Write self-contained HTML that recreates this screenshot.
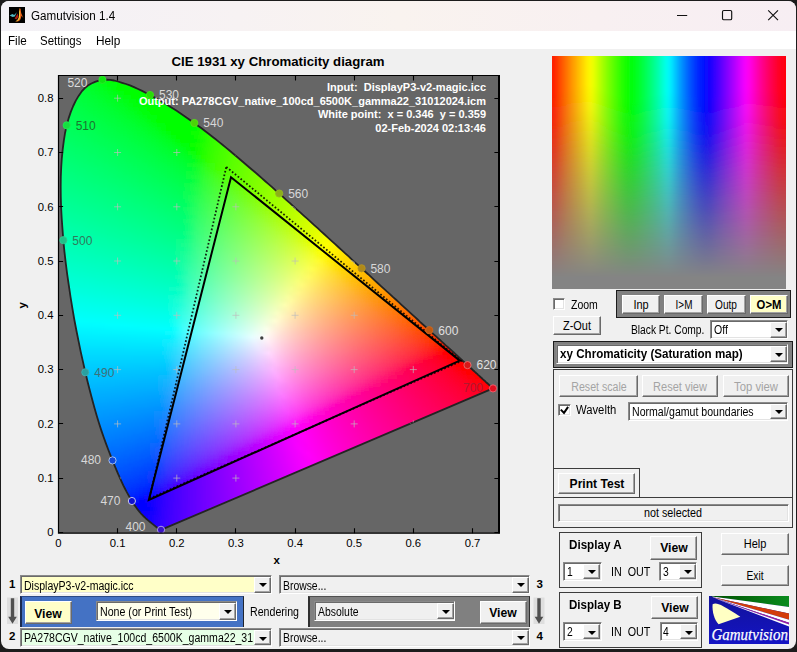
<!DOCTYPE html>
<html><head><meta charset="utf-8"><title>Gamutvision 1.4</title>
<style>
html,body{margin:0;padding:0;}
body{width:797px;height:652px;background:#1c1c1c;position:relative;overflow:hidden;font-family:'Liberation Sans', Arial, sans-serif;}
#win{position:absolute;left:1px;top:1px;width:795px;height:648px;border-radius:8px;background:#f0f0f0;overflow:hidden;}
#win *{box-sizing:border-box;}
#c{position:absolute;left:-1px;top:-1px;width:797px;height:652px;}
#c div{position:absolute;}
.t{position:absolute;white-space:nowrap;}
.btn{border:1px solid;border-color:#fff #6a6a6a #6a6a6a #fff;box-shadow:inset -1px -1px 0 #a3a3a3;}
.dd{border:1px solid;border-color:#8a8a8a #fff #fff #8a8a8a;box-shadow:inset 1px 1px 0 #6a6a6a, inset -1px -1px 0 #e3e3e3;}
.arr{width:0;height:0;border-left:4px solid transparent;border-right:4px solid transparent;border-top:4px solid #000;}
.pan{border:1px solid #3c3c3c;}
svg{position:absolute;left:0;top:0;}
</style></head><body><div id="win"><div id="c">

<div class="" style="left:0.0px;top:0.0px;width:797.0px;height:30.5px;background:linear-gradient(90deg,#f3f1f6 0%,#f7f2f3 30%,#f9f3ef 50%,#f8f0f1 75%,#f7eef3 100%);"></div>
<div class="" style="left:0.0px;top:30.5px;width:797.0px;height:18.5px;background:#fff;"></div>
<span class="t" style="left:31.4px;transform-origin:0 50%;top:7.6px;font-size:12px;line-height:16px;font-weight:normal;color:#000;transform:scaleX(0.970);">Gamutvision 1.4</span>
<span class="t" style="left:8.2px;transform-origin:0 50%;top:33.0px;font-size:12px;line-height:16px;font-weight:normal;color:#000;transform:scaleX(0.970);">File</span>
<span class="t" style="left:40.2px;transform-origin:0 50%;top:33.0px;font-size:12px;line-height:16px;font-weight:normal;color:#000;transform:scaleX(0.955);">Settings</span>
<span class="t" style="left:96.3px;transform-origin:0 50%;top:33.0px;font-size:12px;line-height:16px;font-weight:normal;color:#000;transform:scaleX(0.985);">Help</span>
<svg width="797" height="652" viewBox="0 0 797 652" font-family="'Liberation Sans', Arial, sans-serif">
<defs>
<linearGradient id="g0" gradientUnits="userSpaceOnUse" x1="89.4" x2="126.4" y1="0" y2="0"><stop offset="0" stop-color="#00ff23"/><stop offset="0.333" stop-color="#00ff14"/><stop offset="0.667" stop-color="#00ff00"/><stop offset="1" stop-color="#00ff00"/></linearGradient>
<linearGradient id="g1" gradientUnits="userSpaceOnUse" x1="83.6" x2="136.9" y1="0" y2="0"><stop offset="0" stop-color="#00ff2d"/><stop offset="0.25" stop-color="#00ff21"/><stop offset="0.5" stop-color="#00ff0d"/><stop offset="0.75" stop-color="#00ff00"/><stop offset="1" stop-color="#00ff00"/></linearGradient>
<linearGradient id="g2" gradientUnits="userSpaceOnUse" x1="79.7" x2="145.2" y1="0" y2="0"><stop offset="0" stop-color="#00ff34"/><stop offset="0.2" stop-color="#00ff2a"/><stop offset="0.4" stop-color="#00ff1c"/><stop offset="0.6" stop-color="#00ff00"/><stop offset="0.8" stop-color="#00ff00"/><stop offset="1" stop-color="#00ff00"/></linearGradient>
<linearGradient id="g3" gradientUnits="userSpaceOnUse" x1="76.8" x2="152.9" y1="0" y2="0"><stop offset="0" stop-color="#00ff3a"/><stop offset="0.167" stop-color="#00ff31"/><stop offset="0.333" stop-color="#00ff26"/><stop offset="0.5" stop-color="#00ff17"/><stop offset="0.667" stop-color="#00ff00"/><stop offset="0.833" stop-color="#00ff00"/><stop offset="1" stop-color="#00ff00"/></linearGradient>
<linearGradient id="g4" gradientUnits="userSpaceOnUse" x1="74.4" x2="160.2" y1="0" y2="0"><stop offset="0" stop-color="#00ff3f"/><stop offset="0.143" stop-color="#00ff37"/><stop offset="0.286" stop-color="#00ff2e"/><stop offset="0.429" stop-color="#00ff22"/><stop offset="0.571" stop-color="#00ff11"/><stop offset="0.714" stop-color="#00ff00"/><stop offset="0.857" stop-color="#00ff00"/><stop offset="1" stop-color="#00ff00"/></linearGradient>
<linearGradient id="g5" gradientUnits="userSpaceOnUse" x1="72.4" x2="167.0" y1="0" y2="0"><stop offset="0" stop-color="#00ff44"/><stop offset="0.143" stop-color="#00ff3c"/><stop offset="0.286" stop-color="#00ff32"/><stop offset="0.429" stop-color="#00ff26"/><stop offset="0.571" stop-color="#00ff15"/><stop offset="0.714" stop-color="#00ff00"/><stop offset="0.857" stop-color="#00ff00"/><stop offset="1" stop-color="#00ff00"/></linearGradient>
<linearGradient id="g6" gradientUnits="userSpaceOnUse" x1="70.6" x2="173.4" y1="0" y2="0"><stop offset="0" stop-color="#00ff48"/><stop offset="0.125" stop-color="#00ff41"/><stop offset="0.25" stop-color="#00ff38"/><stop offset="0.375" stop-color="#00ff2e"/><stop offset="0.5" stop-color="#00ff22"/><stop offset="0.625" stop-color="#00ff0e"/><stop offset="0.75" stop-color="#00ff00"/><stop offset="0.875" stop-color="#00ff00"/><stop offset="1" stop-color="#00ff00"/></linearGradient>
<linearGradient id="g7" gradientUnits="userSpaceOnUse" x1="68.9" x2="179.6" y1="0" y2="0"><stop offset="0" stop-color="#00ff4c"/><stop offset="0.125" stop-color="#00ff45"/><stop offset="0.25" stop-color="#00ff3c"/><stop offset="0.375" stop-color="#00ff32"/><stop offset="0.5" stop-color="#00ff25"/><stop offset="0.625" stop-color="#00ff12"/><stop offset="0.75" stop-color="#00ff00"/><stop offset="0.875" stop-color="#00ff00"/><stop offset="1" stop-color="#00ff00"/></linearGradient>
<linearGradient id="g8" gradientUnits="userSpaceOnUse" x1="67.6" x2="185.6" y1="0" y2="0"><stop offset="0" stop-color="#00ff50"/><stop offset="0.111" stop-color="#00ff49"/><stop offset="0.222" stop-color="#00ff41"/><stop offset="0.333" stop-color="#00ff39"/><stop offset="0.444" stop-color="#00ff2e"/><stop offset="0.556" stop-color="#00ff21"/><stop offset="0.667" stop-color="#00ff09"/><stop offset="0.778" stop-color="#00ff00"/><stop offset="0.889" stop-color="#00ff00"/><stop offset="1" stop-color="#00ff00"/></linearGradient>
<linearGradient id="g9" gradientUnits="userSpaceOnUse" x1="66.3" x2="191.3" y1="0" y2="0"><stop offset="0" stop-color="#00ff54"/><stop offset="0.111" stop-color="#00ff4d"/><stop offset="0.222" stop-color="#00ff45"/><stop offset="0.333" stop-color="#00ff3c"/><stop offset="0.444" stop-color="#00ff31"/><stop offset="0.556" stop-color="#00ff24"/><stop offset="0.667" stop-color="#00ff0e"/><stop offset="0.778" stop-color="#00ff00"/><stop offset="0.889" stop-color="#00ff00"/><stop offset="1" stop-color="#00ff00"/></linearGradient>
<linearGradient id="g10" gradientUnits="userSpaceOnUse" x1="65.2" x2="196.9" y1="0" y2="0"><stop offset="0" stop-color="#00ff57"/><stop offset="0.1" stop-color="#00ff51"/><stop offset="0.2" stop-color="#00ff4a"/><stop offset="0.3" stop-color="#00ff42"/><stop offset="0.4" stop-color="#00ff39"/><stop offset="0.5" stop-color="#00ff2e"/><stop offset="0.6" stop-color="#00ff20"/><stop offset="0.7" stop-color="#00ff03"/><stop offset="0.8" stop-color="#00ff00"/><stop offset="0.9" stop-color="#00ff00"/><stop offset="1" stop-color="#00ff00"/></linearGradient>
<linearGradient id="g11" gradientUnits="userSpaceOnUse" x1="64.2" x2="202.4" y1="0" y2="0"><stop offset="0" stop-color="#00ff5b"/><stop offset="0.1" stop-color="#00ff54"/><stop offset="0.2" stop-color="#00ff4d"/><stop offset="0.3" stop-color="#00ff45"/><stop offset="0.4" stop-color="#00ff3c"/><stop offset="0.5" stop-color="#00ff31"/><stop offset="0.6" stop-color="#00ff23"/><stop offset="0.7" stop-color="#00ff0a"/><stop offset="0.8" stop-color="#00ff00"/><stop offset="0.9" stop-color="#00ff00"/><stop offset="1" stop-color="#19ff00"/></linearGradient>
<linearGradient id="g12" gradientUnits="userSpaceOnUse" x1="63.4" x2="207.6" y1="0" y2="0"><stop offset="0" stop-color="#00ff5e"/><stop offset="0.0909" stop-color="#00ff58"/><stop offset="0.182" stop-color="#00ff52"/><stop offset="0.273" stop-color="#00ff4a"/><stop offset="0.364" stop-color="#00ff42"/><stop offset="0.455" stop-color="#00ff39"/><stop offset="0.545" stop-color="#00ff2e"/><stop offset="0.636" stop-color="#00ff1f"/><stop offset="0.727" stop-color="#00ff00"/><stop offset="0.818" stop-color="#00ff00"/><stop offset="0.909" stop-color="#00ff00"/><stop offset="1" stop-color="#28ff00"/></linearGradient>
<linearGradient id="g13" gradientUnits="userSpaceOnUse" x1="62.7" x2="212.8" y1="0" y2="0"><stop offset="0" stop-color="#00ff61"/><stop offset="0.0909" stop-color="#00ff5b"/><stop offset="0.182" stop-color="#00ff55"/><stop offset="0.273" stop-color="#00ff4d"/><stop offset="0.364" stop-color="#00ff45"/><stop offset="0.455" stop-color="#00ff3c"/><stop offset="0.545" stop-color="#00ff30"/><stop offset="0.636" stop-color="#00ff22"/><stop offset="0.727" stop-color="#00ff05"/><stop offset="0.818" stop-color="#00ff00"/><stop offset="0.909" stop-color="#11ff00"/><stop offset="1" stop-color="#33ff00"/></linearGradient>
<linearGradient id="g14" gradientUnits="userSpaceOnUse" x1="62.0" x2="217.9" y1="0" y2="0"><stop offset="0" stop-color="#00ff65"/><stop offset="0.0833" stop-color="#00ff5f"/><stop offset="0.167" stop-color="#00ff59"/><stop offset="0.25" stop-color="#00ff52"/><stop offset="0.333" stop-color="#00ff4b"/><stop offset="0.417" stop-color="#00ff43"/><stop offset="0.5" stop-color="#00ff39"/><stop offset="0.583" stop-color="#00ff2e"/><stop offset="0.667" stop-color="#00ff1e"/><stop offset="0.75" stop-color="#00ff00"/><stop offset="0.833" stop-color="#00ff00"/><stop offset="0.917" stop-color="#24ff00"/><stop offset="1" stop-color="#3dff00"/></linearGradient>
<linearGradient id="g15" gradientUnits="userSpaceOnUse" x1="61.4" x2="222.9" y1="0" y2="0"><stop offset="0" stop-color="#00ff68"/><stop offset="0.0833" stop-color="#00ff62"/><stop offset="0.167" stop-color="#00ff5c"/><stop offset="0.25" stop-color="#00ff55"/><stop offset="0.333" stop-color="#00ff4e"/><stop offset="0.417" stop-color="#00ff45"/><stop offset="0.5" stop-color="#00ff3c"/><stop offset="0.583" stop-color="#00ff30"/><stop offset="0.667" stop-color="#00ff21"/><stop offset="0.75" stop-color="#00ff00"/><stop offset="0.833" stop-color="#03ff00"/><stop offset="0.917" stop-color="#2fff00"/><stop offset="1" stop-color="#46ff00"/></linearGradient>
<linearGradient id="g16" gradientUnits="userSpaceOnUse" x1="60.9" x2="227.8" y1="0" y2="0"><stop offset="0" stop-color="#00ff6b"/><stop offset="0.0833" stop-color="#00ff65"/><stop offset="0.167" stop-color="#00ff5f"/><stop offset="0.25" stop-color="#00ff58"/><stop offset="0.333" stop-color="#00ff51"/><stop offset="0.417" stop-color="#00ff48"/><stop offset="0.5" stop-color="#00ff3f"/><stop offset="0.583" stop-color="#00ff33"/><stop offset="0.667" stop-color="#00ff24"/><stop offset="0.75" stop-color="#00ff08"/><stop offset="0.833" stop-color="#1aff00"/><stop offset="0.917" stop-color="#39ff00"/><stop offset="1" stop-color="#4eff00"/></linearGradient>
<linearGradient id="g17" gradientUnits="userSpaceOnUse" x1="60.5" x2="232.7" y1="0" y2="0"><stop offset="0" stop-color="#00ff6e"/><stop offset="0.0769" stop-color="#00ff69"/><stop offset="0.154" stop-color="#00ff63"/><stop offset="0.231" stop-color="#00ff5d"/><stop offset="0.308" stop-color="#00ff56"/><stop offset="0.385" stop-color="#00ff4e"/><stop offset="0.462" stop-color="#00ff46"/><stop offset="0.538" stop-color="#00ff3c"/><stop offset="0.615" stop-color="#00ff30"/><stop offset="0.692" stop-color="#00ff21"/><stop offset="0.769" stop-color="#00ff00"/><stop offset="0.846" stop-color="#2bff00"/><stop offset="0.923" stop-color="#43ff00"/><stop offset="1" stop-color="#56ff00"/></linearGradient>
<linearGradient id="g18" gradientUnits="userSpaceOnUse" x1="60.1" x2="237.4" y1="0" y2="0"><stop offset="0" stop-color="#00ff71"/><stop offset="0.0769" stop-color="#00ff6c"/><stop offset="0.154" stop-color="#00ff66"/><stop offset="0.231" stop-color="#00ff60"/><stop offset="0.308" stop-color="#00ff59"/><stop offset="0.385" stop-color="#00ff51"/><stop offset="0.462" stop-color="#00ff49"/><stop offset="0.538" stop-color="#00ff3f"/><stop offset="0.615" stop-color="#00ff33"/><stop offset="0.692" stop-color="#00ff23"/><stop offset="0.769" stop-color="#11ff05"/><stop offset="0.846" stop-color="#34ff00"/><stop offset="0.923" stop-color="#4bff00"/><stop offset="1" stop-color="#5dff00"/></linearGradient>
<linearGradient id="g19" gradientUnits="userSpaceOnUse" x1="59.7" x2="242.2" y1="0" y2="0"><stop offset="0" stop-color="#00ff74"/><stop offset="0.0714" stop-color="#00ff6f"/><stop offset="0.143" stop-color="#00ff6a"/><stop offset="0.214" stop-color="#00ff64"/><stop offset="0.286" stop-color="#00ff5e"/><stop offset="0.357" stop-color="#00ff57"/><stop offset="0.429" stop-color="#00ff4f"/><stop offset="0.5" stop-color="#00ff47"/><stop offset="0.571" stop-color="#00ff3d"/><stop offset="0.643" stop-color="#00ff31"/><stop offset="0.714" stop-color="#00ff21"/><stop offset="0.786" stop-color="#27ff00"/><stop offset="0.857" stop-color="#40ff00"/><stop offset="0.929" stop-color="#54ff00"/><stop offset="1" stop-color="#65ff00"/></linearGradient>
<linearGradient id="g20" gradientUnits="userSpaceOnUse" x1="59.5" x2="246.9" y1="0" y2="0"><stop offset="0" stop-color="#00ff77"/><stop offset="0.0714" stop-color="#00ff72"/><stop offset="0.143" stop-color="#00ff6c"/><stop offset="0.214" stop-color="#00ff67"/><stop offset="0.286" stop-color="#00ff60"/><stop offset="0.357" stop-color="#00ff59"/><stop offset="0.429" stop-color="#00ff52"/><stop offset="0.5" stop-color="#00ff49"/><stop offset="0.571" stop-color="#00ff3f"/><stop offset="0.643" stop-color="#00ff33"/><stop offset="0.714" stop-color="#00ff23"/><stop offset="0.786" stop-color="#30ff01"/><stop offset="0.857" stop-color="#48ff00"/><stop offset="0.929" stop-color="#5bff00"/><stop offset="1" stop-color="#6cff00"/></linearGradient>
<linearGradient id="g21" gradientUnits="userSpaceOnUse" x1="59.2" x2="251.5" y1="0" y2="0"><stop offset="0" stop-color="#00ff7a"/><stop offset="0.0714" stop-color="#00ff75"/><stop offset="0.143" stop-color="#00ff6f"/><stop offset="0.214" stop-color="#00ff6a"/><stop offset="0.286" stop-color="#00ff63"/><stop offset="0.357" stop-color="#00ff5c"/><stop offset="0.429" stop-color="#00ff55"/><stop offset="0.5" stop-color="#00ff4c"/><stop offset="0.571" stop-color="#00ff42"/><stop offset="0.643" stop-color="#00ff36"/><stop offset="0.714" stop-color="#18ff26"/><stop offset="0.786" stop-color="#39ff0a"/><stop offset="0.857" stop-color="#4fff00"/><stop offset="0.929" stop-color="#62ff00"/><stop offset="1" stop-color="#73ff00"/></linearGradient>
<linearGradient id="g22" gradientUnits="userSpaceOnUse" x1="59.0" x2="256.2" y1="0" y2="0"><stop offset="0" stop-color="#00ff7d"/><stop offset="0.0667" stop-color="#00ff78"/><stop offset="0.133" stop-color="#00ff73"/><stop offset="0.2" stop-color="#00ff6e"/><stop offset="0.267" stop-color="#00ff68"/><stop offset="0.333" stop-color="#00ff61"/><stop offset="0.4" stop-color="#00ff5a"/><stop offset="0.467" stop-color="#00ff53"/><stop offset="0.533" stop-color="#00ff4a"/><stop offset="0.6" stop-color="#00ff40"/><stop offset="0.667" stop-color="#00ff34"/><stop offset="0.733" stop-color="#2dff24"/><stop offset="0.8" stop-color="#45ff00"/><stop offset="0.867" stop-color="#59ff00"/><stop offset="0.933" stop-color="#6aff00"/><stop offset="1" stop-color="#7aff00"/></linearGradient>
<linearGradient id="g23" gradientUnits="userSpaceOnUse" x1="58.9" x2="260.8" y1="0" y2="0"><stop offset="0" stop-color="#00ff80"/><stop offset="0.0667" stop-color="#00ff7b"/><stop offset="0.133" stop-color="#00ff76"/><stop offset="0.2" stop-color="#00ff70"/><stop offset="0.267" stop-color="#00ff6b"/><stop offset="0.333" stop-color="#00ff64"/><stop offset="0.4" stop-color="#00ff5d"/><stop offset="0.467" stop-color="#00ff55"/><stop offset="0.533" stop-color="#00ff4d"/><stop offset="0.6" stop-color="#00ff42"/><stop offset="0.667" stop-color="#0fff36"/><stop offset="0.733" stop-color="#35ff26"/><stop offset="0.8" stop-color="#4cff09"/><stop offset="0.867" stop-color="#5fff00"/><stop offset="0.933" stop-color="#71ff00"/><stop offset="1" stop-color="#81ff00"/></linearGradient>
<linearGradient id="g24" gradientUnits="userSpaceOnUse" x1="58.8" x2="265.3" y1="0" y2="0"><stop offset="0" stop-color="#00ff83"/><stop offset="0.0667" stop-color="#00ff7e"/><stop offset="0.133" stop-color="#00ff79"/><stop offset="0.2" stop-color="#00ff73"/><stop offset="0.267" stop-color="#00ff6d"/><stop offset="0.333" stop-color="#00ff67"/><stop offset="0.4" stop-color="#00ff60"/><stop offset="0.467" stop-color="#00ff58"/><stop offset="0.533" stop-color="#00ff4f"/><stop offset="0.6" stop-color="#00ff45"/><stop offset="0.667" stop-color="#1dff39"/><stop offset="0.733" stop-color="#3dff29"/><stop offset="0.8" stop-color="#53ff0f"/><stop offset="0.867" stop-color="#66ff00"/><stop offset="0.933" stop-color="#77ff00"/><stop offset="1" stop-color="#87ff00"/></linearGradient>
<linearGradient id="g25" gradientUnits="userSpaceOnUse" x1="58.7" x2="269.9" y1="0" y2="0"><stop offset="0" stop-color="#00ff85"/><stop offset="0.0625" stop-color="#00ff81"/><stop offset="0.125" stop-color="#00ff7c"/><stop offset="0.188" stop-color="#00ff77"/><stop offset="0.25" stop-color="#00ff72"/><stop offset="0.312" stop-color="#00ff6c"/><stop offset="0.375" stop-color="#00ff65"/><stop offset="0.438" stop-color="#00ff5e"/><stop offset="0.5" stop-color="#00ff56"/><stop offset="0.562" stop-color="#00ff4e"/><stop offset="0.625" stop-color="#00ff43"/><stop offset="0.688" stop-color="#32ff37"/><stop offset="0.75" stop-color="#4aff27"/><stop offset="0.812" stop-color="#5dff09"/><stop offset="0.875" stop-color="#6fff00"/><stop offset="0.938" stop-color="#7fff00"/><stop offset="1" stop-color="#8eff00"/></linearGradient>
<linearGradient id="g26" gradientUnits="userSpaceOnUse" x1="58.7" x2="274.4" y1="0" y2="0"><stop offset="0" stop-color="#00ff88"/><stop offset="0.0625" stop-color="#00ff84"/><stop offset="0.125" stop-color="#00ff7f"/><stop offset="0.188" stop-color="#00ff7a"/><stop offset="0.25" stop-color="#00ff75"/><stop offset="0.312" stop-color="#00ff6f"/><stop offset="0.375" stop-color="#00ff68"/><stop offset="0.438" stop-color="#00ff61"/><stop offset="0.5" stop-color="#00ff59"/><stop offset="0.562" stop-color="#00ff50"/><stop offset="0.625" stop-color="#17ff46"/><stop offset="0.688" stop-color="#39ff39"/><stop offset="0.75" stop-color="#50ff29"/><stop offset="0.812" stop-color="#64ff0f"/><stop offset="0.875" stop-color="#75ff00"/><stop offset="0.938" stop-color="#86ff00"/><stop offset="1" stop-color="#95ff00"/></linearGradient>
<linearGradient id="g27" gradientUnits="userSpaceOnUse" x1="58.7" x2="278.9" y1="0" y2="0"><stop offset="0" stop-color="#00ff8b"/><stop offset="0.0625" stop-color="#00ff87"/><stop offset="0.125" stop-color="#00ff82"/><stop offset="0.188" stop-color="#00ff7d"/><stop offset="0.25" stop-color="#00ff78"/><stop offset="0.312" stop-color="#00ff72"/><stop offset="0.375" stop-color="#00ff6b"/><stop offset="0.438" stop-color="#00ff64"/><stop offset="0.5" stop-color="#00ff5c"/><stop offset="0.562" stop-color="#00ff53"/><stop offset="0.625" stop-color="#22ff48"/><stop offset="0.688" stop-color="#40ff3c"/><stop offset="0.75" stop-color="#57ff2c"/><stop offset="0.812" stop-color="#6aff13"/><stop offset="0.875" stop-color="#7cff00"/><stop offset="0.938" stop-color="#8cff00"/><stop offset="1" stop-color="#9cff00"/></linearGradient>
<linearGradient id="g28" gradientUnits="userSpaceOnUse" x1="58.7" x2="283.4" y1="0" y2="0"><stop offset="0" stop-color="#00ff8e"/><stop offset="0.0588" stop-color="#00ff8a"/><stop offset="0.118" stop-color="#00ff86"/><stop offset="0.176" stop-color="#00ff81"/><stop offset="0.235" stop-color="#00ff7c"/><stop offset="0.294" stop-color="#00ff76"/><stop offset="0.353" stop-color="#00ff70"/><stop offset="0.412" stop-color="#00ff6a"/><stop offset="0.471" stop-color="#00ff62"/><stop offset="0.529" stop-color="#00ff5a"/><stop offset="0.588" stop-color="#10ff51"/><stop offset="0.647" stop-color="#36ff47"/><stop offset="0.706" stop-color="#4eff3a"/><stop offset="0.765" stop-color="#62ff2a"/><stop offset="0.824" stop-color="#74ff0f"/><stop offset="0.882" stop-color="#84ff00"/><stop offset="0.941" stop-color="#94ff00"/><stop offset="1" stop-color="#a3ff00"/></linearGradient>
<linearGradient id="g29" gradientUnits="userSpaceOnUse" x1="58.8" x2="287.9" y1="0" y2="0"><stop offset="0" stop-color="#00ff91"/><stop offset="0.0588" stop-color="#00ff8d"/><stop offset="0.118" stop-color="#00ff89"/><stop offset="0.176" stop-color="#00ff84"/><stop offset="0.235" stop-color="#00ff7f"/><stop offset="0.294" stop-color="#00ff79"/><stop offset="0.353" stop-color="#00ff73"/><stop offset="0.412" stop-color="#00ff6d"/><stop offset="0.471" stop-color="#00ff65"/><stop offset="0.529" stop-color="#00ff5d"/><stop offset="0.588" stop-color="#1dff54"/><stop offset="0.647" stop-color="#3eff4a"/><stop offset="0.706" stop-color="#55ff3d"/><stop offset="0.765" stop-color="#68ff2d"/><stop offset="0.824" stop-color="#7aff13"/><stop offset="0.882" stop-color="#8bff00"/><stop offset="0.941" stop-color="#9bff00"/><stop offset="1" stop-color="#aaff00"/></linearGradient>
<linearGradient id="g30" gradientUnits="userSpaceOnUse" x1="58.9" x2="292.3" y1="0" y2="0"><stop offset="0" stop-color="#00ff94"/><stop offset="0.0588" stop-color="#00ff90"/><stop offset="0.118" stop-color="#00ff8b"/><stop offset="0.176" stop-color="#00ff87"/><stop offset="0.235" stop-color="#00ff82"/><stop offset="0.294" stop-color="#00ff7c"/><stop offset="0.353" stop-color="#00ff76"/><stop offset="0.412" stop-color="#00ff6f"/><stop offset="0.471" stop-color="#00ff68"/><stop offset="0.529" stop-color="#00ff60"/><stop offset="0.588" stop-color="#27ff57"/><stop offset="0.647" stop-color="#44ff4c"/><stop offset="0.706" stop-color="#5bff40"/><stop offset="0.765" stop-color="#6eff30"/><stop offset="0.824" stop-color="#80ff17"/><stop offset="0.882" stop-color="#91ff00"/><stop offset="0.941" stop-color="#a2ff00"/><stop offset="1" stop-color="#b2ff00"/></linearGradient>
<linearGradient id="g31" gradientUnits="userSpaceOnUse" x1="59.0" x2="296.8" y1="0" y2="0"><stop offset="0" stop-color="#00ff97"/><stop offset="0.0588" stop-color="#00ff93"/><stop offset="0.118" stop-color="#00ff8e"/><stop offset="0.176" stop-color="#00ff8a"/><stop offset="0.235" stop-color="#00ff84"/><stop offset="0.294" stop-color="#00ff7f"/><stop offset="0.353" stop-color="#00ff79"/><stop offset="0.412" stop-color="#00ff72"/><stop offset="0.471" stop-color="#00ff6b"/><stop offset="0.529" stop-color="#00ff63"/><stop offset="0.588" stop-color="#2fff5a"/><stop offset="0.647" stop-color="#4bff4f"/><stop offset="0.706" stop-color="#61ff42"/><stop offset="0.765" stop-color="#75ff32"/><stop offset="0.824" stop-color="#87ff1a"/><stop offset="0.882" stop-color="#98ff00"/><stop offset="0.941" stop-color="#a9ff00"/><stop offset="1" stop-color="#b9ff00"/></linearGradient>
<linearGradient id="g32" gradientUnits="userSpaceOnUse" x1="59.1" x2="301.2" y1="0" y2="0"><stop offset="0" stop-color="#00ff9a"/><stop offset="0.0556" stop-color="#00ff96"/><stop offset="0.111" stop-color="#00ff92"/><stop offset="0.167" stop-color="#00ff8d"/><stop offset="0.222" stop-color="#00ff89"/><stop offset="0.278" stop-color="#00ff83"/><stop offset="0.333" stop-color="#00ff7e"/><stop offset="0.389" stop-color="#00ff78"/><stop offset="0.444" stop-color="#00ff71"/><stop offset="0.5" stop-color="#00ff6a"/><stop offset="0.556" stop-color="#23ff62"/><stop offset="0.611" stop-color="#42ff58"/><stop offset="0.667" stop-color="#59ff4e"/><stop offset="0.722" stop-color="#6dff41"/><stop offset="0.778" stop-color="#7fff31"/><stop offset="0.833" stop-color="#90ff18"/><stop offset="0.889" stop-color="#a1ff00"/><stop offset="0.944" stop-color="#b1ff00"/><stop offset="1" stop-color="#c1ff00"/></linearGradient>
<linearGradient id="g33" gradientUnits="userSpaceOnUse" x1="59.3" x2="305.6" y1="0" y2="0"><stop offset="0" stop-color="#00ff9d"/><stop offset="0.0556" stop-color="#00ff99"/><stop offset="0.111" stop-color="#00ff95"/><stop offset="0.167" stop-color="#00ff90"/><stop offset="0.222" stop-color="#00ff8c"/><stop offset="0.278" stop-color="#00ff86"/><stop offset="0.333" stop-color="#00ff81"/><stop offset="0.389" stop-color="#00ff7b"/><stop offset="0.444" stop-color="#00ff74"/><stop offset="0.5" stop-color="#00ff6d"/><stop offset="0.556" stop-color="#2cff64"/><stop offset="0.611" stop-color="#49ff5b"/><stop offset="0.667" stop-color="#5fff50"/><stop offset="0.722" stop-color="#73ff44"/><stop offset="0.778" stop-color="#85ff33"/><stop offset="0.833" stop-color="#97ff1b"/><stop offset="0.889" stop-color="#a8ff00"/><stop offset="0.944" stop-color="#b8ff00"/><stop offset="1" stop-color="#c9ff00"/></linearGradient>
<linearGradient id="g34" gradientUnits="userSpaceOnUse" x1="59.6" x2="310.0" y1="0" y2="0"><stop offset="0" stop-color="#00ffa0"/><stop offset="0.0556" stop-color="#00ff9c"/><stop offset="0.111" stop-color="#00ff98"/><stop offset="0.167" stop-color="#00ff93"/><stop offset="0.222" stop-color="#00ff8f"/><stop offset="0.278" stop-color="#00ff89"/><stop offset="0.333" stop-color="#00ff84"/><stop offset="0.389" stop-color="#00ff7e"/><stop offset="0.444" stop-color="#00ff77"/><stop offset="0.5" stop-color="#00ff70"/><stop offset="0.556" stop-color="#34ff67"/><stop offset="0.611" stop-color="#4fff5e"/><stop offset="0.667" stop-color="#65ff53"/><stop offset="0.722" stop-color="#79ff46"/><stop offset="0.778" stop-color="#8cff36"/><stop offset="0.833" stop-color="#9eff1f"/><stop offset="0.889" stop-color="#afff00"/><stop offset="0.944" stop-color="#c0ff00"/><stop offset="1" stop-color="#d1ff00"/></linearGradient>
<linearGradient id="g35" gradientUnits="userSpaceOnUse" x1="59.8" x2="314.5" y1="0" y2="0"><stop offset="0" stop-color="#00ffa3"/><stop offset="0.0526" stop-color="#00ff9f"/><stop offset="0.105" stop-color="#00ff9b"/><stop offset="0.158" stop-color="#00ff97"/><stop offset="0.211" stop-color="#00ff93"/><stop offset="0.263" stop-color="#00ff8e"/><stop offset="0.316" stop-color="#00ff89"/><stop offset="0.368" stop-color="#00ff83"/><stop offset="0.421" stop-color="#00ff7d"/><stop offset="0.474" stop-color="#00ff76"/><stop offset="0.526" stop-color="#29ff6f"/><stop offset="0.579" stop-color="#47ff67"/><stop offset="0.632" stop-color="#5eff5d"/><stop offset="0.684" stop-color="#72ff52"/><stop offset="0.737" stop-color="#85ff45"/><stop offset="0.789" stop-color="#96ff35"/><stop offset="0.842" stop-color="#a7ff1d"/><stop offset="0.895" stop-color="#b8ff00"/><stop offset="0.947" stop-color="#c8ff00"/><stop offset="1" stop-color="#d9ff00"/></linearGradient>
<linearGradient id="g36" gradientUnits="userSpaceOnUse" x1="60.1" x2="318.9" y1="0" y2="0"><stop offset="0" stop-color="#00ffa6"/><stop offset="0.0526" stop-color="#00ffa3"/><stop offset="0.105" stop-color="#00ff9f"/><stop offset="0.158" stop-color="#00ff9a"/><stop offset="0.211" stop-color="#00ff96"/><stop offset="0.263" stop-color="#00ff91"/><stop offset="0.316" stop-color="#00ff8c"/><stop offset="0.368" stop-color="#00ff86"/><stop offset="0.421" stop-color="#00ff80"/><stop offset="0.474" stop-color="#00ff79"/><stop offset="0.526" stop-color="#31ff72"/><stop offset="0.579" stop-color="#4dff69"/><stop offset="0.632" stop-color="#64ff60"/><stop offset="0.684" stop-color="#78ff55"/><stop offset="0.737" stop-color="#8bff48"/><stop offset="0.789" stop-color="#9dff38"/><stop offset="0.842" stop-color="#aeff20"/><stop offset="0.895" stop-color="#bfff00"/><stop offset="0.947" stop-color="#d0ff00"/><stop offset="1" stop-color="#e1ff00"/></linearGradient>
<linearGradient id="g37" gradientUnits="userSpaceOnUse" x1="60.3" x2="323.3" y1="0" y2="0"><stop offset="0" stop-color="#00ffa9"/><stop offset="0.0526" stop-color="#00ffa6"/><stop offset="0.105" stop-color="#00ffa2"/><stop offset="0.158" stop-color="#00ff9e"/><stop offset="0.211" stop-color="#00ff99"/><stop offset="0.263" stop-color="#00ff94"/><stop offset="0.316" stop-color="#00ff8f"/><stop offset="0.368" stop-color="#00ff89"/><stop offset="0.421" stop-color="#00ff83"/><stop offset="0.474" stop-color="#05ff7c"/><stop offset="0.526" stop-color="#39ff75"/><stop offset="0.579" stop-color="#54ff6d"/><stop offset="0.632" stop-color="#6aff63"/><stop offset="0.684" stop-color="#7fff58"/><stop offset="0.737" stop-color="#91ff4b"/><stop offset="0.789" stop-color="#a4ff3b"/><stop offset="0.842" stop-color="#b5ff23"/><stop offset="0.895" stop-color="#c7ff00"/><stop offset="0.947" stop-color="#d8ff00"/><stop offset="1" stop-color="#eaff00"/></linearGradient>
<linearGradient id="g38" gradientUnits="userSpaceOnUse" x1="60.6" x2="327.7" y1="0" y2="0"><stop offset="0" stop-color="#00ffac"/><stop offset="0.05" stop-color="#00ffa9"/><stop offset="0.1" stop-color="#00ffa5"/><stop offset="0.15" stop-color="#00ffa1"/><stop offset="0.2" stop-color="#00ff9d"/><stop offset="0.25" stop-color="#00ff99"/><stop offset="0.3" stop-color="#00ff94"/><stop offset="0.35" stop-color="#00ff8f"/><stop offset="0.4" stop-color="#00ff89"/><stop offset="0.45" stop-color="#00ff83"/><stop offset="0.5" stop-color="#2fff7c"/><stop offset="0.55" stop-color="#4cff74"/><stop offset="0.6" stop-color="#63ff6c"/><stop offset="0.65" stop-color="#78ff62"/><stop offset="0.7" stop-color="#8bff57"/><stop offset="0.75" stop-color="#9dff4a"/><stop offset="0.8" stop-color="#aeff3a"/><stop offset="0.85" stop-color="#bfff22"/><stop offset="0.9" stop-color="#d1ff00"/><stop offset="0.95" stop-color="#e2ff00"/><stop offset="1" stop-color="#f3ff00"/></linearGradient>
<linearGradient id="g39" gradientUnits="userSpaceOnUse" x1="61.0" x2="332.1" y1="0" y2="0"><stop offset="0" stop-color="#00ffb0"/><stop offset="0.05" stop-color="#00ffac"/><stop offset="0.1" stop-color="#00ffa8"/><stop offset="0.15" stop-color="#00ffa5"/><stop offset="0.2" stop-color="#00ffa0"/><stop offset="0.25" stop-color="#00ff9c"/><stop offset="0.3" stop-color="#00ff97"/><stop offset="0.35" stop-color="#00ff92"/><stop offset="0.4" stop-color="#00ff8c"/><stop offset="0.45" stop-color="#00ff86"/><stop offset="0.5" stop-color="#37ff7f"/><stop offset="0.55" stop-color="#53ff78"/><stop offset="0.6" stop-color="#6aff6f"/><stop offset="0.65" stop-color="#7eff66"/><stop offset="0.7" stop-color="#91ff5a"/><stop offset="0.75" stop-color="#a4ff4d"/><stop offset="0.8" stop-color="#b5ff3d"/><stop offset="0.85" stop-color="#c7ff25"/><stop offset="0.9" stop-color="#d9ff00"/><stop offset="0.95" stop-color="#ebff00"/><stop offset="1" stop-color="#fdff00"/></linearGradient>
<linearGradient id="g40" gradientUnits="userSpaceOnUse" x1="61.3" x2="336.5" y1="0" y2="0"><stop offset="0" stop-color="#00ffb3"/><stop offset="0.05" stop-color="#00ffaf"/><stop offset="0.1" stop-color="#00ffac"/><stop offset="0.15" stop-color="#00ffa8"/><stop offset="0.2" stop-color="#00ffa4"/><stop offset="0.25" stop-color="#00ff9f"/><stop offset="0.3" stop-color="#00ff9a"/><stop offset="0.35" stop-color="#00ff95"/><stop offset="0.4" stop-color="#00ff8f"/><stop offset="0.45" stop-color="#13ff89"/><stop offset="0.5" stop-color="#3eff82"/><stop offset="0.55" stop-color="#59ff7b"/><stop offset="0.6" stop-color="#70ff72"/><stop offset="0.65" stop-color="#84ff69"/><stop offset="0.7" stop-color="#98ff5e"/><stop offset="0.75" stop-color="#aaff50"/><stop offset="0.8" stop-color="#bdff40"/><stop offset="0.85" stop-color="#cfff28"/><stop offset="0.9" stop-color="#e1ff00"/><stop offset="0.95" stop-color="#f4ff00"/><stop offset="1" stop-color="#fff800"/></linearGradient>
<linearGradient id="g41" gradientUnits="userSpaceOnUse" x1="61.7" x2="340.8" y1="0" y2="0"><stop offset="0" stop-color="#00ffb6"/><stop offset="0.05" stop-color="#00ffb3"/><stop offset="0.1" stop-color="#00ffaf"/><stop offset="0.15" stop-color="#00ffab"/><stop offset="0.2" stop-color="#00ffa7"/><stop offset="0.25" stop-color="#00ffa3"/><stop offset="0.3" stop-color="#00ff9e"/><stop offset="0.35" stop-color="#00ff99"/><stop offset="0.4" stop-color="#00ff93"/><stop offset="0.45" stop-color="#1fff8d"/><stop offset="0.5" stop-color="#45ff86"/><stop offset="0.55" stop-color="#5fff7e"/><stop offset="0.6" stop-color="#76ff76"/><stop offset="0.65" stop-color="#8bff6c"/><stop offset="0.7" stop-color="#9eff61"/><stop offset="0.75" stop-color="#b2ff53"/><stop offset="0.8" stop-color="#c4ff43"/><stop offset="0.85" stop-color="#d7ff2b"/><stop offset="0.9" stop-color="#eaff00"/><stop offset="0.95" stop-color="#fdff00"/><stop offset="1" stop-color="#ffee00"/></linearGradient>
<linearGradient id="g42" gradientUnits="userSpaceOnUse" x1="62.1" x2="345.2" y1="0" y2="0"><stop offset="0" stop-color="#00ffb9"/><stop offset="0.0476" stop-color="#00ffb6"/><stop offset="0.0952" stop-color="#00ffb3"/><stop offset="0.143" stop-color="#00ffaf"/><stop offset="0.19" stop-color="#00ffab"/><stop offset="0.238" stop-color="#00ffa7"/><stop offset="0.286" stop-color="#00ffa3"/><stop offset="0.333" stop-color="#00ff9e"/><stop offset="0.381" stop-color="#00ff99"/><stop offset="0.429" stop-color="#0fff93"/><stop offset="0.476" stop-color="#3dff8d"/><stop offset="0.524" stop-color="#58ff86"/><stop offset="0.571" stop-color="#6fff7e"/><stop offset="0.619" stop-color="#84ff75"/><stop offset="0.667" stop-color="#98ff6c"/><stop offset="0.714" stop-color="#abff60"/><stop offset="0.762" stop-color="#bdff53"/><stop offset="0.81" stop-color="#d0ff42"/><stop offset="0.857" stop-color="#e2ff2a"/><stop offset="0.905" stop-color="#f5ff00"/><stop offset="0.952" stop-color="#fff600"/><stop offset="1" stop-color="#ffe500"/></linearGradient>
<linearGradient id="g43" gradientUnits="userSpaceOnUse" x1="62.5" x2="349.6" y1="0" y2="0"><stop offset="0" stop-color="#00ffbd"/><stop offset="0.0476" stop-color="#00ffb9"/><stop offset="0.0952" stop-color="#00ffb6"/><stop offset="0.143" stop-color="#00ffb2"/><stop offset="0.19" stop-color="#00ffaf"/><stop offset="0.238" stop-color="#00ffaa"/><stop offset="0.286" stop-color="#00ffa6"/><stop offset="0.333" stop-color="#00ffa1"/><stop offset="0.381" stop-color="#00ff9c"/><stop offset="0.429" stop-color="#1dff96"/><stop offset="0.476" stop-color="#44ff90"/><stop offset="0.524" stop-color="#5fff89"/><stop offset="0.571" stop-color="#76ff82"/><stop offset="0.619" stop-color="#8bff79"/><stop offset="0.667" stop-color="#9fff6f"/><stop offset="0.714" stop-color="#b2ff64"/><stop offset="0.762" stop-color="#c5ff56"/><stop offset="0.81" stop-color="#d8ff45"/><stop offset="0.857" stop-color="#ebff2e"/><stop offset="0.905" stop-color="#feff00"/><stop offset="0.952" stop-color="#ffed00"/><stop offset="1" stop-color="#ffdd00"/></linearGradient>
<linearGradient id="g44" gradientUnits="userSpaceOnUse" x1="62.9" x2="354.0" y1="0" y2="0"><stop offset="0" stop-color="#00ffc0"/><stop offset="0.0476" stop-color="#00ffbd"/><stop offset="0.0952" stop-color="#00ffb9"/><stop offset="0.143" stop-color="#00ffb6"/><stop offset="0.19" stop-color="#00ffb2"/><stop offset="0.238" stop-color="#00ffae"/><stop offset="0.286" stop-color="#00ffaa"/><stop offset="0.333" stop-color="#00ffa5"/><stop offset="0.381" stop-color="#00ffa0"/><stop offset="0.429" stop-color="#27ff9a"/><stop offset="0.476" stop-color="#4bff94"/><stop offset="0.524" stop-color="#65ff8d"/><stop offset="0.571" stop-color="#7cff85"/><stop offset="0.619" stop-color="#91ff7d"/><stop offset="0.667" stop-color="#a6ff73"/><stop offset="0.714" stop-color="#b9ff67"/><stop offset="0.762" stop-color="#cdff5a"/><stop offset="0.81" stop-color="#e1ff49"/><stop offset="0.857" stop-color="#f4ff31"/><stop offset="0.905" stop-color="#fff600"/><stop offset="0.952" stop-color="#ffe400"/><stop offset="1" stop-color="#ffd400"/></linearGradient>
<linearGradient id="g45" gradientUnits="userSpaceOnUse" x1="63.4" x2="358.3" y1="0" y2="0"><stop offset="0" stop-color="#00ffc3"/><stop offset="0.0455" stop-color="#00ffc0"/><stop offset="0.0909" stop-color="#00ffbd"/><stop offset="0.136" stop-color="#00ffba"/><stop offset="0.182" stop-color="#00ffb6"/><stop offset="0.227" stop-color="#00ffb3"/><stop offset="0.273" stop-color="#00ffae"/><stop offset="0.318" stop-color="#00ffaa"/><stop offset="0.364" stop-color="#00ffa5"/><stop offset="0.409" stop-color="#1bffa0"/><stop offset="0.455" stop-color="#43ff9a"/><stop offset="0.5" stop-color="#5fff94"/><stop offset="0.545" stop-color="#76ff8d"/><stop offset="0.591" stop-color="#8bff85"/><stop offset="0.636" stop-color="#a0ff7d"/><stop offset="0.682" stop-color="#b3ff73"/><stop offset="0.727" stop-color="#c6ff67"/><stop offset="0.773" stop-color="#daff5a"/><stop offset="0.818" stop-color="#edff48"/><stop offset="0.864" stop-color="#fffd30"/><stop offset="0.909" stop-color="#ffeb00"/><stop offset="0.955" stop-color="#ffda00"/><stop offset="1" stop-color="#ffcc00"/></linearGradient>
<linearGradient id="g46" gradientUnits="userSpaceOnUse" x1="63.8" x2="362.7" y1="0" y2="0"><stop offset="0" stop-color="#00ffc7"/><stop offset="0.0455" stop-color="#00ffc4"/><stop offset="0.0909" stop-color="#00ffc1"/><stop offset="0.136" stop-color="#00ffbe"/><stop offset="0.182" stop-color="#00ffba"/><stop offset="0.227" stop-color="#00ffb6"/><stop offset="0.273" stop-color="#00ffb2"/><stop offset="0.318" stop-color="#00ffae"/><stop offset="0.364" stop-color="#00ffa9"/><stop offset="0.409" stop-color="#26ffa4"/><stop offset="0.455" stop-color="#4aff9e"/><stop offset="0.5" stop-color="#65ff98"/><stop offset="0.545" stop-color="#7cff91"/><stop offset="0.591" stop-color="#92ff89"/><stop offset="0.636" stop-color="#a6ff81"/><stop offset="0.682" stop-color="#bbff77"/><stop offset="0.727" stop-color="#ceff6b"/><stop offset="0.773" stop-color="#e2ff5d"/><stop offset="0.818" stop-color="#f6ff4c"/><stop offset="0.864" stop-color="#fff432"/><stop offset="0.909" stop-color="#ffe200"/><stop offset="0.955" stop-color="#ffd200"/><stop offset="1" stop-color="#ffc300"/></linearGradient>
<linearGradient id="g47" gradientUnits="userSpaceOnUse" x1="64.4" x2="367.1" y1="0" y2="0"><stop offset="0" stop-color="#00ffca"/><stop offset="0.0455" stop-color="#00ffc7"/><stop offset="0.0909" stop-color="#00ffc4"/><stop offset="0.136" stop-color="#00ffc1"/><stop offset="0.182" stop-color="#00ffbe"/><stop offset="0.227" stop-color="#00ffba"/><stop offset="0.273" stop-color="#00ffb6"/><stop offset="0.318" stop-color="#00ffb2"/><stop offset="0.364" stop-color="#00ffad"/><stop offset="0.409" stop-color="#2fffa8"/><stop offset="0.455" stop-color="#51ffa2"/><stop offset="0.5" stop-color="#6bff9c"/><stop offset="0.545" stop-color="#83ff95"/><stop offset="0.591" stop-color="#99ff8d"/><stop offset="0.636" stop-color="#aeff85"/><stop offset="0.682" stop-color="#c2ff7b"/><stop offset="0.727" stop-color="#d7ff6f"/><stop offset="0.773" stop-color="#ebff61"/><stop offset="0.818" stop-color="#fffe4f"/><stop offset="0.864" stop-color="#ffea33"/><stop offset="0.909" stop-color="#ffd900"/><stop offset="0.955" stop-color="#ffc900"/><stop offset="1" stop-color="#ffbb00"/></linearGradient>
<linearGradient id="g48" gradientUnits="userSpaceOnUse" x1="64.9" x2="371.4" y1="0" y2="0"><stop offset="0" stop-color="#00ffce"/><stop offset="0.0455" stop-color="#00ffcb"/><stop offset="0.0909" stop-color="#00ffc8"/><stop offset="0.136" stop-color="#00ffc5"/><stop offset="0.182" stop-color="#00ffc1"/><stop offset="0.227" stop-color="#00ffbe"/><stop offset="0.273" stop-color="#00ffba"/><stop offset="0.318" stop-color="#00ffb6"/><stop offset="0.364" stop-color="#00ffb1"/><stop offset="0.409" stop-color="#37ffac"/><stop offset="0.455" stop-color="#58ffa6"/><stop offset="0.5" stop-color="#72ffa0"/><stop offset="0.545" stop-color="#89ff99"/><stop offset="0.591" stop-color="#a0ff91"/><stop offset="0.636" stop-color="#b5ff89"/><stop offset="0.682" stop-color="#caff7f"/><stop offset="0.727" stop-color="#dfff73"/><stop offset="0.773" stop-color="#f5ff65"/><stop offset="0.818" stop-color="#fff450"/><stop offset="0.864" stop-color="#ffe134"/><stop offset="0.909" stop-color="#ffd00b"/><stop offset="0.955" stop-color="#ffc100"/><stop offset="1" stop-color="#ffb400"/></linearGradient>
<linearGradient id="g49" gradientUnits="userSpaceOnUse" x1="65.4" x2="375.8" y1="0" y2="0"><stop offset="0" stop-color="#00ffd2"/><stop offset="0.0435" stop-color="#00ffcf"/><stop offset="0.087" stop-color="#00ffcc"/><stop offset="0.13" stop-color="#00ffc9"/><stop offset="0.174" stop-color="#00ffc6"/><stop offset="0.217" stop-color="#00ffc3"/><stop offset="0.261" stop-color="#00ffbf"/><stop offset="0.304" stop-color="#00ffbb"/><stop offset="0.348" stop-color="#00ffb7"/><stop offset="0.391" stop-color="#2fffb2"/><stop offset="0.435" stop-color="#51ffad"/><stop offset="0.478" stop-color="#6cffa7"/><stop offset="0.522" stop-color="#84ffa1"/><stop offset="0.565" stop-color="#9aff9a"/><stop offset="0.609" stop-color="#afff92"/><stop offset="0.652" stop-color="#c4ff89"/><stop offset="0.696" stop-color="#d9ff7f"/><stop offset="0.739" stop-color="#eeff74"/><stop offset="0.783" stop-color="#fffb64"/><stop offset="0.826" stop-color="#ffe74c"/><stop offset="0.87" stop-color="#ffd632"/><stop offset="0.913" stop-color="#ffc708"/><stop offset="0.957" stop-color="#ffb900"/><stop offset="1" stop-color="#ffac00"/></linearGradient>
<linearGradient id="g50" gradientUnits="userSpaceOnUse" x1="66.0" x2="380.2" y1="0" y2="0"><stop offset="0" stop-color="#00ffd5"/><stop offset="0.0435" stop-color="#00ffd3"/><stop offset="0.087" stop-color="#00ffd0"/><stop offset="0.13" stop-color="#00ffcd"/><stop offset="0.174" stop-color="#00ffca"/><stop offset="0.217" stop-color="#00ffc7"/><stop offset="0.261" stop-color="#00ffc3"/><stop offset="0.304" stop-color="#00ffbf"/><stop offset="0.348" stop-color="#00ffbb"/><stop offset="0.391" stop-color="#37ffb6"/><stop offset="0.435" stop-color="#58ffb1"/><stop offset="0.478" stop-color="#73ffab"/><stop offset="0.522" stop-color="#8bffa5"/><stop offset="0.565" stop-color="#a1ff9e"/><stop offset="0.609" stop-color="#b7ff97"/><stop offset="0.652" stop-color="#ccff8e"/><stop offset="0.696" stop-color="#e2ff84"/><stop offset="0.739" stop-color="#f8ff78"/><stop offset="0.783" stop-color="#fff164"/><stop offset="0.826" stop-color="#ffde4c"/><stop offset="0.87" stop-color="#ffcd33"/><stop offset="0.913" stop-color="#ffbe0d"/><stop offset="0.957" stop-color="#ffb100"/><stop offset="1" stop-color="#ffa400"/></linearGradient>
<linearGradient id="g51" gradientUnits="userSpaceOnUse" x1="66.5" x2="384.6" y1="0" y2="0"><stop offset="0" stop-color="#00ffd9"/><stop offset="0.0435" stop-color="#00ffd6"/><stop offset="0.087" stop-color="#00ffd4"/><stop offset="0.13" stop-color="#00ffd1"/><stop offset="0.174" stop-color="#00ffce"/><stop offset="0.217" stop-color="#00ffcb"/><stop offset="0.261" stop-color="#00ffc7"/><stop offset="0.304" stop-color="#00ffc3"/><stop offset="0.348" stop-color="#00ffbf"/><stop offset="0.391" stop-color="#3fffba"/><stop offset="0.435" stop-color="#5fffb5"/><stop offset="0.478" stop-color="#79ffb0"/><stop offset="0.522" stop-color="#92ffaa"/><stop offset="0.565" stop-color="#a8ffa3"/><stop offset="0.609" stop-color="#bfff9b"/><stop offset="0.652" stop-color="#d5ff93"/><stop offset="0.696" stop-color="#ebff88"/><stop offset="0.739" stop-color="#fffc7b"/><stop offset="0.783" stop-color="#ffe764"/><stop offset="0.826" stop-color="#ffd54d"/><stop offset="0.87" stop-color="#ffc534"/><stop offset="0.913" stop-color="#ffb611"/><stop offset="0.957" stop-color="#ffa900"/><stop offset="1" stop-color="#ff9c00"/></linearGradient>
<linearGradient id="g52" gradientUnits="userSpaceOnUse" x1="67.1" x2="388.9" y1="0" y2="0"><stop offset="0" stop-color="#00ffdd"/><stop offset="0.0435" stop-color="#00ffda"/><stop offset="0.087" stop-color="#00ffd8"/><stop offset="0.13" stop-color="#00ffd5"/><stop offset="0.174" stop-color="#00ffd2"/><stop offset="0.217" stop-color="#00ffcf"/><stop offset="0.261" stop-color="#00ffcb"/><stop offset="0.304" stop-color="#00ffc8"/><stop offset="0.348" stop-color="#16ffc3"/><stop offset="0.391" stop-color="#46ffbf"/><stop offset="0.435" stop-color="#66ffba"/><stop offset="0.478" stop-color="#80ffb5"/><stop offset="0.522" stop-color="#99ffaf"/><stop offset="0.565" stop-color="#b0ffa8"/><stop offset="0.609" stop-color="#c7ffa0"/><stop offset="0.652" stop-color="#deff97"/><stop offset="0.696" stop-color="#f5ff8d"/><stop offset="0.739" stop-color="#fff27b"/><stop offset="0.783" stop-color="#ffde64"/><stop offset="0.826" stop-color="#ffcc4d"/><stop offset="0.87" stop-color="#ffbd35"/><stop offset="0.913" stop-color="#ffae14"/><stop offset="0.957" stop-color="#ffa100"/><stop offset="1" stop-color="#ff9500"/></linearGradient>
<linearGradient id="g53" gradientUnits="userSpaceOnUse" x1="67.7" x2="393.3" y1="0" y2="0"><stop offset="0" stop-color="#00ffe1"/><stop offset="0.0417" stop-color="#00ffde"/><stop offset="0.0833" stop-color="#00ffdc"/><stop offset="0.125" stop-color="#00ffd9"/><stop offset="0.167" stop-color="#00ffd7"/><stop offset="0.208" stop-color="#00ffd4"/><stop offset="0.25" stop-color="#00ffd1"/><stop offset="0.292" stop-color="#00ffcd"/><stop offset="0.333" stop-color="#00ffc9"/><stop offset="0.375" stop-color="#40ffc5"/><stop offset="0.417" stop-color="#60ffc1"/><stop offset="0.458" stop-color="#7bffbc"/><stop offset="0.5" stop-color="#94ffb7"/><stop offset="0.542" stop-color="#abffb0"/><stop offset="0.583" stop-color="#c2ffaa"/><stop offset="0.625" stop-color="#d8ffa2"/><stop offset="0.667" stop-color="#efff99"/><stop offset="0.708" stop-color="#fff88b"/><stop offset="0.75" stop-color="#ffe375"/><stop offset="0.792" stop-color="#ffd15f"/><stop offset="0.833" stop-color="#ffc14a"/><stop offset="0.875" stop-color="#ffb333"/><stop offset="0.917" stop-color="#ffa513"/><stop offset="0.958" stop-color="#ff9900"/><stop offset="1" stop-color="#ff8d00"/></linearGradient>
<linearGradient id="g54" gradientUnits="userSpaceOnUse" x1="68.3" x2="397.7" y1="0" y2="0"><stop offset="0" stop-color="#00ffe5"/><stop offset="0.0417" stop-color="#00ffe3"/><stop offset="0.0833" stop-color="#00ffe0"/><stop offset="0.125" stop-color="#00ffde"/><stop offset="0.167" stop-color="#00ffdb"/><stop offset="0.208" stop-color="#00ffd8"/><stop offset="0.25" stop-color="#00ffd5"/><stop offset="0.292" stop-color="#00ffd2"/><stop offset="0.333" stop-color="#17ffce"/><stop offset="0.375" stop-color="#48ffca"/><stop offset="0.417" stop-color="#67ffc6"/><stop offset="0.458" stop-color="#82ffc1"/><stop offset="0.5" stop-color="#9bffbc"/><stop offset="0.542" stop-color="#b3ffb6"/><stop offset="0.583" stop-color="#caffaf"/><stop offset="0.625" stop-color="#e1ffa7"/><stop offset="0.667" stop-color="#f9ff9f"/><stop offset="0.708" stop-color="#ffee8b"/><stop offset="0.75" stop-color="#ffda75"/><stop offset="0.792" stop-color="#ffc960"/><stop offset="0.833" stop-color="#ffb94b"/><stop offset="0.875" stop-color="#ffaa34"/><stop offset="0.917" stop-color="#ff9d15"/><stop offset="0.958" stop-color="#ff9100"/><stop offset="1" stop-color="#ff8600"/></linearGradient>
<linearGradient id="g55" gradientUnits="userSpaceOnUse" x1="69.0" x2="402.1" y1="0" y2="0"><stop offset="0" stop-color="#00ffe9"/><stop offset="0.0417" stop-color="#00ffe7"/><stop offset="0.0833" stop-color="#00ffe4"/><stop offset="0.125" stop-color="#00ffe2"/><stop offset="0.167" stop-color="#00ffe0"/><stop offset="0.208" stop-color="#00ffdd"/><stop offset="0.25" stop-color="#00ffda"/><stop offset="0.292" stop-color="#00ffd7"/><stop offset="0.333" stop-color="#23ffd3"/><stop offset="0.375" stop-color="#4fffcf"/><stop offset="0.417" stop-color="#6effcb"/><stop offset="0.458" stop-color="#89ffc6"/><stop offset="0.5" stop-color="#a2ffc1"/><stop offset="0.542" stop-color="#bbffbb"/><stop offset="0.583" stop-color="#d3ffb4"/><stop offset="0.625" stop-color="#ebffad"/><stop offset="0.667" stop-color="#fffba1"/><stop offset="0.708" stop-color="#ffe48a"/><stop offset="0.75" stop-color="#ffd174"/><stop offset="0.792" stop-color="#ffc060"/><stop offset="0.833" stop-color="#ffb14b"/><stop offset="0.875" stop-color="#ffa335"/><stop offset="0.917" stop-color="#ff9617"/><stop offset="0.958" stop-color="#ff8a00"/><stop offset="1" stop-color="#ff7e00"/></linearGradient>
<linearGradient id="g56" gradientUnits="userSpaceOnUse" x1="69.6" x2="406.5" y1="0" y2="0"><stop offset="0" stop-color="#00ffed"/><stop offset="0.04" stop-color="#00ffeb"/><stop offset="0.08" stop-color="#00ffe9"/><stop offset="0.12" stop-color="#00ffe7"/><stop offset="0.16" stop-color="#00ffe4"/><stop offset="0.2" stop-color="#00ffe2"/><stop offset="0.24" stop-color="#00ffdf"/><stop offset="0.28" stop-color="#00ffdc"/><stop offset="0.32" stop-color="#19ffd9"/><stop offset="0.36" stop-color="#49ffd6"/><stop offset="0.4" stop-color="#69ffd2"/><stop offset="0.44" stop-color="#85ffce"/><stop offset="0.48" stop-color="#9effc9"/><stop offset="0.52" stop-color="#b6ffc4"/><stop offset="0.56" stop-color="#ceffbe"/><stop offset="0.6" stop-color="#e6ffb7"/><stop offset="0.64" stop-color="#feffb0"/><stop offset="0.68" stop-color="#ffe999"/><stop offset="0.72" stop-color="#ffd583"/><stop offset="0.76" stop-color="#ffc46f"/><stop offset="0.8" stop-color="#ffb45c"/><stop offset="0.84" stop-color="#ffa648"/><stop offset="0.88" stop-color="#ff9933"/><stop offset="0.92" stop-color="#ff8d16"/><stop offset="0.96" stop-color="#ff8200"/><stop offset="1" stop-color="#ff7700"/></linearGradient>
<linearGradient id="g57" gradientUnits="userSpaceOnUse" x1="70.2" x2="410.8" y1="0" y2="0"><stop offset="0" stop-color="#00fff1"/><stop offset="0.04" stop-color="#00ffef"/><stop offset="0.08" stop-color="#00ffed"/><stop offset="0.12" stop-color="#00ffeb"/><stop offset="0.16" stop-color="#00ffe9"/><stop offset="0.2" stop-color="#00ffe7"/><stop offset="0.24" stop-color="#00ffe4"/><stop offset="0.28" stop-color="#00ffe1"/><stop offset="0.32" stop-color="#25ffde"/><stop offset="0.36" stop-color="#51ffdb"/><stop offset="0.4" stop-color="#70ffd7"/><stop offset="0.44" stop-color="#8cffd3"/><stop offset="0.48" stop-color="#a5ffcf"/><stop offset="0.52" stop-color="#beffca"/><stop offset="0.56" stop-color="#d7ffc4"/><stop offset="0.6" stop-color="#efffbe"/><stop offset="0.64" stop-color="#fff6af"/><stop offset="0.68" stop-color="#ffdf98"/><stop offset="0.72" stop-color="#ffcc83"/><stop offset="0.76" stop-color="#ffbb6f"/><stop offset="0.8" stop-color="#ffac5c"/><stop offset="0.84" stop-color="#ff9e49"/><stop offset="0.88" stop-color="#ff9134"/><stop offset="0.92" stop-color="#ff8518"/><stop offset="0.96" stop-color="#ff7a00"/><stop offset="1" stop-color="#ff6f00"/></linearGradient>
<linearGradient id="g58" gradientUnits="userSpaceOnUse" x1="70.9" x2="415.2" y1="0" y2="0"><stop offset="0" stop-color="#00fff6"/><stop offset="0.04" stop-color="#00fff4"/><stop offset="0.08" stop-color="#00fff2"/><stop offset="0.12" stop-color="#00fff0"/><stop offset="0.16" stop-color="#00ffee"/><stop offset="0.2" stop-color="#00ffec"/><stop offset="0.24" stop-color="#00ffe9"/><stop offset="0.28" stop-color="#00ffe7"/><stop offset="0.32" stop-color="#30ffe4"/><stop offset="0.36" stop-color="#58ffe0"/><stop offset="0.4" stop-color="#77ffdd"/><stop offset="0.44" stop-color="#93ffd9"/><stop offset="0.48" stop-color="#adffd5"/><stop offset="0.52" stop-color="#c7ffd0"/><stop offset="0.56" stop-color="#e0ffca"/><stop offset="0.6" stop-color="#faffc4"/><stop offset="0.64" stop-color="#ffebae"/><stop offset="0.68" stop-color="#ffd697"/><stop offset="0.72" stop-color="#ffc383"/><stop offset="0.76" stop-color="#ffb36f"/><stop offset="0.8" stop-color="#ffa45c"/><stop offset="0.84" stop-color="#ff9649"/><stop offset="0.88" stop-color="#ff8935"/><stop offset="0.92" stop-color="#ff7e1a"/><stop offset="0.96" stop-color="#ff7200"/><stop offset="1" stop-color="#ff6700"/></linearGradient>
<linearGradient id="g59" gradientUnits="userSpaceOnUse" x1="71.6" x2="419.5" y1="0" y2="0"><stop offset="0" stop-color="#00fffa"/><stop offset="0.04" stop-color="#00fff8"/><stop offset="0.08" stop-color="#00fff7"/><stop offset="0.12" stop-color="#00fff5"/><stop offset="0.16" stop-color="#00fff3"/><stop offset="0.2" stop-color="#00fff1"/><stop offset="0.24" stop-color="#00ffee"/><stop offset="0.28" stop-color="#00ffec"/><stop offset="0.32" stop-color="#39ffe9"/><stop offset="0.36" stop-color="#60ffe6"/><stop offset="0.4" stop-color="#7fffe3"/><stop offset="0.44" stop-color="#9bffdf"/><stop offset="0.48" stop-color="#b6ffdb"/><stop offset="0.52" stop-color="#d0ffd6"/><stop offset="0.56" stop-color="#eaffd1"/><stop offset="0.6" stop-color="#fff9c6"/><stop offset="0.64" stop-color="#ffe1ad"/><stop offset="0.68" stop-color="#ffcd97"/><stop offset="0.72" stop-color="#ffba82"/><stop offset="0.76" stop-color="#ffaa6f"/><stop offset="0.8" stop-color="#ff9c5c"/><stop offset="0.84" stop-color="#ff8e4a"/><stop offset="0.88" stop-color="#ff8235"/><stop offset="0.92" stop-color="#ff761c"/><stop offset="0.96" stop-color="#ff6a00"/><stop offset="1" stop-color="#ff6000"/></linearGradient>
<linearGradient id="g60" gradientUnits="userSpaceOnUse" x1="72.3" x2="423.9" y1="0" y2="0"><stop offset="0" stop-color="#00ffff"/><stop offset="0.0385" stop-color="#00fffd"/><stop offset="0.0769" stop-color="#00fffc"/><stop offset="0.115" stop-color="#00fffa"/><stop offset="0.154" stop-color="#00fff8"/><stop offset="0.192" stop-color="#00fff6"/><stop offset="0.231" stop-color="#00fff4"/><stop offset="0.269" stop-color="#00fff2"/><stop offset="0.308" stop-color="#32fff0"/><stop offset="0.346" stop-color="#5bffed"/><stop offset="0.385" stop-color="#7bffea"/><stop offset="0.423" stop-color="#97ffe7"/><stop offset="0.462" stop-color="#b1ffe4"/><stop offset="0.5" stop-color="#ccffe0"/><stop offset="0.538" stop-color="#e6ffdb"/><stop offset="0.577" stop-color="#fffed5"/><stop offset="0.615" stop-color="#ffe5bb"/><stop offset="0.654" stop-color="#ffd0a4"/><stop offset="0.692" stop-color="#ffbe90"/><stop offset="0.731" stop-color="#ffad7d"/><stop offset="0.769" stop-color="#ff9e6b"/><stop offset="0.808" stop-color="#ff9159"/><stop offset="0.846" stop-color="#ff8447"/><stop offset="0.885" stop-color="#ff7834"/><stop offset="0.923" stop-color="#ff6d1b"/><stop offset="0.962" stop-color="#ff6200"/><stop offset="1" stop-color="#ff5700"/></linearGradient>
<linearGradient id="g61" gradientUnits="userSpaceOnUse" x1="73.1" x2="428.3" y1="0" y2="0"><stop offset="0" stop-color="#00fbff"/><stop offset="0.0385" stop-color="#00fcff"/><stop offset="0.0769" stop-color="#00fdff"/><stop offset="0.115" stop-color="#00ffff"/><stop offset="0.154" stop-color="#00fffe"/><stop offset="0.192" stop-color="#00fffc"/><stop offset="0.231" stop-color="#00fffa"/><stop offset="0.269" stop-color="#00fff8"/><stop offset="0.308" stop-color="#3cfff6"/><stop offset="0.346" stop-color="#63fff3"/><stop offset="0.385" stop-color="#82fff1"/><stop offset="0.423" stop-color="#9fffee"/><stop offset="0.462" stop-color="#baffea"/><stop offset="0.5" stop-color="#d5ffe7"/><stop offset="0.538" stop-color="#f0ffe2"/><stop offset="0.577" stop-color="#fff3d3"/><stop offset="0.615" stop-color="#ffdbba"/><stop offset="0.654" stop-color="#ffc7a3"/><stop offset="0.692" stop-color="#ffb58f"/><stop offset="0.731" stop-color="#ffa57c"/><stop offset="0.769" stop-color="#ff966b"/><stop offset="0.808" stop-color="#ff8959"/><stop offset="0.846" stop-color="#ff7c47"/><stop offset="0.885" stop-color="#ff7034"/><stop offset="0.923" stop-color="#ff651c"/><stop offset="0.962" stop-color="#ff5a00"/><stop offset="1" stop-color="#ff4f00"/></linearGradient>
<linearGradient id="g62" gradientUnits="userSpaceOnUse" x1="73.8" x2="432.7" y1="0" y2="0"><stop offset="0" stop-color="#00f6ff"/><stop offset="0.0385" stop-color="#00f7ff"/><stop offset="0.0769" stop-color="#00f8ff"/><stop offset="0.115" stop-color="#00faff"/><stop offset="0.154" stop-color="#00fbff"/><stop offset="0.192" stop-color="#00fdff"/><stop offset="0.231" stop-color="#00feff"/><stop offset="0.269" stop-color="#00fffe"/><stop offset="0.308" stop-color="#44fffc"/><stop offset="0.346" stop-color="#6afffa"/><stop offset="0.385" stop-color="#8afff7"/><stop offset="0.423" stop-color="#a7fff5"/><stop offset="0.462" stop-color="#c3fff2"/><stop offset="0.5" stop-color="#dfffee"/><stop offset="0.538" stop-color="#fbffea"/><stop offset="0.577" stop-color="#ffe8d1"/><stop offset="0.615" stop-color="#ffd1b8"/><stop offset="0.654" stop-color="#ffbda2"/><stop offset="0.692" stop-color="#ffac8e"/><stop offset="0.731" stop-color="#ff9c7c"/><stop offset="0.769" stop-color="#ff8e6a"/><stop offset="0.808" stop-color="#ff8159"/><stop offset="0.846" stop-color="#ff7448"/><stop offset="0.885" stop-color="#ff6835"/><stop offset="0.923" stop-color="#ff5d1e"/><stop offset="0.962" stop-color="#ff5100"/><stop offset="1" stop-color="#ff4600"/></linearGradient>
<linearGradient id="g63" gradientUnits="userSpaceOnUse" x1="74.6" x2="437.1" y1="0" y2="0"><stop offset="0" stop-color="#00f2ff"/><stop offset="0.0385" stop-color="#00f3ff"/><stop offset="0.0769" stop-color="#00f4ff"/><stop offset="0.115" stop-color="#00f5ff"/><stop offset="0.154" stop-color="#00f6ff"/><stop offset="0.192" stop-color="#00f7ff"/><stop offset="0.231" stop-color="#00f8ff"/><stop offset="0.269" stop-color="#0efaff"/><stop offset="0.308" stop-color="#4cfbff"/><stop offset="0.346" stop-color="#71fdff"/><stop offset="0.385" stop-color="#92ffff"/><stop offset="0.423" stop-color="#b0fffc"/><stop offset="0.462" stop-color="#cdfff9"/><stop offset="0.5" stop-color="#e9fff6"/><stop offset="0.538" stop-color="#fff7ec"/><stop offset="0.577" stop-color="#ffddcf"/><stop offset="0.615" stop-color="#ffc7b7"/><stop offset="0.654" stop-color="#ffb4a2"/><stop offset="0.692" stop-color="#ffa38e"/><stop offset="0.731" stop-color="#ff947c"/><stop offset="0.769" stop-color="#ff866a"/><stop offset="0.808" stop-color="#ff7859"/><stop offset="0.846" stop-color="#ff6c48"/><stop offset="0.885" stop-color="#ff6036"/><stop offset="0.923" stop-color="#ff541f"/><stop offset="0.962" stop-color="#ff4800"/><stop offset="1" stop-color="#ff3c00"/></linearGradient>
<linearGradient id="g64" gradientUnits="userSpaceOnUse" x1="75.4" x2="441.4" y1="0" y2="0"><stop offset="0" stop-color="#00edff"/><stop offset="0.037" stop-color="#00eeff"/><stop offset="0.0741" stop-color="#00efff"/><stop offset="0.111" stop-color="#00efff"/><stop offset="0.148" stop-color="#00f0ff"/><stop offset="0.185" stop-color="#00f1ff"/><stop offset="0.222" stop-color="#00f2ff"/><stop offset="0.259" stop-color="#00f3ff"/><stop offset="0.296" stop-color="#45f5ff"/><stop offset="0.333" stop-color="#6bf6ff"/><stop offset="0.37" stop-color="#8af8ff"/><stop offset="0.407" stop-color="#a8f9ff"/><stop offset="0.444" stop-color="#c6fbff"/><stop offset="0.481" stop-color="#e5feff"/><stop offset="0.519" stop-color="#fffbf9"/><stop offset="0.556" stop-color="#ffe0dc"/><stop offset="0.593" stop-color="#ffcac4"/><stop offset="0.63" stop-color="#ffb7ae"/><stop offset="0.667" stop-color="#ffa59a"/><stop offset="0.704" stop-color="#ff9688"/><stop offset="0.741" stop-color="#ff8777"/><stop offset="0.778" stop-color="#ff7a67"/><stop offset="0.815" stop-color="#ff6e56"/><stop offset="0.852" stop-color="#ff6246"/><stop offset="0.889" stop-color="#ff5634"/><stop offset="0.926" stop-color="#ff4a1e"/><stop offset="0.963" stop-color="#ff3e00"/><stop offset="1" stop-color="#ff3200"/></linearGradient>
<linearGradient id="g65" gradientUnits="userSpaceOnUse" x1="76.2" x2="445.8" y1="0" y2="0"><stop offset="0" stop-color="#00e9ff"/><stop offset="0.037" stop-color="#00e9ff"/><stop offset="0.0741" stop-color="#00eaff"/><stop offset="0.111" stop-color="#00eaff"/><stop offset="0.148" stop-color="#00ebff"/><stop offset="0.185" stop-color="#00ecff"/><stop offset="0.222" stop-color="#00ecff"/><stop offset="0.259" stop-color="#15edff"/><stop offset="0.296" stop-color="#4ceeff"/><stop offset="0.333" stop-color="#6fefff"/><stop offset="0.37" stop-color="#8ef0ff"/><stop offset="0.407" stop-color="#acf2ff"/><stop offset="0.444" stop-color="#c9f3ff"/><stop offset="0.481" stop-color="#e8f5ff"/><stop offset="0.519" stop-color="#ffeff7"/><stop offset="0.556" stop-color="#ffd6db"/><stop offset="0.593" stop-color="#ffc0c2"/><stop offset="0.63" stop-color="#ffadad"/><stop offset="0.667" stop-color="#ff9c99"/><stop offset="0.704" stop-color="#ff8d88"/><stop offset="0.741" stop-color="#ff7f77"/><stop offset="0.778" stop-color="#ff7267"/><stop offset="0.815" stop-color="#ff6557"/><stop offset="0.852" stop-color="#ff5946"/><stop offset="0.889" stop-color="#ff4d35"/><stop offset="0.926" stop-color="#ff411f"/><stop offset="0.963" stop-color="#ff3400"/><stop offset="1" stop-color="#ff2500"/></linearGradient>
<linearGradient id="g66" gradientUnits="userSpaceOnUse" x1="77.0" x2="450.2" y1="0" y2="0"><stop offset="0" stop-color="#00e4ff"/><stop offset="0.037" stop-color="#00e5ff"/><stop offset="0.0741" stop-color="#00e5ff"/><stop offset="0.111" stop-color="#00e5ff"/><stop offset="0.148" stop-color="#00e6ff"/><stop offset="0.185" stop-color="#00e6ff"/><stop offset="0.222" stop-color="#00e7ff"/><stop offset="0.259" stop-color="#22e7ff"/><stop offset="0.296" stop-color="#51e8ff"/><stop offset="0.333" stop-color="#74e9ff"/><stop offset="0.37" stop-color="#92e9ff"/><stop offset="0.407" stop-color="#afeaff"/><stop offset="0.444" stop-color="#cdebff"/><stop offset="0.481" stop-color="#ebecff"/><stop offset="0.519" stop-color="#ffe4f4"/><stop offset="0.556" stop-color="#ffcbd9"/><stop offset="0.593" stop-color="#ffb6c1"/><stop offset="0.63" stop-color="#ffa4ac"/><stop offset="0.667" stop-color="#ff9399"/><stop offset="0.704" stop-color="#ff8487"/><stop offset="0.741" stop-color="#ff7676"/><stop offset="0.778" stop-color="#ff6966"/><stop offset="0.815" stop-color="#ff5c57"/><stop offset="0.852" stop-color="#ff5047"/><stop offset="0.889" stop-color="#ff4335"/><stop offset="0.926" stop-color="#ff3620"/><stop offset="0.963" stop-color="#ff2700"/><stop offset="1" stop-color="#ff1500"/></linearGradient>
<linearGradient id="g67" gradientUnits="userSpaceOnUse" x1="77.9" x2="454.7" y1="0" y2="0"><stop offset="0" stop-color="#00e0ff"/><stop offset="0.037" stop-color="#00e0ff"/><stop offset="0.0741" stop-color="#00e0ff"/><stop offset="0.111" stop-color="#00e0ff"/><stop offset="0.148" stop-color="#00e1ff"/><stop offset="0.185" stop-color="#00e1ff"/><stop offset="0.222" stop-color="#00e1ff"/><stop offset="0.259" stop-color="#2ce1ff"/><stop offset="0.296" stop-color="#57e2ff"/><stop offset="0.333" stop-color="#78e2ff"/><stop offset="0.37" stop-color="#96e2ff"/><stop offset="0.407" stop-color="#b3e3ff"/><stop offset="0.444" stop-color="#d0e3ff"/><stop offset="0.481" stop-color="#ede4ff"/><stop offset="0.519" stop-color="#ffd9f2"/><stop offset="0.556" stop-color="#ffc1d7"/><stop offset="0.593" stop-color="#ffadc0"/><stop offset="0.63" stop-color="#ff9bab"/><stop offset="0.667" stop-color="#ff8a98"/><stop offset="0.704" stop-color="#ff7c87"/><stop offset="0.741" stop-color="#ff6d76"/><stop offset="0.778" stop-color="#ff6066"/><stop offset="0.815" stop-color="#ff5357"/><stop offset="0.852" stop-color="#ff4647"/><stop offset="0.889" stop-color="#ff3936"/><stop offset="0.926" stop-color="#ff2a21"/><stop offset="0.963" stop-color="#ff1700"/><stop offset="1" stop-color="#ff0000"/></linearGradient>
<linearGradient id="g68" gradientUnits="userSpaceOnUse" x1="78.7" x2="459.0" y1="0" y2="0"><stop offset="0" stop-color="#00dcff"/><stop offset="0.0357" stop-color="#00dcff"/><stop offset="0.0714" stop-color="#00dcff"/><stop offset="0.107" stop-color="#00dcff"/><stop offset="0.143" stop-color="#00dcff"/><stop offset="0.179" stop-color="#00dbff"/><stop offset="0.214" stop-color="#00dbff"/><stop offset="0.25" stop-color="#26dbff"/><stop offset="0.286" stop-color="#52dbff"/><stop offset="0.321" stop-color="#72dbff"/><stop offset="0.357" stop-color="#8fdbff"/><stop offset="0.393" stop-color="#abdbff"/><stop offset="0.429" stop-color="#c6dbff"/><stop offset="0.464" stop-color="#e2dbff"/><stop offset="0.5" stop-color="#ffdbff"/><stop offset="0.536" stop-color="#ffc3e3"/><stop offset="0.571" stop-color="#ffaecb"/><stop offset="0.607" stop-color="#ff9cb6"/><stop offset="0.643" stop-color="#ff8ca3"/><stop offset="0.679" stop-color="#ff7d92"/><stop offset="0.714" stop-color="#ff6f82"/><stop offset="0.75" stop-color="#ff6172"/><stop offset="0.786" stop-color="#ff5463"/><stop offset="0.821" stop-color="#ff4754"/><stop offset="0.857" stop-color="#ff3a45"/><stop offset="0.893" stop-color="#ff2b34"/><stop offset="0.929" stop-color="#ff1921"/><stop offset="0.964" stop-color="#ff0000"/><stop offset="1" stop-color="#ff0000"/></linearGradient>
<linearGradient id="g69" gradientUnits="userSpaceOnUse" x1="79.6" x2="463.4" y1="0" y2="0"><stop offset="0" stop-color="#00d7ff"/><stop offset="0.0357" stop-color="#00d7ff"/><stop offset="0.0714" stop-color="#00d7ff"/><stop offset="0.107" stop-color="#00d7ff"/><stop offset="0.143" stop-color="#00d6ff"/><stop offset="0.179" stop-color="#00d6ff"/><stop offset="0.214" stop-color="#00d6ff"/><stop offset="0.25" stop-color="#2fd6ff"/><stop offset="0.286" stop-color="#57d5ff"/><stop offset="0.321" stop-color="#76d5ff"/><stop offset="0.357" stop-color="#92d4ff"/><stop offset="0.393" stop-color="#aed4ff"/><stop offset="0.429" stop-color="#c9d3ff"/><stop offset="0.464" stop-color="#e5d2ff"/><stop offset="0.5" stop-color="#ffcffc"/><stop offset="0.536" stop-color="#ffb8e1"/><stop offset="0.571" stop-color="#ffa4ca"/><stop offset="0.607" stop-color="#ff93b5"/><stop offset="0.643" stop-color="#ff82a2"/><stop offset="0.679" stop-color="#ff7391"/><stop offset="0.714" stop-color="#ff6581"/><stop offset="0.75" stop-color="#ff5872"/><stop offset="0.786" stop-color="#ff4a63"/><stop offset="0.821" stop-color="#ff3c54"/><stop offset="0.857" stop-color="#ff2e45"/><stop offset="0.893" stop-color="#ff1c35"/><stop offset="0.929" stop-color="#ff0022"/><stop offset="0.964" stop-color="#ff0000"/><stop offset="1" stop-color="#ff0000"/></linearGradient>
<linearGradient id="g70" gradientUnits="userSpaceOnUse" x1="80.5" x2="467.7" y1="0" y2="0"><stop offset="0" stop-color="#00d3ff"/><stop offset="0.0357" stop-color="#00d3ff"/><stop offset="0.0714" stop-color="#00d2ff"/><stop offset="0.107" stop-color="#00d2ff"/><stop offset="0.143" stop-color="#00d1ff"/><stop offset="0.179" stop-color="#00d1ff"/><stop offset="0.214" stop-color="#00d0ff"/><stop offset="0.25" stop-color="#36d0ff"/><stop offset="0.286" stop-color="#5bcfff"/><stop offset="0.321" stop-color="#7aceff"/><stop offset="0.357" stop-color="#96cdff"/><stop offset="0.393" stop-color="#b1ccff"/><stop offset="0.429" stop-color="#cccbff"/><stop offset="0.464" stop-color="#e7caff"/><stop offset="0.5" stop-color="#ffc4fa"/><stop offset="0.536" stop-color="#ffaedf"/><stop offset="0.571" stop-color="#ff9bc9"/><stop offset="0.607" stop-color="#ff89b4"/><stop offset="0.643" stop-color="#ff79a2"/><stop offset="0.679" stop-color="#ff6a91"/><stop offset="0.714" stop-color="#ff5c81"/><stop offset="0.75" stop-color="#ff4e72"/><stop offset="0.786" stop-color="#ff4063"/><stop offset="0.821" stop-color="#ff3155"/><stop offset="0.857" stop-color="#ff1f46"/><stop offset="0.893" stop-color="#ff0036"/><stop offset="0.929" stop-color="#ff0023"/><stop offset="0.964" stop-color="#ff0000"/><stop offset="1" stop-color="#ff0000"/></linearGradient>
<linearGradient id="g71" gradientUnits="userSpaceOnUse" x1="81.3" x2="472.1" y1="0" y2="0"><stop offset="0" stop-color="#00cfff"/><stop offset="0.0357" stop-color="#00ceff"/><stop offset="0.0714" stop-color="#00ceff"/><stop offset="0.107" stop-color="#00cdff"/><stop offset="0.143" stop-color="#00ccff"/><stop offset="0.179" stop-color="#00ccff"/><stop offset="0.214" stop-color="#00cbff"/><stop offset="0.25" stop-color="#3ccaff"/><stop offset="0.286" stop-color="#60c9ff"/><stop offset="0.321" stop-color="#7dc8ff"/><stop offset="0.357" stop-color="#99c6ff"/><stop offset="0.393" stop-color="#b4c5ff"/><stop offset="0.429" stop-color="#cec3ff"/><stop offset="0.464" stop-color="#eac1ff"/><stop offset="0.5" stop-color="#ffbaf8"/><stop offset="0.536" stop-color="#ffa4de"/><stop offset="0.571" stop-color="#ff91c7"/><stop offset="0.607" stop-color="#ff80b3"/><stop offset="0.643" stop-color="#ff70a1"/><stop offset="0.679" stop-color="#ff6190"/><stop offset="0.714" stop-color="#ff5281"/><stop offset="0.75" stop-color="#ff4372"/><stop offset="0.786" stop-color="#ff3463"/><stop offset="0.821" stop-color="#ff2255"/><stop offset="0.857" stop-color="#ff0046"/><stop offset="0.893" stop-color="#ff0036"/><stop offset="0.929" stop-color="#ff0023"/><stop offset="0.964" stop-color="#ff0000"/><stop offset="1" stop-color="#ff0000"/></linearGradient>
<linearGradient id="g72" gradientUnits="userSpaceOnUse" x1="82.3" x2="476.5" y1="0" y2="0"><stop offset="0" stop-color="#00caff"/><stop offset="0.0345" stop-color="#00caff"/><stop offset="0.069" stop-color="#00c9ff"/><stop offset="0.103" stop-color="#00c8ff"/><stop offset="0.138" stop-color="#00c7ff"/><stop offset="0.172" stop-color="#00c6ff"/><stop offset="0.207" stop-color="#00c5ff"/><stop offset="0.241" stop-color="#38c4ff"/><stop offset="0.276" stop-color="#5bc3ff"/><stop offset="0.31" stop-color="#78c2ff"/><stop offset="0.345" stop-color="#93c0ff"/><stop offset="0.379" stop-color="#acbeff"/><stop offset="0.414" stop-color="#c6bcff"/><stop offset="0.448" stop-color="#e0baff"/><stop offset="0.483" stop-color="#fbb7ff"/><stop offset="0.517" stop-color="#ffa4e9"/><stop offset="0.552" stop-color="#ff91d2"/><stop offset="0.586" stop-color="#ff80be"/><stop offset="0.621" stop-color="#ff70ab"/><stop offset="0.655" stop-color="#ff619b"/><stop offset="0.69" stop-color="#ff528b"/><stop offset="0.724" stop-color="#ff437c"/><stop offset="0.759" stop-color="#ff346e"/><stop offset="0.793" stop-color="#ff2260"/><stop offset="0.828" stop-color="#ff0052"/><stop offset="0.862" stop-color="#ff0044"/><stop offset="0.897" stop-color="#ff0035"/><stop offset="0.931" stop-color="#ff0023"/><stop offset="0.966" stop-color="#ff0000"/><stop offset="1" stop-color="#ff0000"/></linearGradient>
<linearGradient id="g73" gradientUnits="userSpaceOnUse" x1="83.2" x2="480.9" y1="0" y2="0"><stop offset="0" stop-color="#00c6ff"/><stop offset="0.0345" stop-color="#00c5ff"/><stop offset="0.069" stop-color="#00c4ff"/><stop offset="0.103" stop-color="#00c3ff"/><stop offset="0.138" stop-color="#00c2ff"/><stop offset="0.172" stop-color="#00c1ff"/><stop offset="0.207" stop-color="#00c0ff"/><stop offset="0.241" stop-color="#3ebeff"/><stop offset="0.276" stop-color="#60bdff"/><stop offset="0.31" stop-color="#7cbbff"/><stop offset="0.345" stop-color="#96b9ff"/><stop offset="0.379" stop-color="#afb7ff"/><stop offset="0.414" stop-color="#c9b4ff"/><stop offset="0.448" stop-color="#e2b1ff"/><stop offset="0.483" stop-color="#fdaeff"/><stop offset="0.517" stop-color="#ff9ae7"/><stop offset="0.552" stop-color="#ff87d0"/><stop offset="0.586" stop-color="#ff76bd"/><stop offset="0.621" stop-color="#ff66ab"/><stop offset="0.655" stop-color="#ff569a"/><stop offset="0.69" stop-color="#ff478b"/><stop offset="0.724" stop-color="#ff377c"/><stop offset="0.759" stop-color="#ff256e"/><stop offset="0.793" stop-color="#ff0a60"/><stop offset="0.828" stop-color="#ff0052"/><stop offset="0.862" stop-color="#ff0044"/><stop offset="0.897" stop-color="#ff0035"/><stop offset="0.931" stop-color="#ff0024"/><stop offset="0.966" stop-color="#ff0004"/><stop offset="1" stop-color="#ff0000"/></linearGradient>
<linearGradient id="g74" gradientUnits="userSpaceOnUse" x1="84.1" x2="485.2" y1="0" y2="0"><stop offset="0" stop-color="#00c2ff"/><stop offset="0.0345" stop-color="#00c1ff"/><stop offset="0.069" stop-color="#00c0ff"/><stop offset="0.103" stop-color="#00bfff"/><stop offset="0.138" stop-color="#00bdff"/><stop offset="0.172" stop-color="#00bcff"/><stop offset="0.207" stop-color="#11baff"/><stop offset="0.241" stop-color="#44b9ff"/><stop offset="0.276" stop-color="#64b7ff"/><stop offset="0.31" stop-color="#7fb4ff"/><stop offset="0.345" stop-color="#99b2ff"/><stop offset="0.379" stop-color="#b2afff"/><stop offset="0.414" stop-color="#cbacff"/><stop offset="0.448" stop-color="#e5a9ff"/><stop offset="0.483" stop-color="#ffa4fe"/><stop offset="0.517" stop-color="#ff8fe5"/><stop offset="0.552" stop-color="#ff7dcf"/><stop offset="0.586" stop-color="#ff6cbc"/><stop offset="0.621" stop-color="#ff5baa"/><stop offset="0.655" stop-color="#ff4c99"/><stop offset="0.69" stop-color="#ff3b8a"/><stop offset="0.724" stop-color="#ff297c"/><stop offset="0.759" stop-color="#ff116e"/><stop offset="0.793" stop-color="#ff0060"/><stop offset="0.828" stop-color="#ff0053"/><stop offset="0.862" stop-color="#ff0045"/><stop offset="0.897" stop-color="#ff0036"/><stop offset="0.931" stop-color="#ff0024"/><stop offset="0.966" stop-color="#ff0008"/><stop offset="1" stop-color="#ff0000"/></linearGradient>
<linearGradient id="g75" gradientUnits="userSpaceOnUse" x1="85.1" x2="489.6" y1="0" y2="0"><stop offset="0" stop-color="#00beff"/><stop offset="0.0345" stop-color="#00bdff"/><stop offset="0.069" stop-color="#00bbff"/><stop offset="0.103" stop-color="#00baff"/><stop offset="0.138" stop-color="#00b8ff"/><stop offset="0.172" stop-color="#00b7ff"/><stop offset="0.207" stop-color="#1db5ff"/><stop offset="0.241" stop-color="#49b3ff"/><stop offset="0.276" stop-color="#68b0ff"/><stop offset="0.31" stop-color="#83aeff"/><stop offset="0.345" stop-color="#9cabff"/><stop offset="0.379" stop-color="#b5a8ff"/><stop offset="0.414" stop-color="#cea4ff"/><stop offset="0.448" stop-color="#e7a0ff"/><stop offset="0.483" stop-color="#ff99fc"/><stop offset="0.517" stop-color="#ff85e3"/><stop offset="0.552" stop-color="#ff72ce"/><stop offset="0.586" stop-color="#ff61ba"/><stop offset="0.621" stop-color="#ff50a9"/><stop offset="0.655" stop-color="#ff4099"/><stop offset="0.69" stop-color="#ff2e8a"/><stop offset="0.724" stop-color="#ff167b"/><stop offset="0.759" stop-color="#ff006e"/><stop offset="0.793" stop-color="#ff0060"/><stop offset="0.828" stop-color="#ff0053"/><stop offset="0.862" stop-color="#ff0045"/><stop offset="0.897" stop-color="#ff0036"/><stop offset="0.931" stop-color="#ff0025"/><stop offset="0.966" stop-color="#ff000a"/><stop offset="1" stop-color="#ff0000"/></linearGradient>
<linearGradient id="g76" gradientUnits="userSpaceOnUse" x1="86.0" x2="494.0" y1="0" y2="0"><stop offset="0" stop-color="#00baff"/><stop offset="0.0333" stop-color="#00b8ff"/><stop offset="0.0667" stop-color="#00b7ff"/><stop offset="0.1" stop-color="#00b5ff"/><stop offset="0.133" stop-color="#00b4ff"/><stop offset="0.167" stop-color="#00b2ff"/><stop offset="0.2" stop-color="#1ab0ff"/><stop offset="0.233" stop-color="#46adff"/><stop offset="0.267" stop-color="#64abff"/><stop offset="0.3" stop-color="#7ea8ff"/><stop offset="0.333" stop-color="#97a5ff"/><stop offset="0.367" stop-color="#aea2ff"/><stop offset="0.4" stop-color="#c69eff"/><stop offset="0.433" stop-color="#de99ff"/><stop offset="0.467" stop-color="#f794ff"/><stop offset="0.5" stop-color="#ff84ee"/><stop offset="0.533" stop-color="#ff71d8"/><stop offset="0.567" stop-color="#ff60c4"/><stop offset="0.6" stop-color="#ff4fb2"/><stop offset="0.633" stop-color="#ff3ea2"/><stop offset="0.667" stop-color="#ff2c93"/><stop offset="0.7" stop-color="#ff1385"/><stop offset="0.733" stop-color="#ff0077"/><stop offset="0.767" stop-color="#ff006a"/><stop offset="0.8" stop-color="#ff005e"/><stop offset="0.833" stop-color="#ff0051"/><stop offset="0.867" stop-color="#ff0043"/><stop offset="0.9" stop-color="#ff0035"/><stop offset="0.933" stop-color="#ff0024"/><stop offset="0.967" stop-color="#ff000b"/><stop offset="1" stop-color="#ff0000"/></linearGradient>
<linearGradient id="g77" gradientUnits="userSpaceOnUse" x1="87.1" x2="494.0" y1="0" y2="0"><stop offset="0" stop-color="#00b5ff"/><stop offset="0.0333" stop-color="#00b4ff"/><stop offset="0.0667" stop-color="#00b2ff"/><stop offset="0.1" stop-color="#00b0ff"/><stop offset="0.133" stop-color="#00afff"/><stop offset="0.167" stop-color="#00adff"/><stop offset="0.2" stop-color="#20aaff"/><stop offset="0.233" stop-color="#48a8ff"/><stop offset="0.267" stop-color="#65a5ff"/><stop offset="0.3" stop-color="#7fa2ff"/><stop offset="0.333" stop-color="#979eff"/><stop offset="0.367" stop-color="#ae9aff"/><stop offset="0.4" stop-color="#c696ff"/><stop offset="0.433" stop-color="#dd91ff"/><stop offset="0.467" stop-color="#f68bff"/><stop offset="0.5" stop-color="#ff7cf0"/><stop offset="0.533" stop-color="#ff69da"/><stop offset="0.567" stop-color="#ff58c6"/><stop offset="0.6" stop-color="#ff46b5"/><stop offset="0.633" stop-color="#ff34a5"/><stop offset="0.667" stop-color="#ff1f96"/><stop offset="0.7" stop-color="#ff0088"/><stop offset="0.733" stop-color="#ff007a"/><stop offset="0.767" stop-color="#ff006d"/><stop offset="0.8" stop-color="#ff0061"/><stop offset="0.833" stop-color="#ff0054"/><stop offset="0.867" stop-color="#ff0047"/><stop offset="0.9" stop-color="#ff003a"/><stop offset="0.933" stop-color="#ff002a"/><stop offset="0.967" stop-color="#ff0016"/><stop offset="1" stop-color="#ff0000"/></linearGradient>
<linearGradient id="g78" gradientUnits="userSpaceOnUse" x1="88.1" x2="487.8" y1="0" y2="0"><stop offset="0" stop-color="#00b1ff"/><stop offset="0.0345" stop-color="#00afff"/><stop offset="0.069" stop-color="#00aeff"/><stop offset="0.103" stop-color="#00acff"/><stop offset="0.138" stop-color="#00a9ff"/><stop offset="0.172" stop-color="#00a7ff"/><stop offset="0.207" stop-color="#2aa5ff"/><stop offset="0.241" stop-color="#4fa2ff"/><stop offset="0.276" stop-color="#6b9eff"/><stop offset="0.31" stop-color="#849bff"/><stop offset="0.345" stop-color="#9c97ff"/><stop offset="0.379" stop-color="#b392ff"/><stop offset="0.414" stop-color="#ca8dff"/><stop offset="0.448" stop-color="#e287ff"/><stop offset="0.483" stop-color="#fb80ff"/><stop offset="0.517" stop-color="#ff6eeb"/><stop offset="0.552" stop-color="#ff5bd6"/><stop offset="0.586" stop-color="#ff49c3"/><stop offset="0.621" stop-color="#ff36b2"/><stop offset="0.655" stop-color="#ff20a2"/><stop offset="0.69" stop-color="#ff0093"/><stop offset="0.724" stop-color="#ff0085"/><stop offset="0.759" stop-color="#ff0078"/><stop offset="0.793" stop-color="#ff006b"/><stop offset="0.828" stop-color="#ff005e"/><stop offset="0.862" stop-color="#ff0052"/><stop offset="0.897" stop-color="#ff0045"/><stop offset="0.931" stop-color="#ff0037"/><stop offset="0.966" stop-color="#ff0027"/><stop offset="1" stop-color="#ff0011"/></linearGradient>
<linearGradient id="g79" gradientUnits="userSpaceOnUse" x1="89.1" x2="478.4" y1="0" y2="0"><stop offset="0" stop-color="#00adff"/><stop offset="0.0357" stop-color="#00abff"/><stop offset="0.0714" stop-color="#00a9ff"/><stop offset="0.107" stop-color="#00a7ff"/><stop offset="0.143" stop-color="#00a4ff"/><stop offset="0.179" stop-color="#00a2ff"/><stop offset="0.214" stop-color="#319fff"/><stop offset="0.25" stop-color="#539cff"/><stop offset="0.286" stop-color="#6e98ff"/><stop offset="0.321" stop-color="#8794ff"/><stop offset="0.357" stop-color="#9e90ff"/><stop offset="0.393" stop-color="#b68aff"/><stop offset="0.429" stop-color="#cd84ff"/><stop offset="0.464" stop-color="#e47eff"/><stop offset="0.5" stop-color="#fd75ff"/><stop offset="0.536" stop-color="#ff62e9"/><stop offset="0.571" stop-color="#ff4fd4"/><stop offset="0.607" stop-color="#ff3bc2"/><stop offset="0.643" stop-color="#ff25b1"/><stop offset="0.679" stop-color="#ff00a1"/><stop offset="0.714" stop-color="#ff0092"/><stop offset="0.75" stop-color="#ff0085"/><stop offset="0.786" stop-color="#ff0078"/><stop offset="0.821" stop-color="#ff006b"/><stop offset="0.857" stop-color="#ff005e"/><stop offset="0.893" stop-color="#ff0052"/><stop offset="0.929" stop-color="#ff0045"/><stop offset="0.964" stop-color="#ff0037"/><stop offset="1" stop-color="#ff0027"/></linearGradient>
<linearGradient id="g80" gradientUnits="userSpaceOnUse" x1="90.2" x2="469.0" y1="0" y2="0"><stop offset="0" stop-color="#00a9ff"/><stop offset="0.0357" stop-color="#00a7ff"/><stop offset="0.0714" stop-color="#00a5ff"/><stop offset="0.107" stop-color="#00a2ff"/><stop offset="0.143" stop-color="#00a0ff"/><stop offset="0.179" stop-color="#009dff"/><stop offset="0.214" stop-color="#2e9aff"/><stop offset="0.25" stop-color="#5097ff"/><stop offset="0.286" stop-color="#6b93ff"/><stop offset="0.321" stop-color="#838fff"/><stop offset="0.357" stop-color="#998aff"/><stop offset="0.393" stop-color="#af85ff"/><stop offset="0.429" stop-color="#c57eff"/><stop offset="0.464" stop-color="#dc77ff"/><stop offset="0.5" stop-color="#f36fff"/><stop offset="0.536" stop-color="#ff60f3"/><stop offset="0.571" stop-color="#ff4dde"/><stop offset="0.607" stop-color="#ff39cb"/><stop offset="0.643" stop-color="#ff21ba"/><stop offset="0.679" stop-color="#ff00aa"/><stop offset="0.714" stop-color="#ff009c"/><stop offset="0.75" stop-color="#ff008e"/><stop offset="0.786" stop-color="#ff0081"/><stop offset="0.821" stop-color="#ff0075"/><stop offset="0.857" stop-color="#ff0069"/><stop offset="0.893" stop-color="#ff005d"/><stop offset="0.929" stop-color="#ff0050"/><stop offset="0.964" stop-color="#ff0044"/><stop offset="1" stop-color="#ff0037"/></linearGradient>
<linearGradient id="g81" gradientUnits="userSpaceOnUse" x1="91.3" x2="459.6" y1="0" y2="0"><stop offset="0" stop-color="#00a4ff"/><stop offset="0.037" stop-color="#00a2ff"/><stop offset="0.0741" stop-color="#00a0ff"/><stop offset="0.111" stop-color="#009dff"/><stop offset="0.148" stop-color="#009bff"/><stop offset="0.185" stop-color="#0098ff"/><stop offset="0.222" stop-color="#3594ff"/><stop offset="0.259" stop-color="#5490ff"/><stop offset="0.296" stop-color="#6e8cff"/><stop offset="0.333" stop-color="#8688ff"/><stop offset="0.37" stop-color="#9c82ff"/><stop offset="0.407" stop-color="#b27cff"/><stop offset="0.444" stop-color="#c876ff"/><stop offset="0.481" stop-color="#de6dff"/><stop offset="0.519" stop-color="#f564ff"/><stop offset="0.556" stop-color="#ff53f1"/><stop offset="0.593" stop-color="#ff3edc"/><stop offset="0.63" stop-color="#ff27ca"/><stop offset="0.667" stop-color="#ff00b9"/><stop offset="0.704" stop-color="#ff00a9"/><stop offset="0.741" stop-color="#ff009b"/><stop offset="0.778" stop-color="#ff008e"/><stop offset="0.815" stop-color="#ff0081"/><stop offset="0.852" stop-color="#ff0074"/><stop offset="0.889" stop-color="#ff0068"/><stop offset="0.926" stop-color="#ff005c"/><stop offset="0.963" stop-color="#ff0050"/><stop offset="1" stop-color="#ff0044"/></linearGradient>
<linearGradient id="g82" gradientUnits="userSpaceOnUse" x1="92.4" x2="450.2" y1="0" y2="0"><stop offset="0" stop-color="#00a0ff"/><stop offset="0.0385" stop-color="#009eff"/><stop offset="0.0769" stop-color="#009bff"/><stop offset="0.115" stop-color="#0098ff"/><stop offset="0.154" stop-color="#0095ff"/><stop offset="0.192" stop-color="#0092ff"/><stop offset="0.231" stop-color="#3a8eff"/><stop offset="0.269" stop-color="#588aff"/><stop offset="0.308" stop-color="#7286ff"/><stop offset="0.346" stop-color="#8981ff"/><stop offset="0.385" stop-color="#9f7bff"/><stop offset="0.423" stop-color="#b574ff"/><stop offset="0.462" stop-color="#cb6cff"/><stop offset="0.5" stop-color="#e163ff"/><stop offset="0.538" stop-color="#f857ff"/><stop offset="0.577" stop-color="#ff44ef"/><stop offset="0.615" stop-color="#ff2ddb"/><stop offset="0.654" stop-color="#ff08c8"/><stop offset="0.692" stop-color="#ff00b8"/><stop offset="0.731" stop-color="#ff00a8"/><stop offset="0.769" stop-color="#ff009a"/><stop offset="0.808" stop-color="#ff008d"/><stop offset="0.846" stop-color="#ff0080"/><stop offset="0.885" stop-color="#ff0074"/><stop offset="0.923" stop-color="#ff0068"/><stop offset="0.962" stop-color="#ff005c"/><stop offset="1" stop-color="#ff0050"/></linearGradient>
<linearGradient id="g83" gradientUnits="userSpaceOnUse" x1="93.6" x2="440.8" y1="0" y2="0"><stop offset="0" stop-color="#009cff"/><stop offset="0.04" stop-color="#0099ff"/><stop offset="0.08" stop-color="#0097ff"/><stop offset="0.12" stop-color="#0094ff"/><stop offset="0.16" stop-color="#0090ff"/><stop offset="0.2" stop-color="#138dff"/><stop offset="0.24" stop-color="#4088ff"/><stop offset="0.28" stop-color="#5c84ff"/><stop offset="0.32" stop-color="#757fff"/><stop offset="0.36" stop-color="#8c79ff"/><stop offset="0.4" stop-color="#a273ff"/><stop offset="0.44" stop-color="#b76bff"/><stop offset="0.48" stop-color="#cd62ff"/><stop offset="0.52" stop-color="#e357ff"/><stop offset="0.56" stop-color="#fa49ff"/><stop offset="0.6" stop-color="#ff33ed"/><stop offset="0.64" stop-color="#ff13d9"/><stop offset="0.68" stop-color="#ff00c7"/><stop offset="0.72" stop-color="#ff00b6"/><stop offset="0.76" stop-color="#ff00a7"/><stop offset="0.8" stop-color="#ff0099"/><stop offset="0.84" stop-color="#ff008c"/><stop offset="0.88" stop-color="#ff007f"/><stop offset="0.92" stop-color="#ff0073"/><stop offset="0.96" stop-color="#ff0067"/><stop offset="1" stop-color="#ff005c"/></linearGradient>
<linearGradient id="g84" gradientUnits="userSpaceOnUse" x1="94.7" x2="431.5" y1="0" y2="0"><stop offset="0" stop-color="#0098ff"/><stop offset="0.04" stop-color="#0095ff"/><stop offset="0.08" stop-color="#0092ff"/><stop offset="0.12" stop-color="#008fff"/><stop offset="0.16" stop-color="#008bff"/><stop offset="0.2" stop-color="#1088ff"/><stop offset="0.24" stop-color="#3d84ff"/><stop offset="0.28" stop-color="#597fff"/><stop offset="0.32" stop-color="#717aff"/><stop offset="0.36" stop-color="#8774ff"/><stop offset="0.4" stop-color="#9c6dff"/><stop offset="0.44" stop-color="#b166ff"/><stop offset="0.48" stop-color="#c65cff"/><stop offset="0.52" stop-color="#db51ff"/><stop offset="0.56" stop-color="#f043ff"/><stop offset="0.6" stop-color="#ff2ff7"/><stop offset="0.64" stop-color="#ff08e3"/><stop offset="0.68" stop-color="#ff00d1"/><stop offset="0.72" stop-color="#ff00c0"/><stop offset="0.76" stop-color="#ff00b1"/><stop offset="0.8" stop-color="#ff00a3"/><stop offset="0.84" stop-color="#ff0096"/><stop offset="0.88" stop-color="#ff0089"/><stop offset="0.92" stop-color="#ff007d"/><stop offset="0.96" stop-color="#ff0072"/><stop offset="1" stop-color="#ff0066"/></linearGradient>
<linearGradient id="g85" gradientUnits="userSpaceOnUse" x1="95.9" x2="422.1" y1="0" y2="0"><stop offset="0" stop-color="#0093ff"/><stop offset="0.0417" stop-color="#0090ff"/><stop offset="0.0833" stop-color="#008dff"/><stop offset="0.125" stop-color="#008aff"/><stop offset="0.167" stop-color="#0086ff"/><stop offset="0.208" stop-color="#1b82ff"/><stop offset="0.25" stop-color="#427eff"/><stop offset="0.292" stop-color="#5d78ff"/><stop offset="0.333" stop-color="#7573ff"/><stop offset="0.375" stop-color="#8a6cff"/><stop offset="0.417" stop-color="#9f65ff"/><stop offset="0.458" stop-color="#b45cff"/><stop offset="0.5" stop-color="#c852ff"/><stop offset="0.542" stop-color="#dd44ff"/><stop offset="0.583" stop-color="#f333ff"/><stop offset="0.625" stop-color="#ff14f5"/><stop offset="0.667" stop-color="#ff00e1"/><stop offset="0.708" stop-color="#ff00cf"/><stop offset="0.75" stop-color="#ff00bf"/><stop offset="0.792" stop-color="#ff00b0"/><stop offset="0.833" stop-color="#ff00a2"/><stop offset="0.875" stop-color="#ff0095"/><stop offset="0.917" stop-color="#ff0089"/><stop offset="0.958" stop-color="#ff007d"/><stop offset="1" stop-color="#ff0071"/></linearGradient>
<linearGradient id="g86" gradientUnits="userSpaceOnUse" x1="97.1" x2="412.7" y1="0" y2="0"><stop offset="0" stop-color="#008fff"/><stop offset="0.0435" stop-color="#008cff"/><stop offset="0.087" stop-color="#0088ff"/><stop offset="0.13" stop-color="#0085ff"/><stop offset="0.174" stop-color="#0081ff"/><stop offset="0.217" stop-color="#247cff"/><stop offset="0.261" stop-color="#4777ff"/><stop offset="0.304" stop-color="#6172ff"/><stop offset="0.348" stop-color="#786bff"/><stop offset="0.391" stop-color="#8d64ff"/><stop offset="0.435" stop-color="#a25cff"/><stop offset="0.478" stop-color="#b652ff"/><stop offset="0.522" stop-color="#cb45ff"/><stop offset="0.565" stop-color="#e035ff"/><stop offset="0.609" stop-color="#f51cff"/><stop offset="0.652" stop-color="#ff00f3"/><stop offset="0.696" stop-color="#ff00df"/><stop offset="0.739" stop-color="#ff00cd"/><stop offset="0.783" stop-color="#ff00bd"/><stop offset="0.826" stop-color="#ff00af"/><stop offset="0.87" stop-color="#ff00a1"/><stop offset="0.913" stop-color="#ff0094"/><stop offset="0.957" stop-color="#ff0088"/><stop offset="1" stop-color="#ff007c"/></linearGradient>
<linearGradient id="g87" gradientUnits="userSpaceOnUse" x1="98.4" x2="403.3" y1="0" y2="0"><stop offset="0" stop-color="#008bff"/><stop offset="0.0455" stop-color="#0087ff"/><stop offset="0.0909" stop-color="#0084ff"/><stop offset="0.136" stop-color="#0080ff"/><stop offset="0.182" stop-color="#007bff"/><stop offset="0.227" stop-color="#2b76ff"/><stop offset="0.273" stop-color="#4c71ff"/><stop offset="0.318" stop-color="#656bff"/><stop offset="0.364" stop-color="#7b64ff"/><stop offset="0.409" stop-color="#915cff"/><stop offset="0.455" stop-color="#a552ff"/><stop offset="0.5" stop-color="#b946ff"/><stop offset="0.545" stop-color="#ce37ff"/><stop offset="0.591" stop-color="#e321ff"/><stop offset="0.636" stop-color="#f800ff"/><stop offset="0.682" stop-color="#ff00f0"/><stop offset="0.727" stop-color="#ff00dd"/><stop offset="0.773" stop-color="#ff00cb"/><stop offset="0.818" stop-color="#ff00bc"/><stop offset="0.864" stop-color="#ff00ad"/><stop offset="0.909" stop-color="#ff009f"/><stop offset="0.955" stop-color="#ff0093"/><stop offset="1" stop-color="#ff0086"/></linearGradient>
<linearGradient id="g88" gradientUnits="userSpaceOnUse" x1="99.7" x2="393.9" y1="0" y2="0"><stop offset="0" stop-color="#0086ff"/><stop offset="0.0455" stop-color="#0083ff"/><stop offset="0.0909" stop-color="#007fff"/><stop offset="0.136" stop-color="#007bff"/><stop offset="0.182" stop-color="#0076ff"/><stop offset="0.227" stop-color="#2971ff"/><stop offset="0.273" stop-color="#496cff"/><stop offset="0.318" stop-color="#6166ff"/><stop offset="0.364" stop-color="#775fff"/><stop offset="0.409" stop-color="#8b56ff"/><stop offset="0.455" stop-color="#9f4dff"/><stop offset="0.5" stop-color="#b241ff"/><stop offset="0.545" stop-color="#c631ff"/><stop offset="0.591" stop-color="#d919ff"/><stop offset="0.636" stop-color="#ee00ff"/><stop offset="0.682" stop-color="#ff00fb"/><stop offset="0.727" stop-color="#ff00e8"/><stop offset="0.773" stop-color="#ff00d6"/><stop offset="0.818" stop-color="#ff00c6"/><stop offset="0.864" stop-color="#ff00b8"/><stop offset="0.909" stop-color="#ff00aa"/><stop offset="0.955" stop-color="#ff009d"/><stop offset="1" stop-color="#ff0091"/></linearGradient>
<linearGradient id="g89" gradientUnits="userSpaceOnUse" x1="101.1" x2="384.5" y1="0" y2="0"><stop offset="0" stop-color="#0082ff"/><stop offset="0.0476" stop-color="#007eff"/><stop offset="0.0952" stop-color="#007aff"/><stop offset="0.143" stop-color="#0075ff"/><stop offset="0.19" stop-color="#0071ff"/><stop offset="0.238" stop-color="#306bff"/><stop offset="0.286" stop-color="#4d65ff"/><stop offset="0.333" stop-color="#655eff"/><stop offset="0.381" stop-color="#7a56ff"/><stop offset="0.429" stop-color="#8e4dff"/><stop offset="0.476" stop-color="#a242ff"/><stop offset="0.524" stop-color="#b533ff"/><stop offset="0.571" stop-color="#c91eff"/><stop offset="0.619" stop-color="#dc00ff"/><stop offset="0.667" stop-color="#f000ff"/><stop offset="0.714" stop-color="#ff00f9"/><stop offset="0.762" stop-color="#ff00e6"/><stop offset="0.81" stop-color="#ff00d4"/><stop offset="0.857" stop-color="#ff00c5"/><stop offset="0.905" stop-color="#ff00b6"/><stop offset="0.952" stop-color="#ff00a9"/><stop offset="1" stop-color="#ff009c"/></linearGradient>
<linearGradient id="g90" gradientUnits="userSpaceOnUse" x1="102.5" x2="375.1" y1="0" y2="0"><stop offset="0" stop-color="#007dff"/><stop offset="0.05" stop-color="#0079ff"/><stop offset="0.1" stop-color="#0075ff"/><stop offset="0.15" stop-color="#0070ff"/><stop offset="0.2" stop-color="#006bff"/><stop offset="0.25" stop-color="#3665ff"/><stop offset="0.3" stop-color="#525eff"/><stop offset="0.35" stop-color="#6956ff"/><stop offset="0.4" stop-color="#7e4dff"/><stop offset="0.45" stop-color="#9243ff"/><stop offset="0.5" stop-color="#a535ff"/><stop offset="0.55" stop-color="#b822ff"/><stop offset="0.6" stop-color="#cc00ff"/><stop offset="0.65" stop-color="#df00ff"/><stop offset="0.7" stop-color="#f300ff"/><stop offset="0.75" stop-color="#ff00f6"/><stop offset="0.8" stop-color="#ff00e3"/><stop offset="0.85" stop-color="#ff00d2"/><stop offset="0.9" stop-color="#ff00c3"/><stop offset="0.95" stop-color="#ff00b4"/><stop offset="1" stop-color="#ff00a7"/></linearGradient>
<linearGradient id="g91" gradientUnits="userSpaceOnUse" x1="104.0" x2="365.7" y1="0" y2="0"><stop offset="0" stop-color="#0078ff"/><stop offset="0.0526" stop-color="#0074ff"/><stop offset="0.105" stop-color="#006fff"/><stop offset="0.158" stop-color="#006aff"/><stop offset="0.211" stop-color="#1264ff"/><stop offset="0.263" stop-color="#3c5eff"/><stop offset="0.316" stop-color="#5657ff"/><stop offset="0.368" stop-color="#6d4eff"/><stop offset="0.421" stop-color="#8144ff"/><stop offset="0.474" stop-color="#9537ff"/><stop offset="0.526" stop-color="#a825ff"/><stop offset="0.579" stop-color="#bb00ff"/><stop offset="0.632" stop-color="#cf00ff"/><stop offset="0.684" stop-color="#e200ff"/><stop offset="0.737" stop-color="#f700ff"/><stop offset="0.789" stop-color="#ff00f3"/><stop offset="0.842" stop-color="#ff00e1"/><stop offset="0.895" stop-color="#ff00d0"/><stop offset="0.947" stop-color="#ff00c1"/><stop offset="1" stop-color="#ff00b2"/></linearGradient>
<linearGradient id="g92" gradientUnits="userSpaceOnUse" x1="105.5" x2="356.3" y1="0" y2="0"><stop offset="0" stop-color="#0073ff"/><stop offset="0.0556" stop-color="#006fff"/><stop offset="0.111" stop-color="#006aff"/><stop offset="0.167" stop-color="#0064ff"/><stop offset="0.222" stop-color="#1e5eff"/><stop offset="0.278" stop-color="#4157ff"/><stop offset="0.333" stop-color="#5b4fff"/><stop offset="0.389" stop-color="#7145ff"/><stop offset="0.444" stop-color="#8539ff"/><stop offset="0.5" stop-color="#9829ff"/><stop offset="0.556" stop-color="#ac0aff"/><stop offset="0.611" stop-color="#bf00ff"/><stop offset="0.667" stop-color="#d200ff"/><stop offset="0.722" stop-color="#e600ff"/><stop offset="0.778" stop-color="#fa00ff"/><stop offset="0.833" stop-color="#ff00f0"/><stop offset="0.889" stop-color="#ff00de"/><stop offset="0.944" stop-color="#ff00cd"/><stop offset="1" stop-color="#ff00be"/></linearGradient>
<linearGradient id="g93" gradientUnits="userSpaceOnUse" x1="107.0" x2="347.0" y1="0" y2="0"><stop offset="0" stop-color="#006fff"/><stop offset="0.0556" stop-color="#006aff"/><stop offset="0.111" stop-color="#0065ff"/><stop offset="0.167" stop-color="#005fff"/><stop offset="0.222" stop-color="#1c59ff"/><stop offset="0.278" stop-color="#3f52ff"/><stop offset="0.333" stop-color="#5749ff"/><stop offset="0.389" stop-color="#6c3fff"/><stop offset="0.444" stop-color="#8033ff"/><stop offset="0.5" stop-color="#9221ff"/><stop offset="0.556" stop-color="#a500ff"/><stop offset="0.611" stop-color="#b700ff"/><stop offset="0.667" stop-color="#c900ff"/><stop offset="0.722" stop-color="#db00ff"/><stop offset="0.778" stop-color="#ee00ff"/><stop offset="0.833" stop-color="#ff00fd"/><stop offset="0.889" stop-color="#ff00ea"/><stop offset="0.944" stop-color="#ff00da"/><stop offset="1" stop-color="#ff00ca"/></linearGradient>
<linearGradient id="g94" gradientUnits="userSpaceOnUse" x1="108.6" x2="337.6" y1="0" y2="0"><stop offset="0" stop-color="#006aff"/><stop offset="0.0588" stop-color="#0065ff"/><stop offset="0.118" stop-color="#005fff"/><stop offset="0.176" stop-color="#0059ff"/><stop offset="0.235" stop-color="#2452ff"/><stop offset="0.294" stop-color="#444aff"/><stop offset="0.353" stop-color="#5b40ff"/><stop offset="0.412" stop-color="#7034ff"/><stop offset="0.471" stop-color="#8325ff"/><stop offset="0.529" stop-color="#9602ff"/><stop offset="0.588" stop-color="#a800ff"/><stop offset="0.647" stop-color="#ba00ff"/><stop offset="0.706" stop-color="#cc00ff"/><stop offset="0.765" stop-color="#de00ff"/><stop offset="0.824" stop-color="#f100ff"/><stop offset="0.882" stop-color="#ff00fa"/><stop offset="0.941" stop-color="#ff00e8"/><stop offset="1" stop-color="#ff00d7"/></linearGradient>
<linearGradient id="g95" gradientUnits="userSpaceOnUse" x1="110.1" x2="328.2" y1="0" y2="0"><stop offset="0" stop-color="#0065ff"/><stop offset="0.0625" stop-color="#005fff"/><stop offset="0.125" stop-color="#0059ff"/><stop offset="0.188" stop-color="#0052ff"/><stop offset="0.25" stop-color="#2c4aff"/><stop offset="0.312" stop-color="#4841ff"/><stop offset="0.375" stop-color="#5f36ff"/><stop offset="0.438" stop-color="#7427ff"/><stop offset="0.5" stop-color="#870fff"/><stop offset="0.562" stop-color="#9900ff"/><stop offset="0.625" stop-color="#ab00ff"/><stop offset="0.688" stop-color="#bd00ff"/><stop offset="0.75" stop-color="#cf00ff"/><stop offset="0.812" stop-color="#e200ff"/><stop offset="0.875" stop-color="#f400ff"/><stop offset="0.938" stop-color="#ff00f6"/><stop offset="1" stop-color="#ff00e5"/></linearGradient>
<linearGradient id="g96" gradientUnits="userSpaceOnUse" x1="111.7" x2="318.8" y1="0" y2="0"><stop offset="0" stop-color="#005fff"/><stop offset="0.0667" stop-color="#0059ff"/><stop offset="0.133" stop-color="#0053ff"/><stop offset="0.2" stop-color="#004bff"/><stop offset="0.267" stop-color="#3242ff"/><stop offset="0.333" stop-color="#4d38ff"/><stop offset="0.4" stop-color="#632aff"/><stop offset="0.467" stop-color="#7715ff"/><stop offset="0.533" stop-color="#8a00ff"/><stop offset="0.6" stop-color="#9d00ff"/><stop offset="0.667" stop-color="#af00ff"/><stop offset="0.733" stop-color="#c100ff"/><stop offset="0.8" stop-color="#d300ff"/><stop offset="0.867" stop-color="#e500ff"/><stop offset="0.933" stop-color="#f800ff"/><stop offset="1" stop-color="#ff00f3"/></linearGradient>
<linearGradient id="g97" gradientUnits="userSpaceOnUse" x1="113.4" x2="309.4" y1="0" y2="0"><stop offset="0" stop-color="#005aff"/><stop offset="0.0667" stop-color="#0054ff"/><stop offset="0.133" stop-color="#004dff"/><stop offset="0.2" stop-color="#0045ff"/><stop offset="0.267" stop-color="#303cff"/><stop offset="0.333" stop-color="#4a31ff"/><stop offset="0.4" stop-color="#5f23ff"/><stop offset="0.467" stop-color="#7207ff"/><stop offset="0.533" stop-color="#8400ff"/><stop offset="0.6" stop-color="#9500ff"/><stop offset="0.667" stop-color="#a600ff"/><stop offset="0.733" stop-color="#b700ff"/><stop offset="0.8" stop-color="#c800ff"/><stop offset="0.867" stop-color="#d900ff"/><stop offset="0.933" stop-color="#ea00ff"/><stop offset="1" stop-color="#fc00ff"/></linearGradient>
<linearGradient id="g98" gradientUnits="userSpaceOnUse" x1="115.1" x2="300.0" y1="0" y2="0"><stop offset="0" stop-color="#0054ff"/><stop offset="0.0714" stop-color="#004eff"/><stop offset="0.143" stop-color="#0046ff"/><stop offset="0.214" stop-color="#0d3dff"/><stop offset="0.286" stop-color="#3633ff"/><stop offset="0.357" stop-color="#4e26ff"/><stop offset="0.429" stop-color="#630fff"/><stop offset="0.5" stop-color="#7600ff"/><stop offset="0.571" stop-color="#8800ff"/><stop offset="0.643" stop-color="#9900ff"/><stop offset="0.714" stop-color="#a900ff"/><stop offset="0.786" stop-color="#ba00ff"/><stop offset="0.857" stop-color="#cb00ff"/><stop offset="0.929" stop-color="#dc00ff"/><stop offset="1" stop-color="#ee00ff"/></linearGradient>
<linearGradient id="g99" gradientUnits="userSpaceOnUse" x1="116.8" x2="290.6" y1="0" y2="0"><stop offset="0" stop-color="#004eff"/><stop offset="0.0769" stop-color="#0047ff"/><stop offset="0.154" stop-color="#003fff"/><stop offset="0.231" stop-color="#1935ff"/><stop offset="0.308" stop-color="#3b28ff"/><stop offset="0.385" stop-color="#5315ff"/><stop offset="0.462" stop-color="#6700ff"/><stop offset="0.538" stop-color="#7900ff"/><stop offset="0.615" stop-color="#8b00ff"/><stop offset="0.692" stop-color="#9c00ff"/><stop offset="0.769" stop-color="#ad00ff"/><stop offset="0.846" stop-color="#be00ff"/><stop offset="0.923" stop-color="#ce00ff"/><stop offset="1" stop-color="#e000ff"/></linearGradient>
<linearGradient id="g100" gradientUnits="userSpaceOnUse" x1="118.6" x2="281.2" y1="0" y2="0"><stop offset="0" stop-color="#0048ff"/><stop offset="0.0833" stop-color="#0040ff"/><stop offset="0.167" stop-color="#0036ff"/><stop offset="0.25" stop-color="#222aff"/><stop offset="0.333" stop-color="#4119ff"/><stop offset="0.417" stop-color="#5700ff"/><stop offset="0.5" stop-color="#6b00ff"/><stop offset="0.583" stop-color="#7d00ff"/><stop offset="0.667" stop-color="#8f00ff"/><stop offset="0.75" stop-color="#a000ff"/><stop offset="0.833" stop-color="#b000ff"/><stop offset="0.917" stop-color="#c100ff"/><stop offset="1" stop-color="#d200ff"/></linearGradient>
<linearGradient id="g101" gradientUnits="userSpaceOnUse" x1="120.5" x2="271.9" y1="0" y2="0"><stop offset="0" stop-color="#0041ff"/><stop offset="0.0909" stop-color="#0038ff"/><stop offset="0.182" stop-color="#002dff"/><stop offset="0.273" stop-color="#2a1dff"/><stop offset="0.364" stop-color="#4600ff"/><stop offset="0.455" stop-color="#5c00ff"/><stop offset="0.545" stop-color="#6f00ff"/><stop offset="0.636" stop-color="#8100ff"/><stop offset="0.727" stop-color="#9300ff"/><stop offset="0.818" stop-color="#a400ff"/><stop offset="0.909" stop-color="#b400ff"/><stop offset="1" stop-color="#c500ff"/></linearGradient>
<linearGradient id="g102" gradientUnits="userSpaceOnUse" x1="122.4" x2="262.5" y1="0" y2="0"><stop offset="0" stop-color="#003aff"/><stop offset="0.0909" stop-color="#0030ff"/><stop offset="0.182" stop-color="#0024ff"/><stop offset="0.273" stop-color="#2811ff"/><stop offset="0.364" stop-color="#4300ff"/><stop offset="0.455" stop-color="#5700ff"/><stop offset="0.545" stop-color="#6900ff"/><stop offset="0.636" stop-color="#7a00ff"/><stop offset="0.727" stop-color="#8a00ff"/><stop offset="0.818" stop-color="#9a00ff"/><stop offset="0.909" stop-color="#a900ff"/><stop offset="1" stop-color="#b900ff"/></linearGradient>
<linearGradient id="g103" gradientUnits="userSpaceOnUse" x1="124.4" x2="253.1" y1="0" y2="0"><stop offset="0" stop-color="#0032ff"/><stop offset="0.1" stop-color="#0026ff"/><stop offset="0.2" stop-color="#0016ff"/><stop offset="0.3" stop-color="#2f00ff"/><stop offset="0.4" stop-color="#4700ff"/><stop offset="0.5" stop-color="#5b00ff"/><stop offset="0.6" stop-color="#6d00ff"/><stop offset="0.7" stop-color="#7e00ff"/><stop offset="0.8" stop-color="#8e00ff"/><stop offset="0.9" stop-color="#9d00ff"/><stop offset="1" stop-color="#ad00ff"/></linearGradient>
<linearGradient id="g104" gradientUnits="userSpaceOnUse" x1="126.6" x2="243.7" y1="0" y2="0"><stop offset="0" stop-color="#0028ff"/><stop offset="0.111" stop-color="#0019ff"/><stop offset="0.222" stop-color="#1200ff"/><stop offset="0.333" stop-color="#3500ff"/><stop offset="0.444" stop-color="#4c00ff"/><stop offset="0.556" stop-color="#5f00ff"/><stop offset="0.667" stop-color="#7100ff"/><stop offset="0.778" stop-color="#8100ff"/><stop offset="0.889" stop-color="#9100ff"/><stop offset="1" stop-color="#a100ff"/></linearGradient>
<linearGradient id="g105" gradientUnits="userSpaceOnUse" x1="129.0" x2="234.3" y1="0" y2="0"><stop offset="0" stop-color="#001cff"/><stop offset="0.125" stop-color="#0000ff"/><stop offset="0.25" stop-color="#1d00ff"/><stop offset="0.375" stop-color="#3b00ff"/><stop offset="0.5" stop-color="#5100ff"/><stop offset="0.625" stop-color="#6400ff"/><stop offset="0.75" stop-color="#7500ff"/><stop offset="0.875" stop-color="#8500ff"/><stop offset="1" stop-color="#9500ff"/></linearGradient>
<linearGradient id="g106" gradientUnits="userSpaceOnUse" x1="131.4" x2="224.9" y1="0" y2="0"><stop offset="0" stop-color="#0008ff"/><stop offset="0.143" stop-color="#0000ff"/><stop offset="0.286" stop-color="#2600ff"/><stop offset="0.429" stop-color="#4100ff"/><stop offset="0.571" stop-color="#5600ff"/><stop offset="0.714" stop-color="#6800ff"/><stop offset="0.857" stop-color="#7900ff"/><stop offset="1" stop-color="#8900ff"/></linearGradient>
<linearGradient id="g107" gradientUnits="userSpaceOnUse" x1="134.2" x2="215.5" y1="0" y2="0"><stop offset="0" stop-color="#0000ff"/><stop offset="0.167" stop-color="#0000ff"/><stop offset="0.333" stop-color="#2e00ff"/><stop offset="0.5" stop-color="#4700ff"/><stop offset="0.667" stop-color="#5b00ff"/><stop offset="0.833" stop-color="#6d00ff"/><stop offset="1" stop-color="#7e00ff"/></linearGradient>
<linearGradient id="g108" gradientUnits="userSpaceOnUse" x1="137.2" x2="206.1" y1="0" y2="0"><stop offset="0" stop-color="#0000ff"/><stop offset="0.2" stop-color="#1300ff"/><stop offset="0.4" stop-color="#3600ff"/><stop offset="0.6" stop-color="#4d00ff"/><stop offset="0.8" stop-color="#6100ff"/><stop offset="1" stop-color="#7200ff"/></linearGradient>
<linearGradient id="g109" gradientUnits="userSpaceOnUse" x1="140.9" x2="196.8" y1="0" y2="0"><stop offset="0" stop-color="#0000ff"/><stop offset="0.25" stop-color="#2100ff"/><stop offset="0.5" stop-color="#3e00ff"/><stop offset="0.75" stop-color="#5400ff"/><stop offset="1" stop-color="#6600ff"/></linearGradient>
<linearGradient id="g110" gradientUnits="userSpaceOnUse" x1="145.1" x2="187.4" y1="0" y2="0"><stop offset="0" stop-color="#0000ff"/><stop offset="0.25" stop-color="#2400ff"/><stop offset="0.5" stop-color="#3a00ff"/><stop offset="0.75" stop-color="#4b00ff"/><stop offset="1" stop-color="#5a00ff"/></linearGradient>
<linearGradient id="g111" gradientUnits="userSpaceOnUse" x1="150.0" x2="178.0" y1="0" y2="0"><stop offset="0" stop-color="#1500ff"/><stop offset="0.5" stop-color="#3600ff"/><stop offset="1" stop-color="#4d00ff"/></linearGradient>
<linearGradient id="g112" gradientUnits="userSpaceOnUse" x1="155.0" x2="168.6" y1="0" y2="0"><stop offset="0" stop-color="#2500ff"/><stop offset="0.5" stop-color="#3300ff"/><stop offset="1" stop-color="#3f00ff"/></linearGradient>
<clipPath id="loc"><path d="M161.5 529.7 L161.4 529.7 L161.3 529.7 L161.3 529.7 L161.2 529.8 L161.1 529.8 L161.0 529.8 L160.9 529.8 L160.9 529.8 L160.8 529.8 L160.7 529.8 L160.7 529.8 L160.6 529.8 L160.5 529.8 L160.4 529.8 L160.3 529.8 L160.2 529.8 L160.0 529.7 L159.9 529.6 L159.7 529.5 L159.5 529.4 L159.2 529.3 L159.0 529.1 L158.7 528.9 L158.4 528.7 L158.0 528.4 L157.6 528.0 L157.1 527.6 L156.6 527.2 L156.1 526.8 L155.7 526.5 L155.4 526.2 L155.0 525.9 L154.8 525.7 L154.5 525.5 L154.1 525.2 L153.8 524.9 L153.4 524.6 L153.0 524.3 L152.5 523.9 L152.1 523.6 L151.6 523.2 L151.1 522.8 L150.6 522.4 L150.1 522.0 L149.5 521.5 L149.0 521.1 L148.4 520.6 L147.8 520.1 L147.2 519.5 L146.5 519.0 L145.8 518.4 L145.1 517.7 L144.4 517.0 L143.7 516.3 L142.9 515.5 L142.1 514.7 L141.3 513.9 L140.5 513.0 L139.6 511.9 L138.6 510.7 L137.6 509.4 L136.6 508.0 L135.5 506.5 L134.3 504.9 L133.1 503.0 L131.9 501.0 L130.6 498.9 L129.3 496.6 L127.9 494.1 L126.4 491.4 L124.9 488.5 L123.3 485.3 L121.7 481.8 L120.0 478.1 L118.2 474.2 L116.4 469.9 L114.5 465.3 L112.5 460.4 L110.4 455.1 L108.2 449.5 L106.0 443.6 L103.7 437.3 L101.4 430.6 L99.1 423.5 L96.8 415.9 L94.5 407.9 L92.2 399.6 L89.9 390.8 L87.6 381.7 L85.3 372.3 L83.1 362.4 L80.8 352.1 L78.6 341.4 L76.4 330.5 L74.3 319.5 L72.4 308.4 L70.6 297.3 L68.9 285.8 L67.2 274.3 L65.7 262.7 L64.4 251.3 L63.3 240.2 L62.5 229.3 L61.7 218.4 L61.1 207.6 L60.8 197.1 L60.7 186.9 L60.8 177.0 L61.2 167.5 L61.8 158.3 L62.7 149.3 L63.8 140.8 L65.1 132.7 L66.7 125.3 L68.6 118.4 L70.8 111.9 L73.2 106.0 L75.8 100.6 L78.6 95.9 L81.5 91.7 L84.6 88.3 L87.9 85.6 L91.4 83.5 L95.0 81.9 L98.7 80.7 L102.4 79.9 L106.2 79.6 L110.1 79.8 L114.1 80.5 L118.0 81.5 L122.1 82.8 L126.0 84.0 L130.0 85.4 L134.0 87.1 L138.1 89.0 L142.1 90.9 L146.1 93.0 L150.0 95.0 L153.8 97.1 L157.7 99.2 L161.4 101.4 L165.2 103.6 L168.9 105.9 L172.6 108.2 L176.3 110.6 L179.9 113.0 L183.5 115.4 L187.1 117.9 L190.7 120.5 L194.3 123.0 L197.9 125.7 L201.5 128.3 L205.0 131.0 L208.6 133.8 L212.1 136.5 L215.7 139.3 L219.2 142.1 L222.8 145.0 L226.3 147.9 L229.8 150.8 L233.3 153.7 L236.9 156.7 L240.4 159.7 L243.9 162.7 L247.4 165.7 L250.9 168.7 L254.5 171.8 L258.0 174.8 L261.5 177.9 L265.0 181.0 L268.6 184.1 L272.1 187.2 L275.6 190.4 L279.2 193.5 L282.7 196.6 L286.2 199.8 L289.7 202.9 L293.2 206.1 L296.7 209.3 L300.2 212.4 L303.7 215.6 L307.2 218.7 L310.7 221.9 L314.2 225.1 L317.7 228.2 L321.1 231.4 L324.6 234.5 L328.0 237.6 L331.5 240.8 L334.9 243.9 L338.3 247.0 L341.7 250.1 L345.0 253.2 L348.4 256.2 L351.7 259.3 L355.0 262.3 L358.3 265.3 L361.6 268.3 L364.8 271.3 L368.1 274.2 L371.3 277.2 L374.4 280.1 L377.6 283.0 L380.7 285.8 L383.8 288.6 L386.8 291.4 L389.9 294.1 L392.8 296.9 L395.8 299.5 L398.7 302.2 L401.5 304.8 L404.3 307.4 L407.1 309.9 L409.8 312.4 L412.5 314.8 L415.1 317.2 L417.6 319.5 L420.0 321.8 L422.4 324.0 L424.8 326.1 L427.1 328.2 L429.3 330.2 L431.5 332.3 L433.7 334.3 L435.8 336.2 L437.9 338.1 L439.9 339.9 L441.8 341.7 L443.7 343.4 L445.5 345.1 L447.3 346.6 L449.0 348.2 L450.7 349.7 L452.3 351.1 L453.8 352.5 L455.3 353.9 L456.7 355.2 L458.1 356.5 L459.4 357.7 L460.7 358.9 L461.9 360.0 L463.1 361.1 L464.3 362.2 L465.4 363.2 L466.4 364.1 L467.5 365.1 L468.4 366.0 L469.4 366.8 L470.3 367.7 L471.2 368.5 L472.0 369.2 L472.8 370.0 L473.6 370.7 L474.3 371.3 L474.9 371.9 L475.6 372.5 L476.3 373.2 L477.2 373.9 L478.1 374.8 L479.3 375.9 L480.4 377.0 L481.6 378.0 L482.7 379.1 L483.7 380.0 L484.6 380.7 L485.3 381.4 L486.0 382.1 L486.7 382.7 L487.3 383.2 L487.9 383.7 L488.3 384.1 L488.8 384.5 L489.1 384.9 L489.5 385.2 L489.8 385.5 L490.2 385.9 L490.7 386.3 L491.2 386.8 L491.8 387.3 L492.3 387.7 L492.7 388.1 L493.0 388.4 Z"/></clipPath>
<clipPath id="loc2"><path d="M161.5 529.7 L161.4 529.7 L161.3 529.7 L161.3 529.7 L161.2 529.8 L161.1 529.8 L161.0 529.8 L160.9 529.8 L160.9 529.8 L160.8 529.8 L160.7 529.8 L160.7 529.8 L160.6 529.8 L160.5 529.8 L160.4 529.8 L160.3 529.8 L160.2 529.8 L160.0 529.7 L159.9 529.6 L159.7 529.5 L159.5 529.4 L159.2 529.3 L159.0 529.1 L158.7 528.9 L158.4 528.7 L158.0 528.4 L157.6 528.0 L157.1 527.6 L156.6 527.2 L156.1 526.8 L155.7 526.5 L155.4 526.2 L155.0 525.9 L154.8 525.7 L154.5 525.5 L154.1 525.2 L153.8 524.9 L153.4 524.6 L153.0 524.3 L152.5 523.9 L152.1 523.6 L151.6 523.2 L151.1 522.8 L150.6 522.4 L150.1 522.0 L149.5 521.5 L149.0 521.1 L148.4 520.6 L147.8 520.1 L147.2 519.5 L146.5 519.0 L145.8 518.4 L145.1 517.7 L144.4 517.0 L143.7 516.3 L142.9 515.5 L142.1 514.7 L141.3 513.9 L140.5 513.0 L139.6 511.9 L138.6 510.7 L137.6 509.4 L136.6 508.0 L135.5 506.5 L134.3 504.9 L133.1 503.0 L131.9 501.0 L130.6 498.9 L129.3 496.6 L127.9 494.1 L126.4 491.4 L124.9 488.5 L123.3 485.3 L121.7 481.8 L120.0 478.1 L118.2 474.2 L116.4 469.9 L114.5 465.3 L112.5 460.4 L110.4 455.1 L108.2 449.5 L106.0 443.6 L103.7 437.3 L101.4 430.6 L99.1 423.5 L96.8 415.9 L94.5 407.9 L92.2 399.6 L89.9 390.8 L87.6 381.7 L85.3 372.3 L83.1 362.4 L80.8 352.1 L78.6 341.4 L76.4 330.5 L74.3 319.5 L72.4 308.4 L70.6 297.3 L68.9 285.8 L67.2 274.3 L65.7 262.7 L64.4 251.3 L63.3 240.2 L62.5 229.3 L61.7 218.4 L61.1 207.6 L60.8 197.1 L60.7 186.9 L60.8 177.0 L61.2 167.5 L61.8 158.3 L62.7 149.3 L63.8 140.8 L65.1 132.7 L66.7 125.3 L68.6 118.4 L70.8 111.9 L73.2 106.0 L75.8 100.6 L78.6 95.9 L81.5 91.7 L84.6 88.3 L87.9 85.6 L91.4 83.5 L95.0 81.9 L98.7 80.7 L102.4 79.9 L106.2 79.6 L110.1 79.8 L114.1 80.5 L118.0 81.5 L122.1 82.8 L126.0 84.0 L130.0 85.4 L134.0 87.1 L138.1 89.0 L142.1 90.9 L146.1 93.0 L150.0 95.0 L153.8 97.1 L157.7 99.2 L161.4 101.4 L165.2 103.6 L168.9 105.9 L172.6 108.2 L176.3 110.6 L179.9 113.0 L183.5 115.4 L187.1 117.9 L190.7 120.5 L194.3 123.0 L197.9 125.7 L201.5 128.3 L205.0 131.0 L208.6 133.8 L212.1 136.5 L215.7 139.3 L219.2 142.1 L222.8 145.0 L226.3 147.9 L229.8 150.8 L233.3 153.7 L236.9 156.7 L240.4 159.7 L243.9 162.7 L247.4 165.7 L250.9 168.7 L254.5 171.8 L258.0 174.8 L261.5 177.9 L265.0 181.0 L268.6 184.1 L272.1 187.2 L275.6 190.4 L279.2 193.5 L282.7 196.6 L286.2 199.8 L289.7 202.9 L293.2 206.1 L296.7 209.3 L300.2 212.4 L303.7 215.6 L307.2 218.7 L310.7 221.9 L314.2 225.1 L317.7 228.2 L321.1 231.4 L324.6 234.5 L328.0 237.6 L331.5 240.8 L334.9 243.9 L338.3 247.0 L341.7 250.1 L345.0 253.2 L348.4 256.2 L351.7 259.3 L355.0 262.3 L358.3 265.3 L361.6 268.3 L364.8 271.3 L368.1 274.2 L371.3 277.2 L374.4 280.1 L377.6 283.0 L380.7 285.8 L383.8 288.6 L386.8 291.4 L389.9 294.1 L392.8 296.9 L395.8 299.5 L398.7 302.2 L401.5 304.8 L404.3 307.4 L407.1 309.9 L409.8 312.4 L412.5 314.8 L415.1 317.2 L417.6 319.5 L420.0 321.8 L422.4 324.0 L424.8 326.1 L427.1 328.2 L429.3 330.2 L431.5 332.3 L433.7 334.3 L435.8 336.2 L437.9 338.1 L439.9 339.9 L441.8 341.7 L443.7 343.4 L445.5 345.1 L447.3 346.6 L449.0 348.2 L450.7 349.7 L452.3 351.1 L453.8 352.5 L455.3 353.9 L456.7 355.2 L458.1 356.5 L459.4 357.7 L460.7 358.9 L461.9 360.0 L463.1 361.1 L464.3 362.2 L465.4 363.2 L466.4 364.1 L467.5 365.1 L468.4 366.0 L469.4 366.8 L470.3 367.7 L471.2 368.5 L472.0 369.2 L472.8 370.0 L473.6 370.7 L474.3 371.3 L474.9 371.9 L475.6 372.5 L476.3 373.2 L477.2 373.9 L478.1 374.8 L479.3 375.9 L480.4 377.0 L481.6 378.0 L482.7 379.1 L483.7 380.0 L484.6 380.7 L485.3 381.4 L486.0 382.1 L486.7 382.7 L487.3 383.2 L487.9 383.7 L488.3 384.1 L488.8 384.5 L489.1 384.9 L489.5 385.2 L489.8 385.5 L490.2 385.9 L490.7 386.3 L491.2 386.8 L491.8 387.3 L492.3 387.7 L492.7 388.1 L493.0 388.4 Z" stroke="#000" stroke-width="6"/><path d="M161.5 529.7 L161.4 529.7 L161.3 529.7 L161.3 529.7 L161.2 529.8 L161.1 529.8 L161.0 529.8 L160.9 529.8 L160.9 529.8 L160.8 529.8 L160.7 529.8 L160.7 529.8 L160.6 529.8 L160.5 529.8 L160.4 529.8 L160.3 529.8 L160.2 529.8 L160.0 529.7 L159.9 529.6 L159.7 529.5 L159.5 529.4 L159.2 529.3 L159.0 529.1 L158.7 528.9 L158.4 528.7 L158.0 528.4 L157.6 528.0 L157.1 527.6 L156.6 527.2 L156.1 526.8 L155.7 526.5 L155.4 526.2 L155.0 525.9 L154.8 525.7 L154.5 525.5 L154.1 525.2 L153.8 524.9 L153.4 524.6 L153.0 524.3 L152.5 523.9 L152.1 523.6 L151.6 523.2 L151.1 522.8 L150.6 522.4 L150.1 522.0 L149.5 521.5 L149.0 521.1 L148.4 520.6 L147.8 520.1 L147.2 519.5 L146.5 519.0 L145.8 518.4 L145.1 517.7 L144.4 517.0 L143.7 516.3 L142.9 515.5 L142.1 514.7 L141.3 513.9 L140.5 513.0 L139.6 511.9 L138.6 510.7 L137.6 509.4 L136.6 508.0 L135.5 506.5 L134.3 504.9 L133.1 503.0 L131.9 501.0 L130.6 498.9 L129.3 496.6 L127.9 494.1 L126.4 491.4 L124.9 488.5 L123.3 485.3 L121.7 481.8 L120.0 478.1 L118.2 474.2 L116.4 469.9 L114.5 465.3 L112.5 460.4 L110.4 455.1 L108.2 449.5 L106.0 443.6 L103.7 437.3 L101.4 430.6 L99.1 423.5 L96.8 415.9 L94.5 407.9 L92.2 399.6 L89.9 390.8 L87.6 381.7 L85.3 372.3 L83.1 362.4 L80.8 352.1 L78.6 341.4 L76.4 330.5 L74.3 319.5 L72.4 308.4 L70.6 297.3 L68.9 285.8 L67.2 274.3 L65.7 262.7 L64.4 251.3 L63.3 240.2 L62.5 229.3 L61.7 218.4 L61.1 207.6 L60.8 197.1 L60.7 186.9 L60.8 177.0 L61.2 167.5 L61.8 158.3 L62.7 149.3 L63.8 140.8 L65.1 132.7 L66.7 125.3 L68.6 118.4 L70.8 111.9 L73.2 106.0 L75.8 100.6 L78.6 95.9 L81.5 91.7 L84.6 88.3 L87.9 85.6 L91.4 83.5 L95.0 81.9 L98.7 80.7 L102.4 79.9 L106.2 79.6 L110.1 79.8 L114.1 80.5 L118.0 81.5 L122.1 82.8 L126.0 84.0 L130.0 85.4 L134.0 87.1 L138.1 89.0 L142.1 90.9 L146.1 93.0 L150.0 95.0 L153.8 97.1 L157.7 99.2 L161.4 101.4 L165.2 103.6 L168.9 105.9 L172.6 108.2 L176.3 110.6 L179.9 113.0 L183.5 115.4 L187.1 117.9 L190.7 120.5 L194.3 123.0 L197.9 125.7 L201.5 128.3 L205.0 131.0 L208.6 133.8 L212.1 136.5 L215.7 139.3 L219.2 142.1 L222.8 145.0 L226.3 147.9 L229.8 150.8 L233.3 153.7 L236.9 156.7 L240.4 159.7 L243.9 162.7 L247.4 165.7 L250.9 168.7 L254.5 171.8 L258.0 174.8 L261.5 177.9 L265.0 181.0 L268.6 184.1 L272.1 187.2 L275.6 190.4 L279.2 193.5 L282.7 196.6 L286.2 199.8 L289.7 202.9 L293.2 206.1 L296.7 209.3 L300.2 212.4 L303.7 215.6 L307.2 218.7 L310.7 221.9 L314.2 225.1 L317.7 228.2 L321.1 231.4 L324.6 234.5 L328.0 237.6 L331.5 240.8 L334.9 243.9 L338.3 247.0 L341.7 250.1 L345.0 253.2 L348.4 256.2 L351.7 259.3 L355.0 262.3 L358.3 265.3 L361.6 268.3 L364.8 271.3 L368.1 274.2 L371.3 277.2 L374.4 280.1 L377.6 283.0 L380.7 285.8 L383.8 288.6 L386.8 291.4 L389.9 294.1 L392.8 296.9 L395.8 299.5 L398.7 302.2 L401.5 304.8 L404.3 307.4 L407.1 309.9 L409.8 312.4 L412.5 314.8 L415.1 317.2 L417.6 319.5 L420.0 321.8 L422.4 324.0 L424.8 326.1 L427.1 328.2 L429.3 330.2 L431.5 332.3 L433.7 334.3 L435.8 336.2 L437.9 338.1 L439.9 339.9 L441.8 341.7 L443.7 343.4 L445.5 345.1 L447.3 346.6 L449.0 348.2 L450.7 349.7 L452.3 351.1 L453.8 352.5 L455.3 353.9 L456.7 355.2 L458.1 356.5 L459.4 357.7 L460.7 358.9 L461.9 360.0 L463.1 361.1 L464.3 362.2 L465.4 363.2 L466.4 364.1 L467.5 365.1 L468.4 366.0 L469.4 366.8 L470.3 367.7 L471.2 368.5 L472.0 369.2 L472.8 370.0 L473.6 370.7 L474.3 371.3 L474.9 371.9 L475.6 372.5 L476.3 373.2 L477.2 373.9 L478.1 374.8 L479.3 375.9 L480.4 377.0 L481.6 378.0 L482.7 379.1 L483.7 380.0 L484.6 380.7 L485.3 381.4 L486.0 382.1 L486.7 382.7 L487.3 383.2 L487.9 383.7 L488.3 384.1 L488.8 384.5 L489.1 384.9 L489.5 385.2 L489.8 385.5 L490.2 385.9 L490.7 386.3 L491.2 386.8 L491.8 387.3 L492.3 387.7 L492.7 388.1 L493.0 388.4 Z" transform="translate(-2.5 -2.5) scale(1.01)"/></clipPath>
<clipPath id="ax"><rect x="58.5" y="75.5" width="440.5" height="457.7"/></clipPath>
<filter id="vb" x="0" y="0" width="797" height="652" filterUnits="userSpaceOnUse"><feGaussianBlur stdDeviation="0 1.6"/></filter>
</defs>
<g id="icon"><rect x="9" y="7" width="16" height="16" fill="#000"/><path d="M15.2 21.5 C17.5 21.8 19.3 19.5 19.4 16.5 L19.3 8.3 L20.6 8.8 L21.2 13 L23.4 18.2 L21.6 15.8 L20.6 19 C19.5 21.2 17.2 22.4 15.2 21.5Z" fill="#e8621a"/><path d="M15.4 21.2 C17.4 20.6 18.8 18.6 19 15.8 L19.2 9 L20.2 12.4 L20 17.6 C19.2 20 17.2 21.8 15.4 21.2Z" fill="#ffd23c"/><path d="M14.6 18.6 L17.6 13.6 L18.6 16.8 L16.4 19.6Z" fill="#a81c10"/><path d="M9.6 15.4 L12.4 13.9 L14.2 15 L16.8 12.2 L14.8 16.6 L12.6 17 Z" fill="#4fb7c4"/></g>
<g stroke="#111" stroke-width="1.15" fill="none"><path d="M677 15.5H687.2"/><rect x="722.5" y="10.5" width="9.2" height="9.2" rx="1.3"/><path d="M768.2 10.3L778 20.1M778 10.3L768.2 20.1"/></g>
<rect x="58.5" y="75.5" width="440.5" height="457.7" fill="#666"/>
<g clip-path="url(#ax)"><g clip-path="url(#loc)"><g filter="url(#vb)">
<rect x="89.4" y="79.0" width="37.0" height="5.0" fill="url(#g0)"/>
<rect x="83.6" y="83.0" width="53.3" height="5.0" fill="url(#g1)"/>
<rect x="79.7" y="87.0" width="65.5" height="5.0" fill="url(#g2)"/>
<rect x="76.8" y="91.0" width="76.0" height="5.0" fill="url(#g3)"/>
<rect x="74.4" y="95.0" width="85.7" height="5.0" fill="url(#g4)"/>
<rect x="72.4" y="99.0" width="94.6" height="5.0" fill="url(#g5)"/>
<rect x="70.6" y="103.0" width="102.9" height="5.0" fill="url(#g6)"/>
<rect x="68.9" y="107.0" width="110.7" height="5.0" fill="url(#g7)"/>
<rect x="67.6" y="111.0" width="118.0" height="5.0" fill="url(#g8)"/>
<rect x="66.3" y="115.0" width="125.0" height="5.0" fill="url(#g9)"/>
<rect x="65.2" y="119.0" width="131.7" height="5.0" fill="url(#g10)"/>
<rect x="64.2" y="123.0" width="138.1" height="5.0" fill="url(#g11)"/>
<rect x="63.4" y="127.0" width="144.3" height="5.0" fill="url(#g12)"/>
<rect x="62.7" y="131.0" width="150.2" height="5.0" fill="url(#g13)"/>
<rect x="62.0" y="135.0" width="155.9" height="5.0" fill="url(#g14)"/>
<rect x="61.4" y="139.0" width="161.5" height="5.0" fill="url(#g15)"/>
<rect x="60.9" y="143.0" width="166.9" height="5.0" fill="url(#g16)"/>
<rect x="60.5" y="147.0" width="172.2" height="5.0" fill="url(#g17)"/>
<rect x="60.1" y="151.0" width="177.4" height="5.0" fill="url(#g18)"/>
<rect x="59.7" y="155.0" width="182.5" height="5.0" fill="url(#g19)"/>
<rect x="59.5" y="159.0" width="187.4" height="5.0" fill="url(#g20)"/>
<rect x="59.2" y="163.0" width="192.3" height="5.0" fill="url(#g21)"/>
<rect x="59.0" y="167.0" width="197.1" height="5.0" fill="url(#g22)"/>
<rect x="58.9" y="171.0" width="201.9" height="5.0" fill="url(#g23)"/>
<rect x="58.8" y="175.0" width="206.6" height="5.0" fill="url(#g24)"/>
<rect x="58.7" y="179.0" width="211.2" height="5.0" fill="url(#g25)"/>
<rect x="58.7" y="183.0" width="215.7" height="5.0" fill="url(#g26)"/>
<rect x="58.7" y="187.0" width="220.2" height="5.0" fill="url(#g27)"/>
<rect x="58.7" y="191.0" width="224.7" height="5.0" fill="url(#g28)"/>
<rect x="58.8" y="195.0" width="229.1" height="5.0" fill="url(#g29)"/>
<rect x="58.9" y="199.0" width="233.4" height="5.0" fill="url(#g30)"/>
<rect x="59.0" y="203.0" width="237.7" height="5.0" fill="url(#g31)"/>
<rect x="59.1" y="207.0" width="242.0" height="5.0" fill="url(#g32)"/>
<rect x="59.3" y="211.0" width="246.3" height="5.0" fill="url(#g33)"/>
<rect x="59.6" y="215.0" width="250.5" height="5.0" fill="url(#g34)"/>
<rect x="59.8" y="219.0" width="254.7" height="5.0" fill="url(#g35)"/>
<rect x="60.1" y="223.0" width="258.8" height="5.0" fill="url(#g36)"/>
<rect x="60.3" y="227.0" width="263.0" height="5.0" fill="url(#g37)"/>
<rect x="60.6" y="231.0" width="267.1" height="5.0" fill="url(#g38)"/>
<rect x="61.0" y="235.0" width="271.1" height="5.0" fill="url(#g39)"/>
<rect x="61.3" y="239.0" width="275.2" height="5.0" fill="url(#g40)"/>
<rect x="61.7" y="243.0" width="279.2" height="5.0" fill="url(#g41)"/>
<rect x="62.1" y="247.0" width="283.1" height="5.0" fill="url(#g42)"/>
<rect x="62.5" y="251.0" width="287.1" height="5.0" fill="url(#g43)"/>
<rect x="62.9" y="255.0" width="291.0" height="5.0" fill="url(#g44)"/>
<rect x="63.4" y="259.0" width="295.0" height="5.0" fill="url(#g45)"/>
<rect x="63.8" y="263.0" width="298.9" height="5.0" fill="url(#g46)"/>
<rect x="64.4" y="267.0" width="302.7" height="5.0" fill="url(#g47)"/>
<rect x="64.9" y="271.0" width="306.6" height="5.0" fill="url(#g48)"/>
<rect x="65.4" y="275.0" width="310.4" height="5.0" fill="url(#g49)"/>
<rect x="66.0" y="279.0" width="314.2" height="5.0" fill="url(#g50)"/>
<rect x="66.5" y="283.0" width="318.0" height="5.0" fill="url(#g51)"/>
<rect x="67.1" y="287.0" width="321.8" height="5.0" fill="url(#g52)"/>
<rect x="67.7" y="291.0" width="325.6" height="5.0" fill="url(#g53)"/>
<rect x="68.3" y="295.0" width="329.4" height="5.0" fill="url(#g54)"/>
<rect x="69.0" y="299.0" width="333.2" height="5.0" fill="url(#g55)"/>
<rect x="69.6" y="303.0" width="336.9" height="5.0" fill="url(#g56)"/>
<rect x="70.2" y="307.0" width="340.6" height="5.0" fill="url(#g57)"/>
<rect x="70.9" y="311.0" width="344.2" height="5.0" fill="url(#g58)"/>
<rect x="71.6" y="315.0" width="347.9" height="5.0" fill="url(#g59)"/>
<rect x="72.3" y="319.0" width="351.6" height="5.0" fill="url(#g60)"/>
<rect x="73.1" y="323.0" width="355.2" height="5.0" fill="url(#g61)"/>
<rect x="73.8" y="327.0" width="358.9" height="5.0" fill="url(#g62)"/>
<rect x="74.6" y="331.0" width="362.5" height="5.0" fill="url(#g63)"/>
<rect x="75.4" y="335.0" width="366.0" height="5.0" fill="url(#g64)"/>
<rect x="76.2" y="339.0" width="369.6" height="5.0" fill="url(#g65)"/>
<rect x="77.0" y="343.0" width="373.2" height="5.0" fill="url(#g66)"/>
<rect x="77.9" y="347.0" width="376.8" height="5.0" fill="url(#g67)"/>
<rect x="78.7" y="351.0" width="380.3" height="5.0" fill="url(#g68)"/>
<rect x="79.6" y="355.0" width="383.8" height="5.0" fill="url(#g69)"/>
<rect x="80.5" y="359.0" width="387.3" height="5.0" fill="url(#g70)"/>
<rect x="81.3" y="363.0" width="390.8" height="5.0" fill="url(#g71)"/>
<rect x="82.3" y="367.0" width="394.3" height="5.0" fill="url(#g72)"/>
<rect x="83.2" y="371.0" width="397.7" height="5.0" fill="url(#g73)"/>
<rect x="84.1" y="375.0" width="401.1" height="5.0" fill="url(#g74)"/>
<rect x="85.1" y="379.0" width="404.6" height="5.0" fill="url(#g75)"/>
<rect x="86.0" y="383.0" width="407.9" height="5.0" fill="url(#g76)"/>
<rect x="87.1" y="387.0" width="406.9" height="5.0" fill="url(#g77)"/>
<rect x="88.1" y="391.0" width="399.7" height="5.0" fill="url(#g78)"/>
<rect x="89.1" y="395.0" width="389.3" height="5.0" fill="url(#g79)"/>
<rect x="90.2" y="399.0" width="378.8" height="5.0" fill="url(#g80)"/>
<rect x="91.3" y="403.0" width="368.3" height="5.0" fill="url(#g81)"/>
<rect x="92.4" y="407.0" width="357.8" height="5.0" fill="url(#g82)"/>
<rect x="93.6" y="411.0" width="347.3" height="5.0" fill="url(#g83)"/>
<rect x="94.7" y="415.0" width="336.7" height="5.0" fill="url(#g84)"/>
<rect x="95.9" y="419.0" width="326.1" height="5.0" fill="url(#g85)"/>
<rect x="97.1" y="423.0" width="315.5" height="5.0" fill="url(#g86)"/>
<rect x="98.4" y="427.0" width="304.9" height="5.0" fill="url(#g87)"/>
<rect x="99.7" y="431.0" width="294.2" height="5.0" fill="url(#g88)"/>
<rect x="101.1" y="435.0" width="283.4" height="5.0" fill="url(#g89)"/>
<rect x="102.5" y="439.0" width="272.6" height="5.0" fill="url(#g90)"/>
<rect x="104.0" y="443.0" width="261.8" height="5.0" fill="url(#g91)"/>
<rect x="105.5" y="447.0" width="250.9" height="5.0" fill="url(#g92)"/>
<rect x="107.0" y="451.0" width="239.9" height="5.0" fill="url(#g93)"/>
<rect x="108.6" y="455.0" width="229.0" height="5.0" fill="url(#g94)"/>
<rect x="110.1" y="459.0" width="218.0" height="5.0" fill="url(#g95)"/>
<rect x="111.7" y="463.0" width="207.1" height="5.0" fill="url(#g96)"/>
<rect x="113.4" y="467.0" width="196.0" height="5.0" fill="url(#g97)"/>
<rect x="115.1" y="471.0" width="185.0" height="5.0" fill="url(#g98)"/>
<rect x="116.8" y="475.0" width="173.8" height="5.0" fill="url(#g99)"/>
<rect x="118.6" y="479.0" width="162.6" height="5.0" fill="url(#g100)"/>
<rect x="120.5" y="483.0" width="151.4" height="5.0" fill="url(#g101)"/>
<rect x="122.4" y="487.0" width="140.1" height="5.0" fill="url(#g102)"/>
<rect x="124.4" y="491.0" width="128.6" height="5.0" fill="url(#g103)"/>
<rect x="126.6" y="495.0" width="117.0" height="5.0" fill="url(#g104)"/>
<rect x="129.0" y="499.0" width="105.3" height="5.0" fill="url(#g105)"/>
<rect x="131.4" y="503.0" width="93.5" height="5.0" fill="url(#g106)"/>
<rect x="134.2" y="507.0" width="81.3" height="5.0" fill="url(#g107)"/>
<rect x="137.2" y="511.0" width="68.9" height="5.0" fill="url(#g108)"/>
<rect x="140.9" y="515.0" width="55.9" height="5.0" fill="url(#g109)"/>
<rect x="145.1" y="519.0" width="42.2" height="5.0" fill="url(#g110)"/>
<rect x="150.0" y="523.0" width="28.0" height="5.0" fill="url(#g111)"/>
<rect x="155.0" y="527.0" width="13.6" height="5.0" fill="url(#g112)"/>
</g></g>
<path d="M161.5 529.7 L161.4 529.7 L161.3 529.7 L161.3 529.7 L161.2 529.8 L161.1 529.8 L161.0 529.8 L160.9 529.8 L160.9 529.8 L160.8 529.8 L160.7 529.8 L160.7 529.8 L160.6 529.8 L160.5 529.8 L160.4 529.8 L160.3 529.8 L160.2 529.8 L160.0 529.7 L159.9 529.6 L159.7 529.5 L159.5 529.4 L159.2 529.3 L159.0 529.1 L158.7 528.9 L158.4 528.7 L158.0 528.4 L157.6 528.0 L157.1 527.6 L156.6 527.2 L156.1 526.8 L155.7 526.5 L155.4 526.2 L155.0 525.9 L154.8 525.7 L154.5 525.5 L154.1 525.2 L153.8 524.9 L153.4 524.6 L153.0 524.3 L152.5 523.9 L152.1 523.6 L151.6 523.2 L151.1 522.8 L150.6 522.4 L150.1 522.0 L149.5 521.5 L149.0 521.1 L148.4 520.6 L147.8 520.1 L147.2 519.5 L146.5 519.0 L145.8 518.4 L145.1 517.7 L144.4 517.0 L143.7 516.3 L142.9 515.5 L142.1 514.7 L141.3 513.9 L140.5 513.0 L139.6 511.9 L138.6 510.7 L137.6 509.4 L136.6 508.0 L135.5 506.5 L134.3 504.9 L133.1 503.0 L131.9 501.0 L130.6 498.9 L129.3 496.6 L127.9 494.1 L126.4 491.4 L124.9 488.5 L123.3 485.3 L121.7 481.8 L120.0 478.1 L118.2 474.2 L116.4 469.9 L114.5 465.3 L112.5 460.4 L110.4 455.1 L108.2 449.5 L106.0 443.6 L103.7 437.3 L101.4 430.6 L99.1 423.5 L96.8 415.9 L94.5 407.9 L92.2 399.6 L89.9 390.8 L87.6 381.7 L85.3 372.3 L83.1 362.4 L80.8 352.1 L78.6 341.4 L76.4 330.5 L74.3 319.5 L72.4 308.4 L70.6 297.3 L68.9 285.8 L67.2 274.3 L65.7 262.7 L64.4 251.3 L63.3 240.2 L62.5 229.3 L61.7 218.4 L61.1 207.6 L60.8 197.1 L60.7 186.9 L60.8 177.0 L61.2 167.5 L61.8 158.3 L62.7 149.3 L63.8 140.8 L65.1 132.7 L66.7 125.3 L68.6 118.4 L70.8 111.9 L73.2 106.0 L75.8 100.6 L78.6 95.9 L81.5 91.7 L84.6 88.3 L87.9 85.6 L91.4 83.5 L95.0 81.9 L98.7 80.7 L102.4 79.9 L106.2 79.6 L110.1 79.8 L114.1 80.5 L118.0 81.5 L122.1 82.8 L126.0 84.0 L130.0 85.4 L134.0 87.1 L138.1 89.0 L142.1 90.9 L146.1 93.0 L150.0 95.0 L153.8 97.1 L157.7 99.2 L161.4 101.4 L165.2 103.6 L168.9 105.9 L172.6 108.2 L176.3 110.6 L179.9 113.0 L183.5 115.4 L187.1 117.9 L190.7 120.5 L194.3 123.0 L197.9 125.7 L201.5 128.3 L205.0 131.0 L208.6 133.8 L212.1 136.5 L215.7 139.3 L219.2 142.1 L222.8 145.0 L226.3 147.9 L229.8 150.8 L233.3 153.7 L236.9 156.7 L240.4 159.7 L243.9 162.7 L247.4 165.7 L250.9 168.7 L254.5 171.8 L258.0 174.8 L261.5 177.9 L265.0 181.0 L268.6 184.1 L272.1 187.2 L275.6 190.4 L279.2 193.5 L282.7 196.6 L286.2 199.8 L289.7 202.9 L293.2 206.1 L296.7 209.3 L300.2 212.4 L303.7 215.6 L307.2 218.7 L310.7 221.9 L314.2 225.1 L317.7 228.2 L321.1 231.4 L324.6 234.5 L328.0 237.6 L331.5 240.8 L334.9 243.9 L338.3 247.0 L341.7 250.1 L345.0 253.2 L348.4 256.2 L351.7 259.3 L355.0 262.3 L358.3 265.3 L361.6 268.3 L364.8 271.3 L368.1 274.2 L371.3 277.2 L374.4 280.1 L377.6 283.0 L380.7 285.8 L383.8 288.6 L386.8 291.4 L389.9 294.1 L392.8 296.9 L395.8 299.5 L398.7 302.2 L401.5 304.8 L404.3 307.4 L407.1 309.9 L409.8 312.4 L412.5 314.8 L415.1 317.2 L417.6 319.5 L420.0 321.8 L422.4 324.0 L424.8 326.1 L427.1 328.2 L429.3 330.2 L431.5 332.3 L433.7 334.3 L435.8 336.2 L437.9 338.1 L439.9 339.9 L441.8 341.7 L443.7 343.4 L445.5 345.1 L447.3 346.6 L449.0 348.2 L450.7 349.7 L452.3 351.1 L453.8 352.5 L455.3 353.9 L456.7 355.2 L458.1 356.5 L459.4 357.7 L460.7 358.9 L461.9 360.0 L463.1 361.1 L464.3 362.2 L465.4 363.2 L466.4 364.1 L467.5 365.1 L468.4 366.0 L469.4 366.8 L470.3 367.7 L471.2 368.5 L472.0 369.2 L472.8 370.0 L473.6 370.7 L474.3 371.3 L474.9 371.9 L475.6 372.5 L476.3 373.2 L477.2 373.9 L478.1 374.8 L479.3 375.9 L480.4 377.0 L481.6 378.0 L482.7 379.1 L483.7 380.0 L484.6 380.7 L485.3 381.4 L486.0 382.1 L486.7 382.7 L487.3 383.2 L487.9 383.7 L488.3 384.1 L488.8 384.5 L489.1 384.9 L489.5 385.2 L489.8 385.5 L490.2 385.9 L490.7 386.3 L491.2 386.8 L491.8 387.3 L492.3 387.7 L492.7 388.1 L493.0 388.4 Z" fill="none" stroke="#242424" stroke-width="1.8" stroke-linejoin="round"/>
</g>
<g clip-path="url(#loc)"><path d="M114.1 478.1h7M117.6 474.6v7M114.1 423.9h7M117.6 420.4v7M114.1 369.6h7M117.6 366.1v7M114.1 315.3h7M117.6 311.8v7M114.1 261.0h7M117.6 257.5v7M114.1 206.8h7M117.6 203.3v7M114.1 152.5h7M117.6 149.0v7M114.1 98.2h7M117.6 94.7v7M173.3 478.1h7M176.8 474.6v7M173.3 423.9h7M176.8 420.4v7M173.3 369.6h7M176.8 366.1v7M173.3 315.3h7M176.8 311.8v7M173.3 261.0h7M176.8 257.5v7M173.3 206.8h7M176.8 203.3v7M173.3 152.5h7M176.8 149.0v7M173.3 98.2h7M176.8 94.7v7M232.4 478.1h7M235.9 474.6v7M232.4 423.9h7M235.9 420.4v7M232.4 369.6h7M235.9 366.1v7M232.4 315.3h7M235.9 311.8v7M232.4 261.0h7M235.9 257.5v7M232.4 206.8h7M235.9 203.3v7M232.4 152.5h7M235.9 149.0v7M232.4 98.2h7M235.9 94.7v7M291.6 478.1h7M295.1 474.6v7M291.6 423.9h7M295.1 420.4v7M291.6 369.6h7M295.1 366.1v7M291.6 315.3h7M295.1 311.8v7M291.6 261.0h7M295.1 257.5v7M291.6 206.8h7M295.1 203.3v7M291.6 152.5h7M295.1 149.0v7M291.6 98.2h7M295.1 94.7v7M350.7 478.1h7M354.2 474.6v7M350.7 423.9h7M354.2 420.4v7M350.7 369.6h7M354.2 366.1v7M350.7 315.3h7M354.2 311.8v7M350.7 261.0h7M354.2 257.5v7M350.7 206.8h7M354.2 203.3v7M350.7 152.5h7M354.2 149.0v7M350.7 98.2h7M354.2 94.7v7M409.8 478.1h7M413.3 474.6v7M409.8 423.9h7M413.3 420.4v7M409.8 369.6h7M413.3 366.1v7M409.8 261.0h7M413.3 257.5v7M409.8 206.8h7M413.3 203.3v7M409.8 152.5h7M413.3 149.0v7M409.8 98.2h7M413.3 94.7v7M469.0 478.1h7M472.5 474.6v7M469.0 423.9h7M472.5 420.4v7M469.0 315.3h7M472.5 311.8v7M469.0 261.0h7M472.5 257.5v7M469.0 206.8h7M472.5 203.3v7M469.0 152.5h7M472.5 149.0v7M469.0 98.2h7M472.5 94.7v7" stroke="#bcbcbc" stroke-opacity="0.68" stroke-width="1" fill="none"/></g>
<path d="M226.3 166.9 L461.3 361.0 L149.3 498.6 Z" fill="none" stroke="#000" stroke-opacity="0.85" stroke-width="1.8" stroke-dasharray="1.7 2" stroke-linejoin="miter"/>
<path d="M231.0 177.2 L459.8 360.6 L148.8 500.0 Z" fill="none" stroke="#000" stroke-width="2" stroke-linejoin="miter"/>
<circle cx="261.8" cy="338" r="1.7" fill="#404040"/>
<circle cx="161.0" cy="529.8" r="3.6" fill="#3a14c8" stroke="#b9a8e8" stroke-width="0.9"/>
<text x="125.5" y="530.6" font-size="12" fill="#d8d8d8">400</text>
<circle cx="131.9" cy="501.0" r="3.6" fill="#1010d0" stroke="#d8d8f0" stroke-width="0.9"/>
<text x="100.4" y="505.3" font-size="12" fill="#d8d8d8">470</text>
<circle cx="112.5" cy="460.4" r="3.6" fill="#1048d8" stroke="#b0c8f0" stroke-width="0.9"/>
<text x="81.0" y="464.4" font-size="12" fill="#d8d8d8">480</text>
<circle cx="85.3" cy="372.3" r="3.6" fill="#2aa0a0" stroke="#3fb0b0" stroke-width="0.9"/>
<text x="94.3" y="376.6" font-size="12" fill="#3f6f7a">490</text>
<circle cx="63.3" cy="240.2" r="3.6" fill="#20c088" stroke="#30c890" stroke-width="0.9"/>
<text x="72.3" y="244.5" font-size="12" fill="#2f7a5c">500</text>
<circle cx="66.7" cy="125.3" r="3.6" fill="#14e040" stroke="#20e850" stroke-width="0.9"/>
<text x="75.7" y="129.6" font-size="12" fill="#1c7430">510</text>
<circle cx="102.4" cy="79.9" r="3.6" fill="#10e410" stroke="#28ec28" stroke-width="0.9"/>
<text x="67.4" y="86.8" font-size="12" fill="#dcdcdc">520</text>
<circle cx="150.0" cy="95.0" r="3.6" fill="#28dc08" stroke="#38e418" stroke-width="0.9"/>
<text x="159.0" y="99.3" font-size="12" fill="#d8d8d8">530</text>
<circle cx="194.3" cy="123.0" r="3.6" fill="#4cd408" stroke="#58dc18" stroke-width="0.9"/>
<text x="203.3" y="127.3" font-size="12" fill="#d8d8d8">540</text>
<circle cx="279.2" cy="193.5" r="3.6" fill="#8cb018" stroke="#94b820" stroke-width="0.9"/>
<text x="288.2" y="197.8" font-size="12" fill="#d8d8d8">560</text>
<circle cx="361.6" cy="268.3" r="3.6" fill="#b08a18" stroke="#b89420" stroke-width="0.9"/>
<text x="370.4" y="273.1" font-size="12" fill="#d8d8d8">580</text>
<circle cx="429.3" cy="330.2" r="3.6" fill="#c05810" stroke="#c86820" stroke-width="0.9"/>
<text x="438.3" y="334.5" font-size="12" fill="#e0e0e0">600</text>
<circle cx="467.5" cy="365.1" r="3.6" fill="#d81818" stroke="#e87070" stroke-width="0.9"/>
<text x="476.5" y="369.4" font-size="12" fill="#e0e0e0">620</text>
<circle cx="493.0" cy="388.4" r="3.6" fill="#e01020" stroke="#f06070" stroke-width="0.9"/>
<text x="463.0" y="391.7" font-size="12" fill="#b01830">700</text>
<g stroke="#000" fill="none"><path d="M58.5 74.9V533.8M58.5 75.5H500.0M58.5 533.2H500.0" stroke-width="1.2"/><path d="M499.0 75.5V533.2" stroke-width="2"/></g>
<path d="M117.5 533.2v-5M117.5 75.5v5M176.5 533.2v-5M176.5 75.5v5M235.5 533.2v-5M235.5 75.5v5M295.5 533.2v-5M295.5 75.5v5M354.5 533.2v-5M354.5 75.5v5M413.5 533.2v-5M413.5 75.5v5M472.5 533.2v-5M472.5 75.5v5M58.5 532.5h4.6M499.0 532.5h-4.6M58.5 478.5h4.6M499.0 478.5h-4.6M58.5 423.5h4.6M499.0 423.5h-4.6M58.5 369.5h4.6M499.0 369.5h-4.6M58.5 315.5h4.6M499.0 315.5h-4.6M58.5 261.5h4.6M499.0 261.5h-4.6M58.5 206.5h4.6M499.0 206.5h-4.6M58.5 152.5h4.6M499.0 152.5h-4.6M58.5 98.5h4.6M499.0 98.5h-4.6" stroke="#000" stroke-width="1.1" fill="none"/>
<text x="58.5" y="547" font-size="11.3" text-anchor="middle" fill="#000">0</text>
<text x="117.6" y="547" font-size="11.3" text-anchor="middle" fill="#000">0.1</text>
<text x="176.8" y="547" font-size="11.3" text-anchor="middle" fill="#000">0.2</text>
<text x="235.9" y="547" font-size="11.3" text-anchor="middle" fill="#000">0.3</text>
<text x="295.1" y="547" font-size="11.3" text-anchor="middle" fill="#000">0.4</text>
<text x="354.2" y="547" font-size="11.3" text-anchor="middle" fill="#000">0.5</text>
<text x="413.3" y="547" font-size="11.3" text-anchor="middle" fill="#000">0.6</text>
<text x="472.5" y="547" font-size="11.3" text-anchor="middle" fill="#000">0.7</text>
<text x="53.5" y="536.2" font-size="11.3" text-anchor="end" fill="#000">0</text>
<text x="53.5" y="481.9" font-size="11.3" text-anchor="end" fill="#000">0.1</text>
<text x="53.5" y="427.7" font-size="11.3" text-anchor="end" fill="#000">0.2</text>
<text x="53.5" y="373.4" font-size="11.3" text-anchor="end" fill="#000">0.3</text>
<text x="53.5" y="319.1" font-size="11.3" text-anchor="end" fill="#000">0.4</text>
<text x="53.5" y="264.8" font-size="11.3" text-anchor="end" fill="#000">0.5</text>
<text x="53.5" y="210.6" font-size="11.3" text-anchor="end" fill="#000">0.6</text>
<text x="53.5" y="156.3" font-size="11.3" text-anchor="end" fill="#000">0.7</text>
<text x="53.5" y="102.0" font-size="11.3" text-anchor="end" fill="#000">0.8</text>
<text x="276.6" y="563.6" font-size="11.5" font-weight="bold" text-anchor="middle">x</text>
<text x="0" y="0" font-size="11.5" font-weight="bold" text-anchor="middle" transform="translate(26.2 305.2) rotate(-90)">y</text>
<text x="278" y="65.5" font-size="13" font-weight="bold" text-anchor="middle" textLength="213" lengthAdjust="spacingAndGlyphs">CIE 1931 xy Chromaticity diagram</text>
<text x="486" y="91.0" font-size="11" font-weight="bold" text-anchor="end" fill="#fff" xml:space="preserve">Input:  DisplayP3-v2-magic.icc</text>
<text x="486" y="104.6" font-size="11" font-weight="bold" text-anchor="end" fill="#fff" xml:space="preserve">Output: PA278CGV_native_100cd_6500K_gamma22_31012024.icm</text>
<text x="486" y="118.2" font-size="11" font-weight="bold" text-anchor="end" fill="#fff" xml:space="preserve">White point:  x = 0.346  y = 0.359</text>
<text x="486" y="131.8" font-size="11" font-weight="bold" text-anchor="end" fill="#fff" xml:space="preserve">02-Feb-2024 02:13:46</text>
</svg>
<svg width="797" height="652" viewBox="0 0 797 652"><defs><linearGradient id="h0" x1="0" x2="0" y1="0" y2="1"><stop offset="0" stop-color="#ff1d00"/><stop offset="0.152" stop-color="#ff1d00"/><stop offset="0.282" stop-color="#f4260c"/><stop offset="0.950" stop-color="#848484"/><stop offset="1" stop-color="#848484"/></linearGradient>
<linearGradient id="h1" x1="0" x2="0" y1="0" y2="1"><stop offset="0" stop-color="#ff4900"/><stop offset="0.144" stop-color="#ff4900"/><stop offset="0.267" stop-color="#f54e0b"/><stop offset="0.950" stop-color="#848484"/><stop offset="1" stop-color="#848484"/></linearGradient>
<linearGradient id="h2" x1="0" x2="0" y1="0" y2="1"><stop offset="0" stop-color="#ff7100"/><stop offset="0.135" stop-color="#ff7100"/><stop offset="0.251" stop-color="#f6730a"/><stop offset="0.950" stop-color="#848484"/><stop offset="1" stop-color="#848484"/></linearGradient>
<linearGradient id="h3" x1="0" x2="0" y1="0" y2="1"><stop offset="0" stop-color="#ff9700"/><stop offset="0.129" stop-color="#ff9700"/><stop offset="0.239" stop-color="#f6950a"/><stop offset="0.950" stop-color="#848484"/><stop offset="1" stop-color="#848484"/></linearGradient>
<linearGradient id="h4" x1="0" x2="0" y1="0" y2="1"><stop offset="0" stop-color="#ffbb00"/><stop offset="0.125" stop-color="#ffbb00"/><stop offset="0.232" stop-color="#f6b709"/><stop offset="0.950" stop-color="#848484"/><stop offset="1" stop-color="#848484"/></linearGradient>
<linearGradient id="h5" x1="0" x2="0" y1="0" y2="1"><stop offset="0" stop-color="#ffdd00"/><stop offset="0.121" stop-color="#ffdd00"/><stop offset="0.225" stop-color="#f7d709"/><stop offset="0.950" stop-color="#848484"/><stop offset="1" stop-color="#848484"/></linearGradient>
<linearGradient id="h6" x1="0" x2="0" y1="0" y2="1"><stop offset="0" stop-color="#ffff00"/><stop offset="0.117" stop-color="#ffff00"/><stop offset="0.218" stop-color="#f7f708"/><stop offset="0.950" stop-color="#848484"/><stop offset="1" stop-color="#848484"/></linearGradient>
<linearGradient id="h7" x1="0" x2="0" y1="0" y2="1"><stop offset="0" stop-color="#d1ff00"/><stop offset="0.129" stop-color="#d1ff00"/><stop offset="0.240" stop-color="#cbf60a"/><stop offset="0.950" stop-color="#848484"/><stop offset="1" stop-color="#848484"/></linearGradient>
<linearGradient id="h8" x1="0" x2="0" y1="0" y2="1"><stop offset="0" stop-color="#a4ff00"/><stop offset="0.141" stop-color="#a4ff00"/><stop offset="0.262" stop-color="#a1f50b"/><stop offset="0.950" stop-color="#848484"/><stop offset="1" stop-color="#848484"/></linearGradient>
<linearGradient id="h9" x1="0" x2="0" y1="0" y2="1"><stop offset="0" stop-color="#79ff00"/><stop offset="0.153" stop-color="#79ff00"/><stop offset="0.285" stop-color="#7af40c"/><stop offset="0.950" stop-color="#848484"/><stop offset="1" stop-color="#848484"/></linearGradient>
<linearGradient id="h10" x1="0" x2="0" y1="0" y2="1"><stop offset="0" stop-color="#51ff00"/><stop offset="0.163" stop-color="#51ff00"/><stop offset="0.302" stop-color="#56f30d"/><stop offset="0.950" stop-color="#848484"/><stop offset="1" stop-color="#848484"/></linearGradient>
<linearGradient id="h11" x1="0" x2="0" y1="0" y2="1"><stop offset="0" stop-color="#2cff00"/><stop offset="0.171" stop-color="#2cff00"/><stop offset="0.318" stop-color="#35f20e"/><stop offset="0.950" stop-color="#848484"/><stop offset="1" stop-color="#848484"/></linearGradient>
<linearGradient id="h12" x1="0" x2="0" y1="0" y2="1"><stop offset="0" stop-color="#0cff00"/><stop offset="0.180" stop-color="#0cff00"/><stop offset="0.334" stop-color="#19f10f"/><stop offset="0.950" stop-color="#848484"/><stop offset="1" stop-color="#848484"/></linearGradient>
<linearGradient id="h13" x1="0" x2="0" y1="0" y2="1"><stop offset="0" stop-color="#00ff09"/><stop offset="0.185" stop-color="#00ff09"/><stop offset="0.343" stop-color="#0ff117"/><stop offset="0.950" stop-color="#848484"/><stop offset="1" stop-color="#848484"/></linearGradient>
<linearGradient id="h14" x1="0" x2="0" y1="0" y2="1"><stop offset="0" stop-color="#00ff26"/><stop offset="0.178" stop-color="#00ff26"/><stop offset="0.331" stop-color="#0ef230"/><stop offset="0.950" stop-color="#848484"/><stop offset="1" stop-color="#848484"/></linearGradient>
<linearGradient id="h15" x1="0" x2="0" y1="0" y2="1"><stop offset="0" stop-color="#00ff4a"/><stop offset="0.171" stop-color="#00ff4a"/><stop offset="0.318" stop-color="#0ef250"/><stop offset="0.950" stop-color="#848484"/><stop offset="1" stop-color="#848484"/></linearGradient>
<linearGradient id="h16" x1="0" x2="0" y1="0" y2="1"><stop offset="0" stop-color="#00ff72"/><stop offset="0.164" stop-color="#00ff72"/><stop offset="0.305" stop-color="#0df374"/><stop offset="0.950" stop-color="#848484"/><stop offset="1" stop-color="#848484"/></linearGradient>
<linearGradient id="h17" x1="0" x2="0" y1="0" y2="1"><stop offset="0" stop-color="#00ff9e"/><stop offset="0.159" stop-color="#00ff9e"/><stop offset="0.295" stop-color="#0cf39c"/><stop offset="0.950" stop-color="#848484"/><stop offset="1" stop-color="#848484"/></linearGradient>
<linearGradient id="h18" x1="0" x2="0" y1="0" y2="1"><stop offset="0" stop-color="#00ffcd"/><stop offset="0.153" stop-color="#00ffcd"/><stop offset="0.284" stop-color="#0cf4c7"/><stop offset="0.950" stop-color="#848484"/><stop offset="1" stop-color="#848484"/></linearGradient>
<linearGradient id="h19" x1="0" x2="0" y1="0" y2="1"><stop offset="0" stop-color="#00ffff"/><stop offset="0.148" stop-color="#00ffff"/><stop offset="0.274" stop-color="#0bf4f4"/><stop offset="0.950" stop-color="#848484"/><stop offset="1" stop-color="#848484"/></linearGradient>
<linearGradient id="h20" x1="0" x2="0" y1="0" y2="1"><stop offset="0" stop-color="#00caff"/><stop offset="0.152" stop-color="#00caff"/><stop offset="0.282" stop-color="#0cc4f4"/><stop offset="0.950" stop-color="#848484"/><stop offset="1" stop-color="#848484"/></linearGradient>
<linearGradient id="h21" x1="0" x2="0" y1="0" y2="1"><stop offset="0" stop-color="#0098ff"/><stop offset="0.156" stop-color="#0098ff"/><stop offset="0.290" stop-color="#0c97f4"/><stop offset="0.950" stop-color="#848484"/><stop offset="1" stop-color="#848484"/></linearGradient>
<linearGradient id="h22" x1="0" x2="0" y1="0" y2="1"><stop offset="0" stop-color="#006bff"/><stop offset="0.160" stop-color="#006bff"/><stop offset="0.297" stop-color="#0d6ef3"/><stop offset="0.950" stop-color="#848484"/><stop offset="1" stop-color="#848484"/></linearGradient>
<linearGradient id="h23" x1="0" x2="0" y1="0" y2="1"><stop offset="0" stop-color="#0043ff"/><stop offset="0.166" stop-color="#0043ff"/><stop offset="0.309" stop-color="#0d49f3"/><stop offset="0.950" stop-color="#848484"/><stop offset="1" stop-color="#848484"/></linearGradient>
<linearGradient id="h24" x1="0" x2="0" y1="0" y2="1"><stop offset="0" stop-color="#0021ff"/><stop offset="0.173" stop-color="#0021ff"/><stop offset="0.321" stop-color="#0e2bf2"/><stop offset="0.950" stop-color="#848484"/><stop offset="1" stop-color="#848484"/></linearGradient>
<linearGradient id="h25" x1="0" x2="0" y1="0" y2="1"><stop offset="0" stop-color="#0007ff"/><stop offset="0.179" stop-color="#0007ff"/><stop offset="0.333" stop-color="#0f15f1"/><stop offset="0.950" stop-color="#848484"/><stop offset="1" stop-color="#848484"/></linearGradient>
<linearGradient id="h26" x1="0" x2="0" y1="0" y2="1"><stop offset="0" stop-color="#1400ff"/><stop offset="0.178" stop-color="#1400ff"/><stop offset="0.330" stop-color="#200ef2"/><stop offset="0.950" stop-color="#848484"/><stop offset="1" stop-color="#848484"/></linearGradient>
<linearGradient id="h27" x1="0" x2="0" y1="0" y2="1"><stop offset="0" stop-color="#3b00ff"/><stop offset="0.170" stop-color="#3b00ff"/><stop offset="0.316" stop-color="#420ef2"/><stop offset="0.950" stop-color="#848484"/><stop offset="1" stop-color="#848484"/></linearGradient>
<linearGradient id="h28" x1="0" x2="0" y1="0" y2="1"><stop offset="0" stop-color="#6200ff"/><stop offset="0.162" stop-color="#6200ff"/><stop offset="0.301" stop-color="#650df3"/><stop offset="0.950" stop-color="#848484"/><stop offset="1" stop-color="#848484"/></linearGradient>
<linearGradient id="h29" x1="0" x2="0" y1="0" y2="1"><stop offset="0" stop-color="#8900ff"/><stop offset="0.154" stop-color="#8900ff"/><stop offset="0.286" stop-color="#890cf4"/><stop offset="0.950" stop-color="#848484"/><stop offset="1" stop-color="#848484"/></linearGradient>
<linearGradient id="h30" x1="0" x2="0" y1="0" y2="1"><stop offset="0" stop-color="#b100ff"/><stop offset="0.146" stop-color="#b100ff"/><stop offset="0.272" stop-color="#ad0bf5"/><stop offset="0.950" stop-color="#848484"/><stop offset="1" stop-color="#848484"/></linearGradient>
<linearGradient id="h31" x1="0" x2="0" y1="0" y2="1"><stop offset="0" stop-color="#d800ff"/><stop offset="0.138" stop-color="#d800ff"/><stop offset="0.257" stop-color="#d10af5"/><stop offset="0.950" stop-color="#848484"/><stop offset="1" stop-color="#848484"/></linearGradient>
<linearGradient id="h32" x1="0" x2="0" y1="0" y2="1"><stop offset="0" stop-color="#ff00ff"/><stop offset="0.130" stop-color="#ff00ff"/><stop offset="0.242" stop-color="#f60af6"/><stop offset="0.950" stop-color="#848484"/><stop offset="1" stop-color="#848484"/></linearGradient>
<linearGradient id="h33" x1="0" x2="0" y1="0" y2="1"><stop offset="0" stop-color="#ff00d1"/><stop offset="0.133" stop-color="#ff00d1"/><stop offset="0.246" stop-color="#f60acb"/><stop offset="0.950" stop-color="#848484"/><stop offset="1" stop-color="#848484"/></linearGradient>
<linearGradient id="h34" x1="0" x2="0" y1="0" y2="1"><stop offset="0" stop-color="#ff00a4"/><stop offset="0.135" stop-color="#ff00a4"/><stop offset="0.251" stop-color="#f60aa2"/><stop offset="0.950" stop-color="#848484"/><stop offset="1" stop-color="#848484"/></linearGradient>
<linearGradient id="h35" x1="0" x2="0" y1="0" y2="1"><stop offset="0" stop-color="#ff0079"/><stop offset="0.138" stop-color="#ff0079"/><stop offset="0.256" stop-color="#f50a7a"/><stop offset="0.950" stop-color="#848484"/><stop offset="1" stop-color="#848484"/></linearGradient>
<linearGradient id="h36" x1="0" x2="0" y1="0" y2="1"><stop offset="0" stop-color="#ff0051"/><stop offset="0.142" stop-color="#ff0051"/><stop offset="0.264" stop-color="#f50b55"/><stop offset="0.950" stop-color="#848484"/><stop offset="1" stop-color="#848484"/></linearGradient>
<linearGradient id="h37" x1="0" x2="0" y1="0" y2="1"><stop offset="0" stop-color="#ff002c"/><stop offset="0.148" stop-color="#ff002c"/><stop offset="0.275" stop-color="#f40b33"/><stop offset="0.950" stop-color="#848484"/><stop offset="1" stop-color="#848484"/></linearGradient>
<linearGradient id="h38" x1="0" x2="0" y1="0" y2="1"><stop offset="0" stop-color="#ff000c"/><stop offset="0.153" stop-color="#ff000c"/><stop offset="0.285" stop-color="#f40c17"/><stop offset="0.950" stop-color="#848484"/><stop offset="1" stop-color="#848484"/></linearGradient><clipPath id="hp"><rect x="552" y="56" width="234" height="233"/></clipPath><filter id="hb" x="500" y="0" width="297" height="400" filterUnits="userSpaceOnUse"><feGaussianBlur stdDeviation="3 0"/></filter></defs><rect x="552" y="56" width="234" height="233" fill="#848484"/><g clip-path="url(#hp)"><g filter="url(#hb)"><rect x="540" y="56" width="14" height="233" fill="url(#h0)"/><rect x="784" y="56" width="14" height="233" fill="url(#h38)"/><rect x="551.5" y="56" width="7.0" height="233" fill="url(#h0)"/>
<rect x="557.5" y="56" width="7.0" height="233" fill="url(#h1)"/>
<rect x="563.5" y="56" width="7.0" height="233" fill="url(#h2)"/>
<rect x="569.5" y="56" width="7.0" height="233" fill="url(#h3)"/>
<rect x="575.5" y="56" width="7.0" height="233" fill="url(#h4)"/>
<rect x="581.5" y="56" width="7.0" height="233" fill="url(#h5)"/>
<rect x="587.5" y="56" width="7.0" height="233" fill="url(#h6)"/>
<rect x="593.5" y="56" width="7.0" height="233" fill="url(#h7)"/>
<rect x="599.5" y="56" width="7.0" height="233" fill="url(#h8)"/>
<rect x="605.5" y="56" width="7.0" height="233" fill="url(#h9)"/>
<rect x="611.5" y="56" width="7.0" height="233" fill="url(#h10)"/>
<rect x="617.5" y="56" width="7.0" height="233" fill="url(#h11)"/>
<rect x="623.5" y="56" width="7.0" height="233" fill="url(#h12)"/>
<rect x="629.5" y="56" width="7.0" height="233" fill="url(#h13)"/>
<rect x="635.5" y="56" width="7.0" height="233" fill="url(#h14)"/>
<rect x="641.5" y="56" width="7.0" height="233" fill="url(#h15)"/>
<rect x="647.5" y="56" width="7.0" height="233" fill="url(#h16)"/>
<rect x="653.5" y="56" width="7.0" height="233" fill="url(#h17)"/>
<rect x="659.5" y="56" width="7.0" height="233" fill="url(#h18)"/>
<rect x="665.5" y="56" width="7.0" height="233" fill="url(#h19)"/>
<rect x="671.5" y="56" width="7.0" height="233" fill="url(#h20)"/>
<rect x="677.5" y="56" width="7.0" height="233" fill="url(#h21)"/>
<rect x="683.5" y="56" width="7.0" height="233" fill="url(#h22)"/>
<rect x="689.5" y="56" width="7.0" height="233" fill="url(#h23)"/>
<rect x="695.5" y="56" width="7.0" height="233" fill="url(#h24)"/>
<rect x="701.5" y="56" width="7.0" height="233" fill="url(#h25)"/>
<rect x="707.5" y="56" width="7.0" height="233" fill="url(#h26)"/>
<rect x="713.5" y="56" width="7.0" height="233" fill="url(#h27)"/>
<rect x="719.5" y="56" width="7.0" height="233" fill="url(#h28)"/>
<rect x="725.5" y="56" width="7.0" height="233" fill="url(#h29)"/>
<rect x="731.5" y="56" width="7.0" height="233" fill="url(#h30)"/>
<rect x="737.5" y="56" width="7.0" height="233" fill="url(#h31)"/>
<rect x="743.5" y="56" width="7.0" height="233" fill="url(#h32)"/>
<rect x="749.5" y="56" width="7.0" height="233" fill="url(#h33)"/>
<rect x="755.5" y="56" width="7.0" height="233" fill="url(#h34)"/>
<rect x="761.5" y="56" width="7.0" height="233" fill="url(#h35)"/>
<rect x="767.5" y="56" width="7.0" height="233" fill="url(#h36)"/>
<rect x="773.5" y="56" width="7.0" height="233" fill="url(#h37)"/>
<rect x="779.5" y="56" width="7.0" height="233" fill="url(#h38)"/></g></g></svg>
<div class="dd" style="left:553.0px;top:298.0px;width:12.0px;height:12.0px;background:#fff;"></div>
<span class="t" style="left:571.0px;transform-origin:0 50%;top:296.5px;font-size:12px;line-height:16px;font-weight:normal;color:#000;transform:scaleX(0.874);">Zoom</span>
<div class="" style="left:616.0px;top:290.0px;width:175.0px;height:28.0px;background:#808080;border:1.5px solid #1c1c1c;"></div>
<div class="btn" style="left:621.7px;top:295.0px;width:38.3px;height:18.5px;background:#f0f0f0;"></div>
<span class="t" style="left:640.9px;transform-origin:50% 50%;top:296.8px;font-size:12px;line-height:16px;font-weight:normal;color:#000;transform:translateX(-50%) scaleX(0.911);">Inp</span>
<div class="btn" style="left:664.4px;top:295.0px;width:38.6px;height:18.5px;background:#f0f0f0;"></div>
<span class="t" style="left:683.7px;transform-origin:50% 50%;top:296.8px;font-size:12px;line-height:16px;font-weight:normal;color:#000;transform:translateX(-50%) scaleX(0.826);">I&gt;M</span>
<div class="btn" style="left:707.0px;top:295.0px;width:38.5px;height:18.5px;background:#f0f0f0;"></div>
<span class="t" style="left:726.2px;transform-origin:50% 50%;top:296.8px;font-size:12px;line-height:16px;font-weight:normal;color:#000;transform:translateX(-50%) scaleX(0.842);">Outp</span>
<div class="btn" style="left:749.6px;top:295.0px;width:38.8px;height:18.5px;background:#ffffc8;"></div>
<span class="t" style="left:769.0px;transform-origin:50% 50%;top:296.8px;font-size:12px;line-height:16px;font-weight:bold;color:#000;transform:translateX(-50%) scaleX(0.942);">O&gt;M</span>
<div class="btn" style="left:553.0px;top:316.0px;width:48.0px;height:19.4px;background:#f0f0f0;"></div>
<span class="t" style="left:577.0px;transform-origin:50% 50%;top:318.2px;font-size:12px;line-height:16px;font-weight:normal;color:#000;transform:translateX(-50%) scaleX(0.913);">Z-Out</span>
<span class="t" style="left:630.5px;transform-origin:0 50%;top:322.0px;font-size:12px;line-height:16px;font-weight:normal;color:#000;transform:scaleX(0.853);">Black Pt. Comp.</span>
<div class="dd" style="left:710.0px;top:320.0px;width:78.0px;height:19.0px;background:#fff;"></div>
<div class="btn" style="left:769.5px;top:321.5px;width:17.0px;height:16.0px;background:#f0f0f0;"></div>
<div class="arr" style="left:774.5px;top:328.3px"></div>
<span class="t" style="left:713.8px;transform-origin:0 50%;top:322.0px;font-size:12px;line-height:16px;font-weight:normal;color:#000;transform:scaleX(0.881);">Off</span>
<div class="" style="left:553.0px;top:340.5px;width:240.0px;height:27.0px;background:#808080;border:1.5px solid #1c1c1c;"></div>
<div class="dd" style="left:556.0px;top:344.0px;width:232.0px;height:19.5px;background:#fff;"></div>
<div class="btn" style="left:769.5px;top:345.5px;width:17.0px;height:16.5px;background:#f0f0f0;"></div>
<div class="arr" style="left:774.5px;top:352.6px"></div>
<span class="t" style="left:559.8px;transform-origin:0 50%;top:346.2px;font-size:12px;line-height:16px;font-weight:bold;color:#000;transform:scaleX(0.968);">xy Chromaticity (Saturation map)</span>
<div class="pan" style="left:553.0px;top:369.0px;width:240.0px;height:128.5px;background:#f0f0f0;"></div>
<div class="btn" style="left:559.0px;top:375.0px;width:79.0px;height:22.0px;background:#f0f0f0;"></div>
<span class="t" style="left:598.5px;transform-origin:50% 50%;top:378.5px;font-size:12px;line-height:16px;font-weight:normal;color:#a4a4a4;transform:translateX(-50%) scaleX(0.885);">Reset scale</span>
<div class="btn" style="left:642.0px;top:375.0px;width:76.4px;height:22.0px;background:#f0f0f0;"></div>
<span class="t" style="left:680.2px;transform-origin:50% 50%;top:378.5px;font-size:12px;line-height:16px;font-weight:normal;color:#a4a4a4;transform:translateX(-50%) scaleX(0.918);">Reset view</span>
<div class="btn" style="left:723.0px;top:375.0px;width:66.4px;height:22.0px;background:#f0f0f0;"></div>
<span class="t" style="left:756.2px;transform-origin:50% 50%;top:378.5px;font-size:12px;line-height:16px;font-weight:normal;color:#a4a4a4;transform:translateX(-50%) scaleX(0.940);">Top view</span>
<div class="dd" style="left:558.0px;top:404.0px;width:13.0px;height:12.0px;background:#fff;"></div>
<svg width="797" height="652" style="pointer-events:none"><path d="M560.8 409.6l3.2 3.3l4.1-6" stroke="#000" stroke-width="2" fill="none"/></svg>
<span class="t" style="left:576.0px;transform-origin:0 50%;top:402.3px;font-size:12px;line-height:16px;font-weight:normal;color:#000;transform:scaleX(0.939);">Wavelth</span>
<div class="dd" style="left:627.7px;top:402.0px;width:160.8px;height:18.5px;background:#fff;"></div>
<div class="btn" style="left:770.0px;top:403.5px;width:17.0px;height:15.5px;background:#f0f0f0;"></div>
<div class="arr" style="left:775.0px;top:410.1px"></div>
<span class="t" style="left:631.5px;transform-origin:0 50%;top:403.8px;font-size:12px;line-height:16px;font-weight:normal;color:#000;transform:scaleX(0.881);">Normal/gamut boundaries</span>
<div class="pan" style="left:553.0px;top:468.0px;width:87.0px;height:29.5px;"></div>
<div class="btn" style="left:558.0px;top:473.0px;width:77.0px;height:20.5px;background:#f0f0f0;"></div>
<span class="t" style="left:596.5px;transform-origin:50% 50%;top:475.8px;font-size:12px;line-height:16px;font-weight:bold;color:#000;transform:translateX(-50%) scaleX(1.006);">Print Test</span>
<div class="pan" style="left:553.0px;top:496.5px;width:240.0px;height:31.0px;"></div>
<div class="dd" style="left:558.0px;top:504.0px;width:230.5px;height:17.5px;background:#f0f0f0;"></div>
<span class="t" style="left:673.0px;transform-origin:50% 50%;top:504.5px;font-size:12px;line-height:16px;font-weight:normal;color:#000;transform:translateX(-50%) scaleX(0.896);">not selected</span>
<div class="pan" style="left:559.0px;top:532.0px;width:143.0px;height:56.0px;"></div>
<span class="t" style="left:568.8px;transform-origin:0 50%;top:537.0px;font-size:12px;line-height:16px;font-weight:bold;color:#000;transform:scaleX(0.970);">Display A</span>
<div class="btn" style="left:650.0px;top:536.0px;width:47.4px;height:23.6px;background:#f0f0f0;"></div>
<span class="t" style="left:673.7px;transform-origin:50% 50%;top:540.3px;font-size:12px;line-height:16px;font-weight:bold;color:#000;transform:translateX(-50%) scaleX(1.017);">View</span>
<div class="dd" style="left:563.0px;top:562.0px;width:38.5px;height:18.6px;background:#fff;"></div>
<div class="btn" style="left:583.0px;top:563.5px;width:17.0px;height:15.6px;background:#f0f0f0;"></div>
<div class="arr" style="left:588.0px;top:570.1px"></div>
<span class="t" style="left:566.8px;transform-origin:0 50%;top:563.8px;font-size:12px;line-height:16px;font-weight:normal;color:#000;transform:scaleX(0.860);">1</span>
<span class="t" style="left:611.0px;transform-origin:0 50%;top:563.5px;font-size:12px;line-height:16px;font-weight:normal;color:#000;transform:scaleX(0.896);">IN&nbsp; OUT</span>
<div class="dd" style="left:659.0px;top:562.0px;width:38.4px;height:18.6px;background:#fff;"></div>
<div class="btn" style="left:678.9px;top:563.5px;width:17.0px;height:15.6px;background:#f0f0f0;"></div>
<div class="arr" style="left:683.9px;top:570.1px"></div>
<span class="t" style="left:662.8px;transform-origin:0 50%;top:563.8px;font-size:12px;line-height:16px;font-weight:normal;color:#000;transform:scaleX(0.860);">3</span>
<div class="pan" style="left:559.0px;top:592.4px;width:143.0px;height:55.6px;"></div>
<span class="t" style="left:568.8px;transform-origin:0 50%;top:597.0px;font-size:12px;line-height:16px;font-weight:bold;color:#000;transform:scaleX(0.962);">Display B</span>
<div class="btn" style="left:651.0px;top:596.3px;width:47.0px;height:23.1px;background:#f0f0f0;"></div>
<span class="t" style="left:674.5px;transform-origin:50% 50%;top:600.3px;font-size:12px;line-height:16px;font-weight:bold;color:#000;transform:translateX(-50%) scaleX(1.017);">View</span>
<div class="dd" style="left:563.0px;top:622.4px;width:38.5px;height:18.6px;background:#fff;"></div>
<div class="btn" style="left:583.0px;top:623.9px;width:17.0px;height:15.6px;background:#f0f0f0;"></div>
<div class="arr" style="left:588.0px;top:630.5px"></div>
<span class="t" style="left:566.8px;transform-origin:0 50%;top:624.2px;font-size:12px;line-height:16px;font-weight:normal;color:#000;transform:scaleX(0.860);">2</span>
<span class="t" style="left:611.0px;transform-origin:0 50%;top:623.5px;font-size:12px;line-height:16px;font-weight:normal;color:#000;transform:scaleX(0.896);">IN&nbsp; OUT</span>
<div class="dd" style="left:659.5px;top:622.4px;width:38.5px;height:18.6px;background:#fff;"></div>
<div class="btn" style="left:679.5px;top:623.9px;width:17.0px;height:15.6px;background:#f0f0f0;"></div>
<div class="arr" style="left:684.5px;top:630.5px"></div>
<span class="t" style="left:663.3px;transform-origin:0 50%;top:624.2px;font-size:12px;line-height:16px;font-weight:normal;color:#000;transform:scaleX(0.860);">4</span>
<div class="btn" style="left:720.6px;top:533.0px;width:68.4px;height:21.5px;background:#f0f0f0;"></div>
<span class="t" style="left:754.8px;transform-origin:50% 50%;top:536.2px;font-size:12px;line-height:16px;font-weight:normal;color:#000;transform:translateX(-50%) scaleX(0.916);">Help</span>
<div class="btn" style="left:720.6px;top:564.5px;width:68.4px;height:21.5px;background:#f0f0f0;"></div>
<span class="t" style="left:754.8px;transform-origin:50% 50%;top:567.8px;font-size:12px;line-height:16px;font-weight:normal;color:#000;transform:translateX(-50%) scaleX(0.855);">Exit</span>
<svg width="797" height="652" viewBox="0 0 797 652" style="pointer-events:none"><g transform="translate(709 596)">
<defs><linearGradient id="lg" x1="0" x2="1" y1="0" y2="0"><stop offset="0" stop-color="#005000"/><stop offset="1" stop-color="#0a8c1e"/></linearGradient>
<linearGradient id="lb" x1="0" x2="0" y1="0" y2="1"><stop offset="0" stop-color="#12129a"/><stop offset="1" stop-color="#1414c4"/></linearGradient></defs>
<rect width="80" height="48" fill="url(#lb)"/>
<path d="M2.5 0H80V11L2.5 0.6Z" fill="url(#lg)"/>
<path d="M3 0.6L80 11V17.6L4 1.2Z" fill="#fff"/>
<path d="M5 1.4L80 17.6V23.7L6 2Z" fill="#d23c0a"/>
<path d="M6 2L80 23.7V26.8L7 2.6Z" fill="#fff"/>
<path d="M7 2.6L80 26.8V28.6L8 3Z" fill="#a01ea0"/>
<path d="M8 3L80 28.6V30.4L9 3.4Z" fill="#fff"/>
<path d="M3.6 8.2C8 6.2 12 8.5 31.3 20.7L9.6 28.2C5.5 24 3 16 3.6 8.2Z" fill="#ffffc4"/>
<text x="2.5" y="44.2" font-family="'Liberation Serif', serif" font-style="italic" font-size="17" fill="#fff" stroke="#fff" stroke-width="0.25" textLength="76.5" lengthAdjust="spacingAndGlyphs">Gamutvision</text>
</g></svg>
<span class="t" style="left:9.0px;transform-origin:0 50%;top:577.2px;font-size:11.5px;line-height:15.5px;font-weight:bold;color:#000;transform:scaleX(1.000);">1</span>
<div class="dd" style="left:20.4px;top:575.0px;width:251.6px;height:19.0px;background:#ffffc8;"></div>
<div class="btn" style="left:253.5px;top:576.5px;width:17.0px;height:16.0px;background:#f0f0f0;"></div>
<div class="arr" style="left:258.5px;top:583.3px"></div>
<span class="t" style="left:24.2px;transform-origin:0 50%;top:578.0px;font-size:12px;line-height:16px;font-weight:normal;color:#000;transform:scaleX(0.879);">DisplayP3-v2-magic.icc</span>
<div class="dd" style="left:278.8px;top:575.0px;width:251.7px;height:19.0px;background:#f0f0f0;"></div>
<div class="btn" style="left:512.0px;top:576.5px;width:17.0px;height:16.0px;background:#f0f0f0;"></div>
<div class="arr" style="left:517.0px;top:583.3px"></div>
<span class="t" style="left:282.6px;transform-origin:0 50%;top:578.0px;font-size:12px;line-height:16px;font-weight:normal;color:#000;transform:scaleX(0.866);">Browse...</span>
<span class="t" style="left:536.5px;transform-origin:0 50%;top:577.2px;font-size:11.5px;line-height:15.5px;font-weight:bold;color:#000;transform:scaleX(1.000);">3</span>
<div class="" style="left:20.0px;top:595.5px;width:223.5px;height:31.8px;background:#4472c4;border-left:2px solid #1a2a50;border-right:1.5px solid #20242c;border-top:1px solid #2c4a86;"></div>
<div class="btn" style="left:24.6px;top:601.3px;width:47.4px;height:23.1px;background:#ffffc8;"></div>
<span class="t" style="left:48.3px;transform-origin:50% 50%;top:604.8px;font-size:13px;line-height:17px;font-weight:bold;color:#000;transform:translateX(-50%) scaleX(0.939);">View</span>
<div class="dd" style="left:95.8px;top:601.3px;width:141.4px;height:19.9px;background:#ffffec;"></div>
<div class="btn" style="left:218.7px;top:602.8px;width:17.0px;height:16.9px;background:#f0f0f0;"></div>
<div class="arr" style="left:223.7px;top:610.0px"></div>
<span class="t" style="left:99.6px;transform-origin:0 50%;top:603.8px;font-size:12px;line-height:16px;font-weight:normal;color:#000;transform:scaleX(0.886);">None (or Print Test)</span>
<span class="t" style="left:250.0px;transform-origin:0 50%;top:603.5px;font-size:12px;line-height:16px;font-weight:normal;color:#000;transform:scaleX(0.885);">Rendering</span>
<div class="" style="left:308.0px;top:595.8px;width:222.0px;height:31.5px;background:#808080;border-left:2px solid #303030;border-right:1.5px solid #303030;border-top:1px solid #505050;"></div>
<div class="dd" style="left:313.8px;top:601.4px;width:141.2px;height:19.6px;background:#f0f0f0;"></div>
<div class="btn" style="left:436.5px;top:602.9px;width:17.0px;height:16.6px;background:#f0f0f0;"></div>
<div class="arr" style="left:441.5px;top:610.0px"></div>
<span class="t" style="left:317.6px;transform-origin:0 50%;top:603.7px;font-size:12px;line-height:16px;font-weight:normal;color:#000;transform:scaleX(0.869);">Absolute</span>
<div class="btn" style="left:480.0px;top:600.6px;width:46.5px;height:23.4px;background:#f0f0f0;"></div>
<span class="t" style="left:503.2px;transform-origin:50% 50%;top:604.3px;font-size:13px;line-height:17px;font-weight:bold;color:#000;transform:translateX(-50%) scaleX(0.939);">View</span>
<span class="t" style="left:9.0px;transform-origin:0 50%;top:628.9px;font-size:11.5px;line-height:15.5px;font-weight:bold;color:#000;transform:scaleX(1.000);">2</span>
<div class="dd" style="left:20.4px;top:628.4px;width:251.6px;height:18.6px;background:#e6ffe6;"></div>
<div class="btn" style="left:253.5px;top:629.9px;width:17.0px;height:15.6px;background:#f0f0f0;"></div>
<div class="arr" style="left:258.5px;top:636.5px"></div>
<span class="t" style="left:24.2px;transform-origin:0 50%;top:630.3px;font-size:12px;line-height:16px;font-weight:normal;color:#000;transform:scaleX(0.879);">PA278CGV_native_100cd_6500K_gamma22_31</span>
<div class="dd" style="left:278.8px;top:628.2px;width:251.7px;height:18.8px;background:#f0f0f0;"></div>
<div class="btn" style="left:512.0px;top:629.7px;width:17.0px;height:15.8px;background:#f0f0f0;"></div>
<div class="arr" style="left:517.0px;top:636.4px"></div>
<span class="t" style="left:282.6px;transform-origin:0 50%;top:630.4px;font-size:12px;line-height:16px;font-weight:normal;color:#000;transform:scaleX(0.866);">Browse...</span>
<span class="t" style="left:536.5px;transform-origin:0 50%;top:629.2px;font-size:11.5px;line-height:15.5px;font-weight:bold;color:#000;transform:scaleX(1.000);">4</span>
<svg width="797" height="652" viewBox="0 0 797 652" style="pointer-events:none">
<rect x="7" y="597.5" width="11" height="26.5" fill="#dedede"/><rect x="533.5" y="597.5" width="11" height="26.5" fill="#dedede"/>
<path d="M10.8 598.3h3.4v18.5h2.6l-4.3 7l-4.3-7h2.6z" fill="#505050"/>
<path d="M537.3 598.3h3.4v18.5h2.6l-4.3 7l-4.3-7h2.6z" fill="#505050"/></svg>
</div></div></body></html>
